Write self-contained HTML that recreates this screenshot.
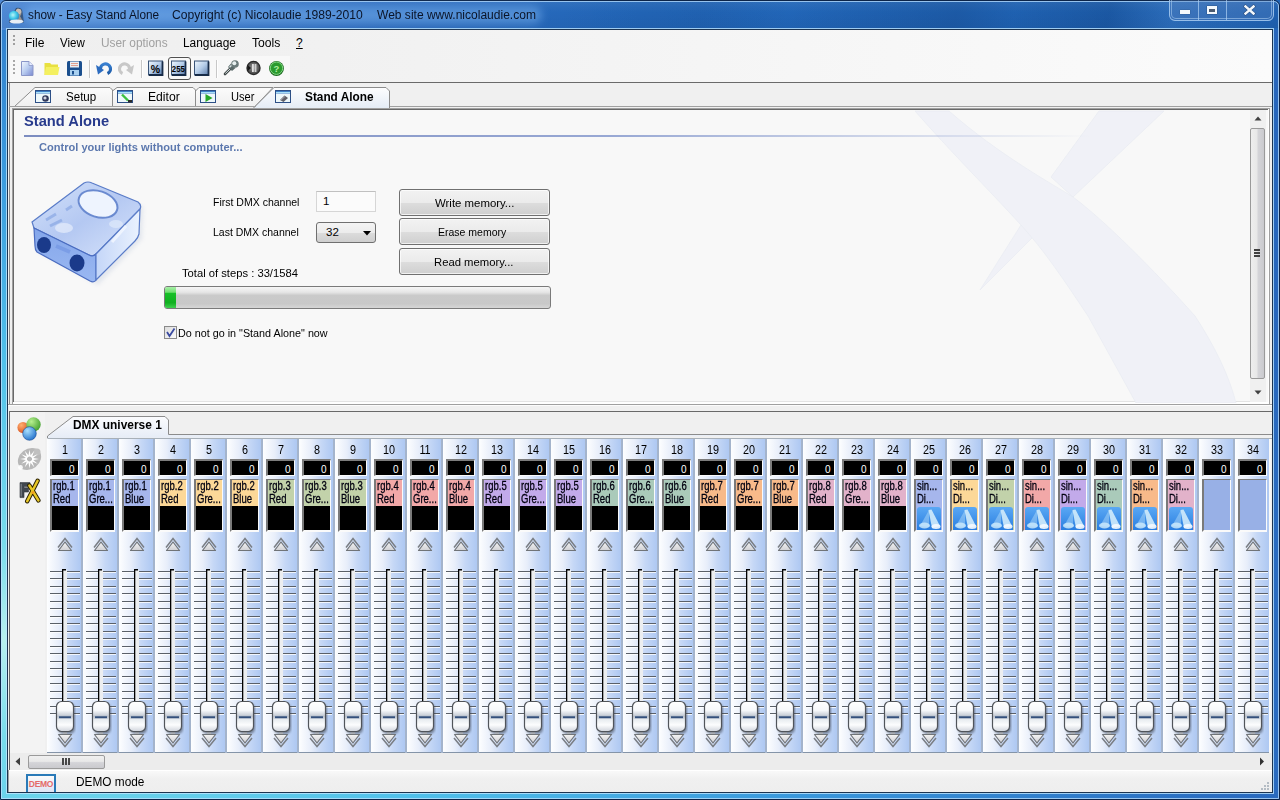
<!DOCTYPE html>
<html><head><meta charset="utf-8"><title>show - Easy Stand Alone</title>
<style>
html,body{margin:0;padding:0;width:1280px;height:800px;overflow:hidden;background:#2a6cc0;}
body{position:relative;font-family:"Liberation Sans",sans-serif;}
div,span,svg{position:absolute;}
.t{white-space:pre;}
</style></head><body>
<div style="left:0px;top:0px;width:1280px;height:800px;background:radial-gradient(ellipse 1400px 800px at 0px 640px,#b8f0ee 0%,#78dcec 12%,#50c0ea 35%,#3a98dc 60%,#2a6cc0 90%,#2766bb 100%);"></div>
<div style="left:0px;top:0px;width:1280px;height:30px;background:linear-gradient(90deg,#4d88d4 0%,#3f7ccc 12%,#2c6cbf 30%,#2266b8 50%,#1f64b6 100%);"></div>
<div style="left:0px;top:2px;width:1280px;height:26px;background:linear-gradient(180deg,rgba(255,255,255,.06) 0%,rgba(255,255,255,0) 40%,rgba(0,0,0,.04) 100%);"></div>
<div style="left:560px;top:2px;width:720px;height:26px;background:linear-gradient(100deg,rgba(0,20,60,0) 0%,rgba(0,20,60,.06) 20%,rgba(0,20,60,0) 32%,rgba(0,20,60,.14) 55%,rgba(0,20,60,.05) 63%,rgba(0,20,60,.16) 76%,rgba(255,255,255,.05) 85%,rgba(0,20,60,.05) 100%);"></div>
<div style="left:0px;top:0px;width:1280px;height:800px;box-sizing:border-box;border:1px solid #0c2448;border-radius:6px 6px 0 0;"></div>
<div style="left:1px;top:1px;width:1278px;height:798px;box-sizing:border-box;border:1px solid rgba(190,225,255,.75);border-radius:5px 5px 0 0;"></div>
<div style="left:6px;top:28px;width:1268px;height:766px;box-sizing:border-box;border:1px solid rgba(190,230,255,.8);"></div>
<div style="left:7px;top:29px;width:1266px;height:764px;box-sizing:border-box;border:1px solid #1c3450;"></div>
<div style="left:8px;top:30px;width:1264px;height:762px;background:#f0f0f0;"></div>
<svg style="position:absolute;left:7px;top:6px;" width="18" height="18" viewBox="0 0 18 18">
<defs><radialGradient id="gglobe" cx="0.4" cy="0.4" r="0.7"><stop offset="0" stop-color="#b8f4f8"/><stop offset="0.5" stop-color="#40c8e8"/><stop offset="1" stop-color="#2a78b8"/></radialGradient></defs>
<path d="M9 2 Q15 1 15.5 6 L16.5 13 Q17.5 16 16 17 L3 17 Q1 16 2.5 14 Z" fill="#1a2030" opacity="0.55"/>
<path d="M10 2.5 Q14.5 2.5 14.5 6.5 Q14.5 9 13 10 L16 15.5 L9 16 Z" fill="#9a9088"/>
<circle cx="11.5" cy="5.5" r="2.8" fill="#c8beb4"/>
<circle cx="7" cy="10" r="5.2" fill="url(#gglobe)"/>
<ellipse cx="9.5" cy="15.5" rx="7" ry="2" fill="#e8eef4"/>
</svg>
<div style="left:24px;top:6px;width:518px;height:18px;background:rgba(140,195,250,.42);border-radius:9px;filter:blur(4px);"></div>
<span class="t" style="left:28.32px;top:9.34px;font-size:12px;line-height:12px;font-weight:400;color:#0a1428;transform-origin:0 0;transform:scaleX(0.9826);">show - Easy Stand Alone</span>
<span class="t" style="left:172.39px;top:9.34px;font-size:12px;line-height:12px;font-weight:400;color:#0a1428;transform-origin:0 0;transform:scaleX(1.0107);">Copyright (c) Nicolaudie 1989-2010</span>
<span class="t" style="left:376.60px;top:9.34px;font-size:12px;line-height:12px;font-weight:400;color:#0a1428;transform-origin:0 0;transform:scaleX(1.0025);">Web site www.nicolaudie.com</span>
<div style="left:1169px;top:0px;width:105px;height:21px;box-sizing:border-box;border:1px solid rgba(175,210,245,.8);border-top:none;border-radius:0 0 6px 6px;background:rgba(90,130,190,.35);"></div>
<div style="left:1171px;top:0px;width:101px;height:19px;box-sizing:border-box;border:1px solid rgba(175,210,245,.55);border-top:none;border-radius:0 0 5px 5px;"></div>
<div style="left:1198px;top:0px;width:1px;height:20px;background:rgba(175,210,245,.7);"></div>
<div style="left:1226px;top:0px;width:1px;height:20px;background:rgba(175,210,245,.7);"></div>
<div style="left:1180px;top:10px;width:10px;height:4px;background:#f4f8fc;box-shadow:0 0 1px #123;"></div>
<div style="left:1207px;top:6px;width:10px;height:8px;box-sizing:border-box;border:2px solid #f4f8fc;border-top-width:3px;background:#4a5a70;box-shadow:0 0 1px #123;"></div>
<svg style="position:absolute;left:1243px;top:4px;" width="13" height="12" viewBox="0 0 13 12"><path d="M2.5 2.5 L10.5 9.5 M10.5 2.5 L2.5 9.5" stroke="#1a2a48" stroke-width="3.6" stroke-linecap="square" opacity="0.45"/><path d="M2.5 2.5 L10.5 9.5 M10.5 2.5 L2.5 9.5" stroke="#f4f8fc" stroke-width="2.4" stroke-linecap="square"/></svg>
<div style="left:8px;top:30px;width:1264px;height:52px;background:linear-gradient(90deg,#efefef 0%,#f1f1f1 25%,#f5f5f5 55%,#f9f9f9 85%,#fbfbfb 100%);"></div>
<div style="left:13px;top:35px;width:2px;height:2px;background:#a0a0a0;"></div>
<div style="left:13px;top:39px;width:2px;height:2px;background:#a0a0a0;"></div>
<div style="left:13px;top:43px;width:2px;height:2px;background:#a0a0a0;"></div>
<span class="t" style="left:25.29px;top:36.84px;font-size:12px;line-height:12px;font-weight:400;color:#000;transform-origin:0 0;transform:scaleX(1.0056);">File</span>
<span class="t" style="left:60.00px;top:36.84px;font-size:12px;line-height:12px;font-weight:400;color:#000;transform-origin:0 0;transform:scaleX(0.9615);">View</span>
<span class="t" style="left:100.71px;top:36.84px;font-size:12px;line-height:12px;font-weight:400;color:#a0a0a0;transform-origin:0 0;transform:scaleX(0.9894);">User options</span>
<span class="t" style="left:182.61px;top:36.84px;font-size:12px;line-height:12px;font-weight:400;color:#000;transform-origin:0 0;transform:scaleX(0.9923);">Language</span>
<span class="t" style="left:251.50px;top:36.84px;font-size:12px;line-height:12px;font-weight:400;color:#000;transform-origin:0 0;transform:scaleX(1.0143);">Tools</span>
<span class="t" style="left:296.00px;top:36.84px;font-size:12px;line-height:12px;font-weight:400;color:#000;transform-origin:0 0;text-decoration:underline;">?</span>
<div style="left:10px;top:56px;width:280px;height:26px;background:#f8f8f8;"></div>
<div style="left:13px;top:60px;width:2px;height:2px;background:#a8a8a8;"></div>
<div style="left:13px;top:64px;width:2px;height:2px;background:#a8a8a8;"></div>
<div style="left:13px;top:68px;width:2px;height:2px;background:#a8a8a8;"></div>
<div style="left:13px;top:72px;width:2px;height:2px;background:#a8a8a8;"></div>
<svg style="position:absolute;left:20px;top:60px;" width="15" height="17" viewBox="0 0 15 17">
<defs><linearGradient id="gdoc" x1="0" y1="0" x2="1" y2="1"><stop offset="0" stop-color="#f4f8ff"/><stop offset="0.5" stop-color="#b8ccf0"/><stop offset="1" stop-color="#7a88d0"/></linearGradient></defs>
<path d="M1.5 1.5 L9 1.5 L13 5.5 L13 15.5 L1.5 15.5 Z" fill="url(#gdoc)" stroke="#8a96c8" stroke-width="1"/>
<path d="M9 1.5 L9 5.5 L13 5.5" fill="#e8eeff" stroke="#8a96c8" stroke-width="0.8"/>
</svg>
<svg style="position:absolute;left:43px;top:60px;" width="18" height="17" viewBox="0 0 18 17">
<path d="M1.5 3 L7 3 L8.5 4.5 L15 4.5 L15 15 L1.5 15 Z" fill="#e8e040"/>
<path d="M3 7 L16.5 7 L15 15 L1.5 15 Z" fill="#f4f060"/>
</svg>
<svg style="position:absolute;left:66px;top:60px;" width="17" height="17" viewBox="0 0 17 17">
<rect x="1" y="1" width="15" height="15" rx="1.5" fill="#1b4f8e"/>
<rect x="4" y="1.5" width="9" height="6" fill="#e8eef4"/>
<rect x="5" y="3" width="7" height="1" fill="#e0a090"/>
<rect x="5" y="5" width="7" height="1" fill="#e0a090"/>
<rect x="4" y="10" width="9" height="5.5" fill="#a8d0f0"/>
<rect x="6" y="11" width="2" height="3.5" fill="#1b4f8e"/>
</svg>
<div style="left:89px;top:60px;width:1px;height:18px;background:#c8c8c8;"></div>
<div style="left:90px;top:60px;width:1px;height:18px;background:#ffffff;"></div>
<div style="left:141px;top:60px;width:1px;height:18px;background:#c8c8c8;"></div>
<div style="left:142px;top:60px;width:1px;height:18px;background:#ffffff;"></div>
<div style="left:216px;top:60px;width:1px;height:18px;background:#c8c8c8;"></div>
<div style="left:217px;top:60px;width:1px;height:18px;background:#ffffff;"></div>
<svg style="position:absolute;left:95px;top:60px;" width="17" height="16" viewBox="0 0 17 16">
<defs><linearGradient id="gund" x1="0" y1="0" x2="0" y2="1"><stop offset="0" stop-color="#3a80d0"/><stop offset="1" stop-color="#1a5aa8"/></linearGradient></defs>
<path d="M5.5 9.5 A5 5 0 1 1 12.5 13.5" fill="none" stroke="url(#gund)" stroke-width="3.2"/>
<path d="M1 5 L9 10 L3 14.5 Z" fill="#2c6cc0"/>
</svg>
<svg style="position:absolute;left:118px;top:60px;" width="17" height="16" viewBox="0 0 17 16">
<path d="M11.5 9.5 A5 5 0 1 0 4.5 13.5" fill="none" stroke="#c8c8c8" stroke-width="3.2"/>
<path d="M16 5 L8 10 L14 14.5 Z" fill="#c8c8c8"/>
</svg>
<svg style="position:absolute;left:148px;top:60px;" width="16" height="16" viewBox="0 0 16 16">
<defs><linearGradient id="gtb148" x1="0" y1="0" x2="1" y2="1"><stop offset="0" stop-color="#f0f8ff"/><stop offset="0.5" stop-color="#b4cce8"/><stop offset="1" stop-color="#5a7aa8"/></linearGradient></defs>
<rect x="0.5" y="1" width="14" height="14" fill="url(#gtb148)" stroke="#3a5478" stroke-width="1"/>
<path d="M1 15 L14.5 15 L14.5 1.5" fill="none" stroke="#182c48" stroke-width="1.8"/>
<text x="7.5" y="12.5" font-family="Liberation Sans" font-weight="700" font-size="10.5" text-anchor="middle" fill="#000">%</text></svg>
<div style="left:168px;top:57px;width:23px;height:23px;box-sizing:border-box;border:1px solid #505050;border-radius:3px;"></div>
<svg style="position:absolute;left:171px;top:60px;" width="16" height="16" viewBox="0 0 16 16">
<defs><linearGradient id="gtb171" x1="0" y1="0" x2="1" y2="1"><stop offset="0" stop-color="#f0f8ff"/><stop offset="0.5" stop-color="#b4cce8"/><stop offset="1" stop-color="#5a7aa8"/></linearGradient></defs>
<rect x="0.5" y="1" width="14" height="14" fill="url(#gtb171)" stroke="#3a5478" stroke-width="1"/>
<path d="M1 15 L14.5 15 L14.5 1.5" fill="none" stroke="#182c48" stroke-width="1.8"/>
<text x="7.3" y="12" font-family="Liberation Sans" font-weight="700" font-size="9" text-anchor="middle" fill="#000" textLength="13" lengthAdjust="spacingAndGlyphs">255</text></svg>
<svg style="position:absolute;left:194px;top:60px;" width="16" height="16" viewBox="0 0 16 16">
<defs><linearGradient id="gtb194" x1="0" y1="0" x2="1" y2="1"><stop offset="0" stop-color="#f0f8ff"/><stop offset="0.5" stop-color="#b4cce8"/><stop offset="1" stop-color="#5a7aa8"/></linearGradient></defs>
<rect x="0.5" y="1" width="14" height="14" fill="url(#gtb194)" stroke="#3a5478" stroke-width="1"/>
<path d="M1 15 L14.5 15 L14.5 1.5" fill="none" stroke="#182c48" stroke-width="1.8"/>
</svg>
<svg style="position:absolute;left:223px;top:59px;" width="17" height="17" viewBox="0 0 17 17">
<path d="M2 15 L7.5 9.5" stroke="#404848" stroke-width="2.6" stroke-linecap="round"/>
<path d="M2.3 14.5 L7 10" stroke="#e8f0f0" stroke-width="0.9"/>
<path d="M5 8 L9 12 L12.5 9 L8 4.5 Z" fill="#5a6a6a"/>
<path d="M6.5 8.2 L9.5 5.5" stroke="#e0e8e8" stroke-width="1.4"/>
<circle cx="12" cy="5" r="3.8" fill="#6a7a7a"/>
<circle cx="11.3" cy="4.2" r="2" fill="#e8f0f0"/>
</svg>
<svg style="position:absolute;left:245px;top:60px;" width="17" height="17" viewBox="0 0 17 17">
<defs><radialGradient id="gc1" cx="0.5" cy="0.45" r="0.6"><stop offset="0" stop-color="#a0a0a0"/><stop offset="1" stop-color="#3a3a3a"/></radialGradient></defs>
<circle cx="8.5" cy="8" r="7.2" fill="#2a2a2a"/>
<circle cx="8.5" cy="8" r="6" fill="url(#gc1)"/>
<rect x="7" y="4" width="1.8" height="8" fill="#e0e0e0"/><rect x="9.6" y="4" width="1.8" height="8" fill="#d0d0d0"/>
<path d="M2.5 5 L6 8 L2.5 11 Z" fill="#181818"/>
</svg>
<svg style="position:absolute;left:268px;top:60px;" width="17" height="17" viewBox="0 0 17 17">
<circle cx="8.5" cy="8.5" r="7.4" fill="#1a6a1e"/>
<circle cx="8.5" cy="8.2" r="6.2" fill="#2a9a2e" stroke="#90e090" stroke-width="0.9"/>
<text x="8.5" y="12" font-family="Liberation Sans" font-weight="700" font-size="9.5" text-anchor="middle" fill="#b0f0a0">?</text>
</svg>
<div style="left:8px;top:82px;width:1264px;height:1px;background:#6a6a6a;"></div>
<div style="left:9px;top:83px;width:1263px;height:1px;background:#9a9a9a;"></div>
<div style="left:9px;top:83px;width:1263px;height:25px;background:#f0f0f0;"></div>
<div style="left:9px;top:83px;width:1px;height:709px;background:#8a8a8a;"></div>
<svg style="position:absolute;left:9px;top:83px;" width="400" height="26" viewBox="0 0 400 26">
<defs><linearGradient id="gact" x1="0" y1="0" x2="0" y2="1"><stop offset="0" stop-color="#fdfdfe"/><stop offset="1" stop-color="#e4ecf6"/></linearGradient>
<linearGradient id="ginact" x1="0" y1="0" x2="0" y2="1"><stop offset="0" stop-color="#fbfbfb"/><stop offset="1" stop-color="#f0f0f0"/></linearGradient></defs>
<path d="M186.5 23.5 L186.5 8 L190 4.5 L264 4.5 L246 23.5 Z" fill="url(#ginact)" stroke="#8c8c8c" stroke-width="1"/>
<path d="M103.5 23.5 L103.5 8 L108 4.5 L184 4.5 L186.5 7 L186.5 23.5 Z" fill="url(#ginact)" stroke="#8c8c8c" stroke-width="1"/>
<path d="M5.5 23.5 L26 4.5 L101 4.5 L103.5 7 L103.5 23.5 Z" fill="url(#ginact)" stroke="#8c8c8c" stroke-width="1"/>
<path d="M0 23.5 L5.5 23.5 M264 23.5 L400 23.5" stroke="#9a9a9a" stroke-width="1"/>
<path d="M244 25.5 L265 4.5 L377 4.5 L380.5 8 L380.5 25.5" fill="url(#gact)" stroke="#8c8c8c" stroke-width="1"/>
</svg>
<div style="left:9px;top:106px;width:247px;height:1px;background:#a0a0a0;"></div>
<div style="left:390px;top:106px;width:882px;height:1px;background:#a0a0a0;"></div>
<svg style="position:absolute;left:35px;top:90px;" width="16" height="13" viewBox="0 0 16 13"><rect x="0.5" y="0.5" width="15" height="12" fill="#eef8fb" stroke="#2c4f86" stroke-width="1"/><rect x="1" y="1" width="14" height="2.5" fill="#3e7ec6"/><rect x="1" y="2" width="14" height="1" fill="#a8e0f8"/><circle cx="10.5" cy="8.5" r="3.3" fill="#30385a"/><circle cx="10" cy="8" r="1.6" fill="#d0d4e0"/></svg>
<svg style="position:absolute;left:117px;top:90px;" width="16" height="13" viewBox="0 0 16 13"><rect x="0.5" y="0.5" width="15" height="12" fill="#eef8fb" stroke="#2c4f86" stroke-width="1"/><rect x="1" y="1" width="14" height="2.5" fill="#3e7ec6"/><rect x="1" y="2" width="14" height="1" fill="#a8e0f8"/><path d="M5 4.5 L11 10.5" stroke="#3cc040" stroke-width="2.4"/><rect x="11" y="10" width="4" height="2.5" fill="#2a2a2a"/></svg>
<svg style="position:absolute;left:200px;top:90px;" width="16" height="13" viewBox="0 0 16 13"><rect x="0.5" y="0.5" width="15" height="12" fill="#eef8fb" stroke="#2c4f86" stroke-width="1"/><rect x="1" y="1" width="14" height="2.5" fill="#3e7ec6"/><rect x="1" y="2" width="14" height="1" fill="#a8e0f8"/><path d="M5.5 4 L12.5 8 L5.5 12 Z" fill="#28a828"/></svg>
<svg style="position:absolute;left:275px;top:90px;" width="16" height="13" viewBox="0 0 16 13"><rect x="0.5" y="0.5" width="15" height="12" fill="#eef8fb" stroke="#2c4f86" stroke-width="1"/><rect x="1" y="1" width="14" height="2.5" fill="#3e7ec6"/><rect x="1" y="2" width="14" height="1" fill="#a8e0f8"/><path d="M5 10 L9.5 5.5 L13 8 L8.5 12 Z" fill="#606068"/><path d="M6 10 L10 6.5" stroke="#b0b0b8" stroke-width="0.8"/></svg>
<span class="t" style="left:65.64px;top:90.84px;font-size:12px;line-height:12px;font-weight:400;color:#000;transform-origin:0 0;transform:scaleX(0.9633);">Setup</span>
<span class="t" style="left:147.59px;top:90.84px;font-size:12px;line-height:12px;font-weight:400;color:#000;transform-origin:0 0;transform:scaleX(1.0133);">Editor</span>
<span class="t" style="left:230.77px;top:90.84px;font-size:12px;line-height:12px;font-weight:400;color:#000;transform-origin:0 0;transform:scaleX(0.9250);">User</span>
<span class="t" style="left:305.01px;top:90.84px;font-size:12px;line-height:12px;font-weight:700;color:#000;transform-origin:0 0;transform:scaleX(0.9853);">Stand Alone</span>
<div style="left:12px;top:108px;width:1258px;height:297px;box-sizing:border-box;border:1px solid #a0a0a0;background:#f8f8f8;"></div>
<div style="left:13px;top:109px;width:1256px;height:1px;background:#696969;"></div>
<div style="left:13px;top:109px;width:1px;height:294px;background:#696969;"></div>
<div style="left:14px;top:401px;width:1236px;height:1px;background:#e4e4e4;"></div>
<div style="left:13px;top:402px;width:1256px;height:2px;background:#ffffff;"></div>
<div style="left:1268px;top:109px;width:1px;height:295px;background:#ffffff;"></div>
<svg style="position:absolute;left:14px;top:110px;" width="1236" height="293" viewBox="0 0 1236 293">
<path d="M901 1 L935 1 C985 45 1040 75 1059 87 C1090 110 1140 160 1181 206 C1200 235 1215 265 1222 293 L1122 293 C1105 262 1090 235 1074 206 C1050 170 1030 140 1007 115 C975 80 935 40 901 1 Z" fill="#f0f1f7" stroke="#eaecf3" stroke-width="0.8"/>
<path d="M1085 1 L1150 1 L1059 87 L1037 67 Z" fill="#f0f1f7" stroke="#eaecf3" stroke-width="0.8"/>
<path d="M1007 115 L966 180 L1018 128 Z" fill="#f0f1f7" stroke="#eaecf3" stroke-width="0.8"/>
</svg>
<span class="t" style="left:23.59px;top:114.23px;font-size:14.5px;line-height:14.5px;font-weight:700;color:#273a8c;transform-origin:0 0;transform:scaleX(1.0120);">Stand Alone</span>
<div style="left:24px;top:135px;width:1066px;height:2px;background:linear-gradient(90deg,#7c8cc0 0%,#98a8d4 55%,rgba(200,210,235,0) 100%);"></div>
<span class="t" style="left:39.00px;top:142.27px;font-size:11.5px;line-height:11.5px;font-weight:700;color:#5c78ae;transform-origin:0 0;transform:scaleX(0.9621);">Control your lights without computer...</span>
<svg style="position:absolute;left:26px;top:176px;" width="124" height="112" viewBox="0 0 124 112">
<defs>
<linearGradient id="gtop" x1="0" y1="0" x2="1" y2="1"><stop offset="0" stop-color="#d4e2fa"/><stop offset="0.5" stop-color="#b4c8f2"/><stop offset="1" stop-color="#d8e4fb"/></linearGradient>
<linearGradient id="gfront" x1="0" y1="0" x2="0" y2="1"><stop offset="0" stop-color="#84a6ea"/><stop offset="1" stop-color="#9ab8f2"/></linearGradient>
<linearGradient id="gright" x1="0" y1="0" x2="1" y2="0"><stop offset="0" stop-color="#c4d6f8"/><stop offset="1" stop-color="#eaf2fe"/></linearGradient>
<filter id="fsh" x="-20%" y="-20%" width="140%" height="140%"><feGaussianBlur stdDeviation="2"/></filter>
</defs>
<path d="M8 50 L60 8 L115 28 L114 60 L70 106 L10 72 Z" fill="#c8d0e0" opacity="0.45" filter="url(#fsh)" transform="translate(2,3)"/>
<path d="M6 46 L58 7 Q62 5 66 7 L112 26 Q116 29 114 33 L70 78 Q67 81 63 79 L8 52 Z" fill="url(#gtop)" stroke="#5a7cc8" stroke-width="1.2"/>
<path d="M8 52 L63 79 Q67 81 70 78 L70 104 Q68 107 64 105 L11 76 Q9 74 9 70 Z" fill="url(#gfront)" stroke="#4a6cc0" stroke-width="1.2"/>
<path d="M70 78 L114 33 L113 58 Q112 62 109 65 L70 104 Z" fill="url(#gright)" stroke="#5a7cc8" stroke-width="1.2"/>
<ellipse cx="72" cy="28" rx="20" ry="13" transform="rotate(18 72 28)" fill="#eef4fe" stroke="#6a8ad0" stroke-width="2"/>
<path d="M20 44 L30 38 M24 50 L36 44 M40 34 L46 30" stroke="#8aa8e4" stroke-width="3" opacity="0.7"/><ellipse cx="38" cy="52" rx="9" ry="5" fill="#eef4fe" opacity="0.6"/><ellipse cx="90" cy="48" rx="7" ry="4" fill="#e4eefc" opacity="0.6"/><path d="M30 70 L44 76" stroke="#6a8ee0" stroke-width="4" opacity="0.5"/>
<ellipse cx="18" cy="69" rx="7" ry="8" fill="#1a3a8a"/>
<ellipse cx="51" cy="87" rx="7.5" ry="8.5" fill="#1a3a8a"/>
<path d="M86 66 L100 50" stroke="#f4f8ff" stroke-width="3" opacity="0.8"/>
</svg>
<span class="t" style="left:212.59px;top:197.27px;font-size:11.5px;line-height:11.5px;font-weight:400;color:#000;transform-origin:0 0;transform:scaleX(0.9140);">First DMX channel</span>
<span class="t" style="left:213.49px;top:227.27px;font-size:11.5px;line-height:11.5px;font-weight:400;color:#000;transform-origin:0 0;transform:scaleX(0.9130);">Last DMX channel</span>
<div style="left:316px;top:191px;width:60px;height:21px;box-sizing:border-box;border:1px solid #d6d6d6;border-top-color:#c0c0c0;background:#fbfbfb;"></div>
<span class="t" style="left:323.00px;top:196.27px;font-size:11.5px;line-height:11.5px;font-weight:400;color:#000;transform-origin:0 0;">1</span>
<div style="left:316px;top:222px;width:60px;height:21px;box-sizing:border-box;border:1px solid #707070;border-radius:3px;background:linear-gradient(180deg,#f4f4f4 0%,#ececec 50%,#dcdcdc 51%,#cfcfcf 100%);"></div>
<span class="t" style="left:326.00px;top:227.27px;font-size:11.5px;line-height:11.5px;font-weight:400;color:#000;transform-origin:0 0;">32</span>
<svg style="position:absolute;left:363px;top:231px;" width="9" height="5" viewBox="0 0 9 5"><path d="M0 0 L8 0 L4 4.5 Z" fill="#000"/></svg>
<span class="t" style="left:182.00px;top:268.27px;font-size:11.5px;line-height:11.5px;font-weight:400;color:#000;transform-origin:0 0;transform:scaleX(0.9748);">Total of steps : 33/1584</span>
<div style="left:399px;top:189px;width:151px;height:27px;box-sizing:border-box;border:1px solid #707070;border-radius:3px;background:linear-gradient(180deg,#f2f2f2 0%,#ebebeb 50%,#dddddd 51%,#cfcfcf 100%);box-shadow:inset 0 0 0 1px rgba(255,255,255,.7);"></div>
<span class="t" style="left:434.50px;top:197.77px;font-size:11.5px;line-height:11.5px;font-weight:400;color:#000;transform-origin:0 0;transform:scaleX(0.9911);">Write memory...</span>
<div style="left:399px;top:218px;width:151px;height:27px;box-sizing:border-box;border:1px solid #707070;border-radius:3px;background:linear-gradient(180deg,#f2f2f2 0%,#ebebeb 50%,#dddddd 51%,#cfcfcf 100%);box-shadow:inset 0 0 0 1px rgba(255,255,255,.7);"></div>
<span class="t" style="left:438.49px;top:226.77px;font-size:11.5px;line-height:11.5px;font-weight:400;color:#000;transform-origin:0 0;transform:scaleX(0.9135);">Erase memory</span>
<div style="left:399px;top:248px;width:151px;height:27px;box-sizing:border-box;border:1px solid #707070;border-radius:3px;background:linear-gradient(180deg,#f2f2f2 0%,#ebebeb 50%,#dddddd 51%,#cfcfcf 100%);box-shadow:inset 0 0 0 1px rgba(255,255,255,.7);"></div>
<span class="t" style="left:433.52px;top:256.77px;font-size:11.5px;line-height:11.5px;font-weight:400;color:#000;transform-origin:0 0;transform:scaleX(0.9810);">Read memory...</span>
<div style="left:164px;top:286px;width:387px;height:23px;box-sizing:border-box;border:1px solid #7a7a7a;border-radius:3px;background:linear-gradient(180deg,#f6f6f6 0%,#e6e6e6 25%,#cacaca 40%,#c8c8c8 80%,#d6d6d6 100%);"></div>
<div style="left:165px;top:287px;width:11px;height:21px;border-radius:2px 0 0 2px;background:linear-gradient(180deg,#a8f0a8 0%,#70e070 25%,#18c028 30%,#10b020 75%,#40d050 100%);"></div>
<div style="left:164px;top:326px;width:13px;height:13px;box-sizing:border-box;border:1px solid #8a8a8a;background:linear-gradient(135deg,#dcdcdc,#fafafa);"></div>
<svg style="position:absolute;left:165px;top:327px;" width="11" height="11" viewBox="0 0 11 11"><path d="M2 5 L4.5 9 L9.5 1.5" fill="none" stroke="#3a4aa0" stroke-width="1.8"/></svg>
<span class="t" style="left:178.46px;top:327.77px;font-size:11.5px;line-height:11.5px;font-weight:400;color:#000;transform-origin:0 0;transform:scaleX(0.9371);">Do not go in &quot;Stand Alone&quot; now</span>
<div style="left:1250px;top:110px;width:17px;height:292px;background:#f0f0f0;"></div>
<div style="left:1266px;top:110px;width:2px;height:292px;background:#f8f8f8;"></div>
<svg style="position:absolute;left:1254px;top:116px;" width="9" height="6" viewBox="0 0 9 6"><path d="M0.5 4.5 L4 0.5 L7.5 4.5 Z" fill="#404040"/></svg>
<svg style="position:absolute;left:1254px;top:390px;" width="9" height="6" viewBox="0 0 9 6"><path d="M0.5 0.5 L4 4.5 L7.5 0.5 Z" fill="#404040"/></svg>
<div style="left:1250px;top:128px;width:15px;height:251px;box-sizing:border-box;border:1px solid #9a9a9a;border-radius:2px;background:linear-gradient(90deg,#eeeeee 0%,#e8e8e8 45%,#d4d4d8 55%,#cacace 100%);"></div>
<div style="left:1254px;top:249px;width:6px;height:1.5px;background:#404040;"></div>
<div style="left:1254px;top:252px;width:6px;height:1.5px;background:#404040;"></div>
<div style="left:1254px;top:255px;width:6px;height:1.5px;background:#404040;"></div>
<div style="left:8px;top:404px;width:1264px;height:1px;background:#a0a0a0;"></div>
<div style="left:8px;top:405px;width:1264px;height:6px;background:#f0f0f0;"></div>
<div style="left:8px;top:405px;width:1264px;height:1px;background:#fcfcfc;"></div>
<div style="left:9px;top:411px;width:1263px;height:1px;background:#696969;"></div>
<div style="left:9px;top:411px;width:1px;height:360px;background:#696969;"></div>
<div style="left:10px;top:412px;width:1262px;height:358px;background:#f0f0f0;"></div>
<div style="left:10px;top:412px;width:35px;height:358px;background:#f3f3f3;"></div>
<svg style="position:absolute;left:16px;top:416px;" width="28" height="26" viewBox="0 0 28 26">
<defs>
<radialGradient id="gr1" cx="0.35" cy="0.3" r="0.8"><stop offset="0" stop-color="#ffb070"/><stop offset="1" stop-color="#d84a18"/></radialGradient>
<radialGradient id="gr2" cx="0.35" cy="0.3" r="0.8"><stop offset="0" stop-color="#b8f090"/><stop offset="1" stop-color="#3a9a28"/></radialGradient>
<radialGradient id="gr3" cx="0.35" cy="0.3" r="0.8"><stop offset="0" stop-color="#a8e0ff"/><stop offset="1" stop-color="#1a6ac8"/></radialGradient>
</defs>
<circle cx="7" cy="11.5" r="5.6" fill="url(#gr1)"/>
<circle cx="17.5" cy="8.5" r="7.2" fill="url(#gr2)"/>
<circle cx="13.5" cy="17.5" r="6.8" fill="url(#gr3)" stroke="#1a4a90" stroke-width="0.6"/>
</svg>
<svg style="position:absolute;left:16px;top:447px;" width="27" height="26" viewBox="0 0 27 26">
<ellipse cx="13.5" cy="12" rx="12.5" ry="10" transform="rotate(-38 13.5 12)" fill="#b8b8b8"/>
<circle cx="21" cy="5" r="3.5" fill="#c0c0c0"/>
<path d="M16.00 13.25 L23.00 12.00 L16.00 10.75 Z" fill="#ffffff"/><path d="M15.04 14.33 L21.73 16.75 L16.29 12.17 Z" fill="#ffffff"/><path d="M13.67 14.79 L18.25 20.23 L15.83 13.54 Z" fill="#ffffff"/><path d="M12.25 14.50 L13.50 21.50 L14.75 14.50 Z" fill="#ffffff"/><path d="M11.17 13.54 L8.75 20.23 L13.33 14.79 Z" fill="#ffffff"/><path d="M10.71 12.17 L5.27 16.75 L11.96 14.33 Z" fill="#ffffff"/><path d="M11.00 10.75 L4.00 12.00 L11.00 13.25 Z" fill="#ffffff"/><path d="M11.96 9.67 L5.27 7.25 L10.71 11.83 Z" fill="#ffffff"/><path d="M13.33 9.21 L8.75 3.77 L11.17 10.46 Z" fill="#ffffff"/><path d="M14.75 9.50 L13.50 2.50 L12.25 9.50 Z" fill="#ffffff"/><path d="M15.83 10.46 L18.25 3.77 L13.67 9.21 Z" fill="#ffffff"/><path d="M16.29 11.83 L21.73 7.25 L15.04 9.67 Z" fill="#ffffff"/>
<circle cx="4.5" cy="20.5" r="2.4" fill="#ffffff" opacity="0.9"/>
</svg>
<svg style="position:absolute;left:18px;top:478px;" width="26" height="27" viewBox="0 0 26 27">
<path d="M2 4.6 L12 4.6 L12 8.6 L6 8.6 L6 9.8 L10.5 9.8 L10.5 14 L6 14 L6 19.6 L2 19.6 Z" fill="#40464e" stroke="#30343a" stroke-width="0.6"/>
<path d="M3.2 5.8 L3.2 18.5" stroke="#8a9098" stroke-width="0.9"/>
<path d="M19.6 2.8 L9.2 23.2 M11.4 7.5 L20.4 22.4" stroke="#2a2000" stroke-width="4.4" stroke-linecap="round"/>
<path d="M19.6 2.8 L9.2 23.2 M11.4 7.5 L20.4 22.4" stroke="#e8c828" stroke-width="2.5" stroke-linecap="round"/>
<circle cx="15" cy="14.5" r="1.6" fill="#f0a020"/>
</svg>
<svg style="position:absolute;left:45px;top:412px;" width="1227" height="28" viewBox="0 0 1227 28">
<defs><linearGradient id="gdmx" x1="0" y1="0" x2="0" y2="1"><stop offset="0" stop-color="#fbfcfe"/><stop offset="1" stop-color="#e6ecf6"/></linearGradient></defs>
<path d="M2.5 26 L2.5 24 L28 4.5 L120 4.5 L123.5 8 L123.5 22.5 L1227 22.5" fill="url(#gdmx)" stroke="#8c8c8c" stroke-width="1"/>
<path d="M2.5 26.5 L1227 26.5" stroke="#a8b0b8" stroke-width="1"/>
</svg>
<span class="t" style="left:72.61px;top:418.84px;font-size:12px;line-height:12px;font-weight:700;color:#000;transform-origin:0 0;transform:scaleX(0.9932);">DMX universe 1</span>
<svg width="0" height="0" style="position:absolute"><defs>
<linearGradient id="gthumb" x1="0" y1="0" x2="0" y2="1"><stop offset="0" stop-color="#ffffff"/><stop offset="0.3" stop-color="#f6f8fa"/><stop offset="0.42" stop-color="#d4d9e0"/><stop offset="0.5" stop-color="#c4cad2"/><stop offset="0.6" stop-color="#e8ecf0"/><stop offset="0.78" stop-color="#fcfdfe"/><stop offset="1" stop-color="#d0d4dc"/></linearGradient>
<linearGradient id="garr" x1="0" y1="0" x2="0" y2="1"><stop offset="0" stop-color="#f4f4f4"/><stop offset="1" stop-color="#d0d0d4"/></linearGradient>
<filter id="fth" x="-30%" y="-20%" width="160%" height="140%"><feGaussianBlur stdDeviation="1.2"/></filter>
<linearGradient id="gspot" x1="0" y1="0" x2="0" y2="1"><stop offset="0" stop-color="#5aa8f4"/><stop offset="1" stop-color="#2a7ee0"/></linearGradient>
</defs></svg>
<div style="left:47px;top:439px;width:34px;height:313px;background:linear-gradient(90deg,#fdfeff 0%,#e8eefa 35%,#c6d8f6 65%,#aec8f2 100%);"></div>
<div style="left:81px;top:439px;width:2px;height:314px;background:#a4b4cc;"></div>
<div style="left:47px;top:752px;width:34px;height:1px;background:#8494a8;"></div>
<span class="t" style="left:-135px;width:400px;text-align:center;top:443.84px;font-size:12px;line-height:12px;font-weight:400;color:#000;transform:scaleX(0.9);">1</span>
<div style="left:50px;top:459px;width:29px;height:17px;box-sizing:border-box;border-top:2px solid #7c7c7c;border-left:2px solid #7c7c7c;border-right:1px solid #fafafa;border-bottom:1px solid #fafafa;background:#000;"></div>
<span class="t" style="left:-325.5px;width:400px;text-align:right;top:464.54px;font-size:10px;line-height:10px;font-weight:400;color:#fff;transform-origin:100% 0;">0</span>
<div style="left:50px;top:479px;width:29px;height:53px;box-sizing:border-box;border-top:1px solid #7a7a7a;border-left:2px solid #7a7a7a;border-right:1px solid #fafafa;border-bottom:2px solid #fafafa;background:#000;"></div>
<div style="left:52px;top:480px;width:26px;height:26px;background:#a6b6ec;"></div>
<div class="t" style="left:53px;top:480px;font-size:12.2px;line-height:13px;color:#000010;transform:scaleX(0.78);-webkit-text-stroke:0.3px #000010;transform-origin:0 0;white-space:pre">rgb.1
Red</div>
<svg style="position:absolute;left:57px;top:537px;" width="16" height="16" viewBox="0 0 16 16"><path d="M1 10.5 L8 1.5 L15 10.5" fill="none" stroke="#7a7e84" stroke-width="1.5"/>
<path d="M8 5 L14.5 13.5 L1.5 13.5 Z" fill="url(#garr)" stroke="#707478" stroke-width="1.2" stroke-linejoin="round"/></svg>
<svg style="position:absolute;left:47px;top:569px;" width="34" height="166" viewBox="0 0 34 166"><rect x="3" y="2" width="12" height="1" fill="#5a6068"/><rect x="3" y="3" width="12" height="1" fill="#ffffff" opacity="0.8"/><rect x="20" y="2" width="13" height="1" fill="#5a6068"/><rect x="20" y="3" width="13" height="1" fill="#ffffff" opacity="0.8"/><rect x="3" y="9" width="12" height="1" fill="#5a6068"/><rect x="3" y="10" width="12" height="1" fill="#ffffff" opacity="0.8"/><rect x="20" y="9" width="13" height="1" fill="#5a6068"/><rect x="20" y="10" width="13" height="1" fill="#ffffff" opacity="0.8"/><rect x="3" y="17" width="12" height="1" fill="#5a6068"/><rect x="3" y="18" width="12" height="1" fill="#ffffff" opacity="0.8"/><rect x="20" y="17" width="13" height="1" fill="#5a6068"/><rect x="20" y="18" width="13" height="1" fill="#ffffff" opacity="0.8"/><rect x="3" y="24" width="12" height="1" fill="#5a6068"/><rect x="3" y="25" width="12" height="1" fill="#ffffff" opacity="0.8"/><rect x="20" y="24" width="13" height="1" fill="#5a6068"/><rect x="20" y="25" width="13" height="1" fill="#ffffff" opacity="0.8"/><rect x="3" y="32" width="12" height="1" fill="#5a6068"/><rect x="3" y="33" width="12" height="1" fill="#ffffff" opacity="0.8"/><rect x="20" y="32" width="13" height="1" fill="#5a6068"/><rect x="20" y="33" width="13" height="1" fill="#ffffff" opacity="0.8"/><rect x="3" y="39" width="12" height="1" fill="#5a6068"/><rect x="3" y="40" width="12" height="1" fill="#ffffff" opacity="0.8"/><rect x="20" y="39" width="13" height="1" fill="#5a6068"/><rect x="20" y="40" width="13" height="1" fill="#ffffff" opacity="0.8"/><rect x="3" y="47" width="12" height="1" fill="#5a6068"/><rect x="3" y="48" width="12" height="1" fill="#ffffff" opacity="0.8"/><rect x="20" y="47" width="13" height="1" fill="#5a6068"/><rect x="20" y="48" width="13" height="1" fill="#ffffff" opacity="0.8"/><rect x="3" y="54" width="12" height="1" fill="#5a6068"/><rect x="3" y="55" width="12" height="1" fill="#ffffff" opacity="0.8"/><rect x="20" y="54" width="13" height="1" fill="#5a6068"/><rect x="20" y="55" width="13" height="1" fill="#ffffff" opacity="0.8"/><rect x="3" y="62" width="12" height="1" fill="#5a6068"/><rect x="3" y="63" width="12" height="1" fill="#ffffff" opacity="0.8"/><rect x="20" y="62" width="13" height="1" fill="#5a6068"/><rect x="20" y="63" width="13" height="1" fill="#ffffff" opacity="0.8"/><rect x="3" y="69" width="12" height="1" fill="#5a6068"/><rect x="3" y="70" width="12" height="1" fill="#ffffff" opacity="0.8"/><rect x="20" y="69" width="13" height="1" fill="#5a6068"/><rect x="20" y="70" width="13" height="1" fill="#ffffff" opacity="0.8"/><rect x="3" y="77" width="12" height="1" fill="#5a6068"/><rect x="3" y="78" width="12" height="1" fill="#ffffff" opacity="0.8"/><rect x="20" y="77" width="13" height="1" fill="#5a6068"/><rect x="20" y="78" width="13" height="1" fill="#ffffff" opacity="0.8"/><rect x="3" y="84" width="12" height="1" fill="#5a6068"/><rect x="3" y="85" width="12" height="1" fill="#ffffff" opacity="0.8"/><rect x="20" y="84" width="13" height="1" fill="#5a6068"/><rect x="20" y="85" width="13" height="1" fill="#ffffff" opacity="0.8"/><rect x="3" y="92" width="12" height="1" fill="#5a6068"/><rect x="3" y="93" width="12" height="1" fill="#ffffff" opacity="0.8"/><rect x="20" y="92" width="13" height="1" fill="#5a6068"/><rect x="20" y="93" width="13" height="1" fill="#ffffff" opacity="0.8"/><rect x="3" y="99" width="12" height="1" fill="#5a6068"/><rect x="3" y="100" width="12" height="1" fill="#ffffff" opacity="0.8"/><rect x="20" y="99" width="13" height="1" fill="#5a6068"/><rect x="20" y="100" width="13" height="1" fill="#ffffff" opacity="0.8"/><rect x="3" y="107" width="12" height="1" fill="#5a6068"/><rect x="3" y="108" width="12" height="1" fill="#ffffff" opacity="0.8"/><rect x="20" y="107" width="13" height="1" fill="#5a6068"/><rect x="20" y="108" width="13" height="1" fill="#ffffff" opacity="0.8"/><rect x="3" y="114" width="12" height="1" fill="#5a6068"/><rect x="3" y="115" width="12" height="1" fill="#ffffff" opacity="0.8"/><rect x="20" y="114" width="13" height="1" fill="#5a6068"/><rect x="20" y="115" width="13" height="1" fill="#ffffff" opacity="0.8"/><rect x="3" y="122" width="12" height="1" fill="#5a6068"/><rect x="3" y="123" width="12" height="1" fill="#ffffff" opacity="0.8"/><rect x="20" y="122" width="13" height="1" fill="#5a6068"/><rect x="20" y="123" width="13" height="1" fill="#ffffff" opacity="0.8"/><rect x="3" y="129" width="12" height="1" fill="#5a6068"/><rect x="3" y="130" width="12" height="1" fill="#ffffff" opacity="0.8"/><rect x="20" y="129" width="13" height="1" fill="#5a6068"/><rect x="20" y="130" width="13" height="1" fill="#ffffff" opacity="0.8"/><rect x="3" y="137" width="12" height="1" fill="#5a6068"/><rect x="3" y="138" width="12" height="1" fill="#ffffff" opacity="0.8"/><rect x="20" y="137" width="13" height="1" fill="#5a6068"/><rect x="20" y="138" width="13" height="1" fill="#ffffff" opacity="0.8"/><rect x="3" y="144" width="12" height="1" fill="#5a6068"/><rect x="3" y="145" width="12" height="1" fill="#ffffff" opacity="0.8"/><rect x="20" y="144" width="13" height="1" fill="#5a6068"/><rect x="20" y="145" width="13" height="1" fill="#ffffff" opacity="0.8"/><rect x="16" y="1" width="4" height="165" fill="#eceef0"/>
<rect x="15" y="0" width="1.3" height="140" fill="#000"/><rect x="15" y="0" width="4" height="1.5" fill="#000"/></svg>
<svg style="position:absolute;left:54px;top:699px;" width="22" height="36" viewBox="0 0 22 36"><rect x="4" y="4" width="17" height="31" rx="5.5" fill="#3a4250" opacity="0.55" filter="url(#fth)"/>
<rect x="2.5" y="2.5" width="17" height="30" rx="5" fill="url(#gthumb)" stroke="#50545a" stroke-width="1.2"/>
<rect x="4.5" y="16.5" width="13" height="3.5" fill="#a8b4c4" opacity="0.5"/><rect x="5" y="17.3" width="12" height="1.8" fill="#34507c"/></svg>
<svg style="position:absolute;left:57px;top:733px;" width="16" height="16" viewBox="0 0 16 16"><path d="M1 5 L8 13.5 L15 5" fill="none" stroke="#7a7e84" stroke-width="1.5"/>
<path d="M8 10 L14.5 1.5 L1.5 1.5 Z" fill="url(#garr)" stroke="#707478" stroke-width="1.2" stroke-linejoin="round"/></svg>
<div style="left:83px;top:439px;width:34px;height:313px;background:linear-gradient(90deg,#fdfeff 0%,#e8eefa 35%,#c6d8f6 65%,#aec8f2 100%);"></div>
<div style="left:117px;top:439px;width:2px;height:314px;background:#a4b4cc;"></div>
<div style="left:83px;top:752px;width:34px;height:1px;background:#8494a8;"></div>
<span class="t" style="left:-99px;width:400px;text-align:center;top:443.84px;font-size:12px;line-height:12px;font-weight:400;color:#000;transform:scaleX(0.9);">2</span>
<div style="left:86px;top:459px;width:29px;height:17px;box-sizing:border-box;border-top:2px solid #7c7c7c;border-left:2px solid #7c7c7c;border-right:1px solid #fafafa;border-bottom:1px solid #fafafa;background:#000;"></div>
<span class="t" style="left:-289.5px;width:400px;text-align:right;top:464.54px;font-size:10px;line-height:10px;font-weight:400;color:#fff;transform-origin:100% 0;">0</span>
<div style="left:86px;top:479px;width:29px;height:53px;box-sizing:border-box;border-top:1px solid #7a7a7a;border-left:2px solid #7a7a7a;border-right:1px solid #fafafa;border-bottom:2px solid #fafafa;background:#000;"></div>
<div style="left:88px;top:480px;width:26px;height:26px;background:#a6b6ec;"></div>
<div class="t" style="left:89px;top:480px;font-size:12.2px;line-height:13px;color:#000010;transform:scaleX(0.78);-webkit-text-stroke:0.3px #000010;transform-origin:0 0;white-space:pre">rgb.1
Gre...</div>
<svg style="position:absolute;left:93px;top:537px;" width="16" height="16" viewBox="0 0 16 16"><path d="M1 10.5 L8 1.5 L15 10.5" fill="none" stroke="#7a7e84" stroke-width="1.5"/>
<path d="M8 5 L14.5 13.5 L1.5 13.5 Z" fill="url(#garr)" stroke="#707478" stroke-width="1.2" stroke-linejoin="round"/></svg>
<svg style="position:absolute;left:83px;top:569px;" width="34" height="166" viewBox="0 0 34 166"><rect x="3" y="2" width="12" height="1" fill="#5a6068"/><rect x="3" y="3" width="12" height="1" fill="#ffffff" opacity="0.8"/><rect x="20" y="2" width="13" height="1" fill="#5a6068"/><rect x="20" y="3" width="13" height="1" fill="#ffffff" opacity="0.8"/><rect x="3" y="9" width="12" height="1" fill="#5a6068"/><rect x="3" y="10" width="12" height="1" fill="#ffffff" opacity="0.8"/><rect x="20" y="9" width="13" height="1" fill="#5a6068"/><rect x="20" y="10" width="13" height="1" fill="#ffffff" opacity="0.8"/><rect x="3" y="17" width="12" height="1" fill="#5a6068"/><rect x="3" y="18" width="12" height="1" fill="#ffffff" opacity="0.8"/><rect x="20" y="17" width="13" height="1" fill="#5a6068"/><rect x="20" y="18" width="13" height="1" fill="#ffffff" opacity="0.8"/><rect x="3" y="24" width="12" height="1" fill="#5a6068"/><rect x="3" y="25" width="12" height="1" fill="#ffffff" opacity="0.8"/><rect x="20" y="24" width="13" height="1" fill="#5a6068"/><rect x="20" y="25" width="13" height="1" fill="#ffffff" opacity="0.8"/><rect x="3" y="32" width="12" height="1" fill="#5a6068"/><rect x="3" y="33" width="12" height="1" fill="#ffffff" opacity="0.8"/><rect x="20" y="32" width="13" height="1" fill="#5a6068"/><rect x="20" y="33" width="13" height="1" fill="#ffffff" opacity="0.8"/><rect x="3" y="39" width="12" height="1" fill="#5a6068"/><rect x="3" y="40" width="12" height="1" fill="#ffffff" opacity="0.8"/><rect x="20" y="39" width="13" height="1" fill="#5a6068"/><rect x="20" y="40" width="13" height="1" fill="#ffffff" opacity="0.8"/><rect x="3" y="47" width="12" height="1" fill="#5a6068"/><rect x="3" y="48" width="12" height="1" fill="#ffffff" opacity="0.8"/><rect x="20" y="47" width="13" height="1" fill="#5a6068"/><rect x="20" y="48" width="13" height="1" fill="#ffffff" opacity="0.8"/><rect x="3" y="54" width="12" height="1" fill="#5a6068"/><rect x="3" y="55" width="12" height="1" fill="#ffffff" opacity="0.8"/><rect x="20" y="54" width="13" height="1" fill="#5a6068"/><rect x="20" y="55" width="13" height="1" fill="#ffffff" opacity="0.8"/><rect x="3" y="62" width="12" height="1" fill="#5a6068"/><rect x="3" y="63" width="12" height="1" fill="#ffffff" opacity="0.8"/><rect x="20" y="62" width="13" height="1" fill="#5a6068"/><rect x="20" y="63" width="13" height="1" fill="#ffffff" opacity="0.8"/><rect x="3" y="69" width="12" height="1" fill="#5a6068"/><rect x="3" y="70" width="12" height="1" fill="#ffffff" opacity="0.8"/><rect x="20" y="69" width="13" height="1" fill="#5a6068"/><rect x="20" y="70" width="13" height="1" fill="#ffffff" opacity="0.8"/><rect x="3" y="77" width="12" height="1" fill="#5a6068"/><rect x="3" y="78" width="12" height="1" fill="#ffffff" opacity="0.8"/><rect x="20" y="77" width="13" height="1" fill="#5a6068"/><rect x="20" y="78" width="13" height="1" fill="#ffffff" opacity="0.8"/><rect x="3" y="84" width="12" height="1" fill="#5a6068"/><rect x="3" y="85" width="12" height="1" fill="#ffffff" opacity="0.8"/><rect x="20" y="84" width="13" height="1" fill="#5a6068"/><rect x="20" y="85" width="13" height="1" fill="#ffffff" opacity="0.8"/><rect x="3" y="92" width="12" height="1" fill="#5a6068"/><rect x="3" y="93" width="12" height="1" fill="#ffffff" opacity="0.8"/><rect x="20" y="92" width="13" height="1" fill="#5a6068"/><rect x="20" y="93" width="13" height="1" fill="#ffffff" opacity="0.8"/><rect x="3" y="99" width="12" height="1" fill="#5a6068"/><rect x="3" y="100" width="12" height="1" fill="#ffffff" opacity="0.8"/><rect x="20" y="99" width="13" height="1" fill="#5a6068"/><rect x="20" y="100" width="13" height="1" fill="#ffffff" opacity="0.8"/><rect x="3" y="107" width="12" height="1" fill="#5a6068"/><rect x="3" y="108" width="12" height="1" fill="#ffffff" opacity="0.8"/><rect x="20" y="107" width="13" height="1" fill="#5a6068"/><rect x="20" y="108" width="13" height="1" fill="#ffffff" opacity="0.8"/><rect x="3" y="114" width="12" height="1" fill="#5a6068"/><rect x="3" y="115" width="12" height="1" fill="#ffffff" opacity="0.8"/><rect x="20" y="114" width="13" height="1" fill="#5a6068"/><rect x="20" y="115" width="13" height="1" fill="#ffffff" opacity="0.8"/><rect x="3" y="122" width="12" height="1" fill="#5a6068"/><rect x="3" y="123" width="12" height="1" fill="#ffffff" opacity="0.8"/><rect x="20" y="122" width="13" height="1" fill="#5a6068"/><rect x="20" y="123" width="13" height="1" fill="#ffffff" opacity="0.8"/><rect x="3" y="129" width="12" height="1" fill="#5a6068"/><rect x="3" y="130" width="12" height="1" fill="#ffffff" opacity="0.8"/><rect x="20" y="129" width="13" height="1" fill="#5a6068"/><rect x="20" y="130" width="13" height="1" fill="#ffffff" opacity="0.8"/><rect x="3" y="137" width="12" height="1" fill="#5a6068"/><rect x="3" y="138" width="12" height="1" fill="#ffffff" opacity="0.8"/><rect x="20" y="137" width="13" height="1" fill="#5a6068"/><rect x="20" y="138" width="13" height="1" fill="#ffffff" opacity="0.8"/><rect x="3" y="144" width="12" height="1" fill="#5a6068"/><rect x="3" y="145" width="12" height="1" fill="#ffffff" opacity="0.8"/><rect x="20" y="144" width="13" height="1" fill="#5a6068"/><rect x="20" y="145" width="13" height="1" fill="#ffffff" opacity="0.8"/><rect x="16" y="1" width="4" height="165" fill="#eceef0"/>
<rect x="15" y="0" width="1.3" height="140" fill="#000"/><rect x="15" y="0" width="4" height="1.5" fill="#000"/></svg>
<svg style="position:absolute;left:90px;top:699px;" width="22" height="36" viewBox="0 0 22 36"><rect x="4" y="4" width="17" height="31" rx="5.5" fill="#3a4250" opacity="0.55" filter="url(#fth)"/>
<rect x="2.5" y="2.5" width="17" height="30" rx="5" fill="url(#gthumb)" stroke="#50545a" stroke-width="1.2"/>
<rect x="4.5" y="16.5" width="13" height="3.5" fill="#a8b4c4" opacity="0.5"/><rect x="5" y="17.3" width="12" height="1.8" fill="#34507c"/></svg>
<svg style="position:absolute;left:93px;top:733px;" width="16" height="16" viewBox="0 0 16 16"><path d="M1 5 L8 13.5 L15 5" fill="none" stroke="#7a7e84" stroke-width="1.5"/>
<path d="M8 10 L14.5 1.5 L1.5 1.5 Z" fill="url(#garr)" stroke="#707478" stroke-width="1.2" stroke-linejoin="round"/></svg>
<div style="left:119px;top:439px;width:34px;height:313px;background:linear-gradient(90deg,#fdfeff 0%,#e8eefa 35%,#c6d8f6 65%,#aec8f2 100%);"></div>
<div style="left:153px;top:439px;width:2px;height:314px;background:#a4b4cc;"></div>
<div style="left:119px;top:752px;width:34px;height:1px;background:#8494a8;"></div>
<span class="t" style="left:-63px;width:400px;text-align:center;top:443.84px;font-size:12px;line-height:12px;font-weight:400;color:#000;transform:scaleX(0.9);">3</span>
<div style="left:122px;top:459px;width:29px;height:17px;box-sizing:border-box;border-top:2px solid #7c7c7c;border-left:2px solid #7c7c7c;border-right:1px solid #fafafa;border-bottom:1px solid #fafafa;background:#000;"></div>
<span class="t" style="left:-253.5px;width:400px;text-align:right;top:464.54px;font-size:10px;line-height:10px;font-weight:400;color:#fff;transform-origin:100% 0;">0</span>
<div style="left:122px;top:479px;width:29px;height:53px;box-sizing:border-box;border-top:1px solid #7a7a7a;border-left:2px solid #7a7a7a;border-right:1px solid #fafafa;border-bottom:2px solid #fafafa;background:#000;"></div>
<div style="left:124px;top:480px;width:26px;height:26px;background:#a6b6ec;"></div>
<div class="t" style="left:125px;top:480px;font-size:12.2px;line-height:13px;color:#000010;transform:scaleX(0.78);-webkit-text-stroke:0.3px #000010;transform-origin:0 0;white-space:pre">rgb.1
Blue</div>
<svg style="position:absolute;left:129px;top:537px;" width="16" height="16" viewBox="0 0 16 16"><path d="M1 10.5 L8 1.5 L15 10.5" fill="none" stroke="#7a7e84" stroke-width="1.5"/>
<path d="M8 5 L14.5 13.5 L1.5 13.5 Z" fill="url(#garr)" stroke="#707478" stroke-width="1.2" stroke-linejoin="round"/></svg>
<svg style="position:absolute;left:119px;top:569px;" width="34" height="166" viewBox="0 0 34 166"><rect x="3" y="2" width="12" height="1" fill="#5a6068"/><rect x="3" y="3" width="12" height="1" fill="#ffffff" opacity="0.8"/><rect x="20" y="2" width="13" height="1" fill="#5a6068"/><rect x="20" y="3" width="13" height="1" fill="#ffffff" opacity="0.8"/><rect x="3" y="9" width="12" height="1" fill="#5a6068"/><rect x="3" y="10" width="12" height="1" fill="#ffffff" opacity="0.8"/><rect x="20" y="9" width="13" height="1" fill="#5a6068"/><rect x="20" y="10" width="13" height="1" fill="#ffffff" opacity="0.8"/><rect x="3" y="17" width="12" height="1" fill="#5a6068"/><rect x="3" y="18" width="12" height="1" fill="#ffffff" opacity="0.8"/><rect x="20" y="17" width="13" height="1" fill="#5a6068"/><rect x="20" y="18" width="13" height="1" fill="#ffffff" opacity="0.8"/><rect x="3" y="24" width="12" height="1" fill="#5a6068"/><rect x="3" y="25" width="12" height="1" fill="#ffffff" opacity="0.8"/><rect x="20" y="24" width="13" height="1" fill="#5a6068"/><rect x="20" y="25" width="13" height="1" fill="#ffffff" opacity="0.8"/><rect x="3" y="32" width="12" height="1" fill="#5a6068"/><rect x="3" y="33" width="12" height="1" fill="#ffffff" opacity="0.8"/><rect x="20" y="32" width="13" height="1" fill="#5a6068"/><rect x="20" y="33" width="13" height="1" fill="#ffffff" opacity="0.8"/><rect x="3" y="39" width="12" height="1" fill="#5a6068"/><rect x="3" y="40" width="12" height="1" fill="#ffffff" opacity="0.8"/><rect x="20" y="39" width="13" height="1" fill="#5a6068"/><rect x="20" y="40" width="13" height="1" fill="#ffffff" opacity="0.8"/><rect x="3" y="47" width="12" height="1" fill="#5a6068"/><rect x="3" y="48" width="12" height="1" fill="#ffffff" opacity="0.8"/><rect x="20" y="47" width="13" height="1" fill="#5a6068"/><rect x="20" y="48" width="13" height="1" fill="#ffffff" opacity="0.8"/><rect x="3" y="54" width="12" height="1" fill="#5a6068"/><rect x="3" y="55" width="12" height="1" fill="#ffffff" opacity="0.8"/><rect x="20" y="54" width="13" height="1" fill="#5a6068"/><rect x="20" y="55" width="13" height="1" fill="#ffffff" opacity="0.8"/><rect x="3" y="62" width="12" height="1" fill="#5a6068"/><rect x="3" y="63" width="12" height="1" fill="#ffffff" opacity="0.8"/><rect x="20" y="62" width="13" height="1" fill="#5a6068"/><rect x="20" y="63" width="13" height="1" fill="#ffffff" opacity="0.8"/><rect x="3" y="69" width="12" height="1" fill="#5a6068"/><rect x="3" y="70" width="12" height="1" fill="#ffffff" opacity="0.8"/><rect x="20" y="69" width="13" height="1" fill="#5a6068"/><rect x="20" y="70" width="13" height="1" fill="#ffffff" opacity="0.8"/><rect x="3" y="77" width="12" height="1" fill="#5a6068"/><rect x="3" y="78" width="12" height="1" fill="#ffffff" opacity="0.8"/><rect x="20" y="77" width="13" height="1" fill="#5a6068"/><rect x="20" y="78" width="13" height="1" fill="#ffffff" opacity="0.8"/><rect x="3" y="84" width="12" height="1" fill="#5a6068"/><rect x="3" y="85" width="12" height="1" fill="#ffffff" opacity="0.8"/><rect x="20" y="84" width="13" height="1" fill="#5a6068"/><rect x="20" y="85" width="13" height="1" fill="#ffffff" opacity="0.8"/><rect x="3" y="92" width="12" height="1" fill="#5a6068"/><rect x="3" y="93" width="12" height="1" fill="#ffffff" opacity="0.8"/><rect x="20" y="92" width="13" height="1" fill="#5a6068"/><rect x="20" y="93" width="13" height="1" fill="#ffffff" opacity="0.8"/><rect x="3" y="99" width="12" height="1" fill="#5a6068"/><rect x="3" y="100" width="12" height="1" fill="#ffffff" opacity="0.8"/><rect x="20" y="99" width="13" height="1" fill="#5a6068"/><rect x="20" y="100" width="13" height="1" fill="#ffffff" opacity="0.8"/><rect x="3" y="107" width="12" height="1" fill="#5a6068"/><rect x="3" y="108" width="12" height="1" fill="#ffffff" opacity="0.8"/><rect x="20" y="107" width="13" height="1" fill="#5a6068"/><rect x="20" y="108" width="13" height="1" fill="#ffffff" opacity="0.8"/><rect x="3" y="114" width="12" height="1" fill="#5a6068"/><rect x="3" y="115" width="12" height="1" fill="#ffffff" opacity="0.8"/><rect x="20" y="114" width="13" height="1" fill="#5a6068"/><rect x="20" y="115" width="13" height="1" fill="#ffffff" opacity="0.8"/><rect x="3" y="122" width="12" height="1" fill="#5a6068"/><rect x="3" y="123" width="12" height="1" fill="#ffffff" opacity="0.8"/><rect x="20" y="122" width="13" height="1" fill="#5a6068"/><rect x="20" y="123" width="13" height="1" fill="#ffffff" opacity="0.8"/><rect x="3" y="129" width="12" height="1" fill="#5a6068"/><rect x="3" y="130" width="12" height="1" fill="#ffffff" opacity="0.8"/><rect x="20" y="129" width="13" height="1" fill="#5a6068"/><rect x="20" y="130" width="13" height="1" fill="#ffffff" opacity="0.8"/><rect x="3" y="137" width="12" height="1" fill="#5a6068"/><rect x="3" y="138" width="12" height="1" fill="#ffffff" opacity="0.8"/><rect x="20" y="137" width="13" height="1" fill="#5a6068"/><rect x="20" y="138" width="13" height="1" fill="#ffffff" opacity="0.8"/><rect x="3" y="144" width="12" height="1" fill="#5a6068"/><rect x="3" y="145" width="12" height="1" fill="#ffffff" opacity="0.8"/><rect x="20" y="144" width="13" height="1" fill="#5a6068"/><rect x="20" y="145" width="13" height="1" fill="#ffffff" opacity="0.8"/><rect x="16" y="1" width="4" height="165" fill="#eceef0"/>
<rect x="15" y="0" width="1.3" height="140" fill="#000"/><rect x="15" y="0" width="4" height="1.5" fill="#000"/></svg>
<svg style="position:absolute;left:126px;top:699px;" width="22" height="36" viewBox="0 0 22 36"><rect x="4" y="4" width="17" height="31" rx="5.5" fill="#3a4250" opacity="0.55" filter="url(#fth)"/>
<rect x="2.5" y="2.5" width="17" height="30" rx="5" fill="url(#gthumb)" stroke="#50545a" stroke-width="1.2"/>
<rect x="4.5" y="16.5" width="13" height="3.5" fill="#a8b4c4" opacity="0.5"/><rect x="5" y="17.3" width="12" height="1.8" fill="#34507c"/></svg>
<svg style="position:absolute;left:129px;top:733px;" width="16" height="16" viewBox="0 0 16 16"><path d="M1 5 L8 13.5 L15 5" fill="none" stroke="#7a7e84" stroke-width="1.5"/>
<path d="M8 10 L14.5 1.5 L1.5 1.5 Z" fill="url(#garr)" stroke="#707478" stroke-width="1.2" stroke-linejoin="round"/></svg>
<div style="left:155px;top:439px;width:34px;height:313px;background:linear-gradient(90deg,#fdfeff 0%,#e8eefa 35%,#c6d8f6 65%,#aec8f2 100%);"></div>
<div style="left:189px;top:439px;width:2px;height:314px;background:#a4b4cc;"></div>
<div style="left:155px;top:752px;width:34px;height:1px;background:#8494a8;"></div>
<span class="t" style="left:-27px;width:400px;text-align:center;top:443.84px;font-size:12px;line-height:12px;font-weight:400;color:#000;transform:scaleX(0.9);">4</span>
<div style="left:158px;top:459px;width:29px;height:17px;box-sizing:border-box;border-top:2px solid #7c7c7c;border-left:2px solid #7c7c7c;border-right:1px solid #fafafa;border-bottom:1px solid #fafafa;background:#000;"></div>
<span class="t" style="left:-217.5px;width:400px;text-align:right;top:464.54px;font-size:10px;line-height:10px;font-weight:400;color:#fff;transform-origin:100% 0;">0</span>
<div style="left:158px;top:479px;width:29px;height:53px;box-sizing:border-box;border-top:1px solid #7a7a7a;border-left:2px solid #7a7a7a;border-right:1px solid #fafafa;border-bottom:2px solid #fafafa;background:#000;"></div>
<div style="left:160px;top:480px;width:26px;height:26px;background:#fcd898;"></div>
<div class="t" style="left:161px;top:480px;font-size:12.2px;line-height:13px;color:#000010;transform:scaleX(0.78);-webkit-text-stroke:0.3px #000010;transform-origin:0 0;white-space:pre">rgb.2
Red</div>
<svg style="position:absolute;left:165px;top:537px;" width="16" height="16" viewBox="0 0 16 16"><path d="M1 10.5 L8 1.5 L15 10.5" fill="none" stroke="#7a7e84" stroke-width="1.5"/>
<path d="M8 5 L14.5 13.5 L1.5 13.5 Z" fill="url(#garr)" stroke="#707478" stroke-width="1.2" stroke-linejoin="round"/></svg>
<svg style="position:absolute;left:155px;top:569px;" width="34" height="166" viewBox="0 0 34 166"><rect x="3" y="2" width="12" height="1" fill="#5a6068"/><rect x="3" y="3" width="12" height="1" fill="#ffffff" opacity="0.8"/><rect x="20" y="2" width="13" height="1" fill="#5a6068"/><rect x="20" y="3" width="13" height="1" fill="#ffffff" opacity="0.8"/><rect x="3" y="9" width="12" height="1" fill="#5a6068"/><rect x="3" y="10" width="12" height="1" fill="#ffffff" opacity="0.8"/><rect x="20" y="9" width="13" height="1" fill="#5a6068"/><rect x="20" y="10" width="13" height="1" fill="#ffffff" opacity="0.8"/><rect x="3" y="17" width="12" height="1" fill="#5a6068"/><rect x="3" y="18" width="12" height="1" fill="#ffffff" opacity="0.8"/><rect x="20" y="17" width="13" height="1" fill="#5a6068"/><rect x="20" y="18" width="13" height="1" fill="#ffffff" opacity="0.8"/><rect x="3" y="24" width="12" height="1" fill="#5a6068"/><rect x="3" y="25" width="12" height="1" fill="#ffffff" opacity="0.8"/><rect x="20" y="24" width="13" height="1" fill="#5a6068"/><rect x="20" y="25" width="13" height="1" fill="#ffffff" opacity="0.8"/><rect x="3" y="32" width="12" height="1" fill="#5a6068"/><rect x="3" y="33" width="12" height="1" fill="#ffffff" opacity="0.8"/><rect x="20" y="32" width="13" height="1" fill="#5a6068"/><rect x="20" y="33" width="13" height="1" fill="#ffffff" opacity="0.8"/><rect x="3" y="39" width="12" height="1" fill="#5a6068"/><rect x="3" y="40" width="12" height="1" fill="#ffffff" opacity="0.8"/><rect x="20" y="39" width="13" height="1" fill="#5a6068"/><rect x="20" y="40" width="13" height="1" fill="#ffffff" opacity="0.8"/><rect x="3" y="47" width="12" height="1" fill="#5a6068"/><rect x="3" y="48" width="12" height="1" fill="#ffffff" opacity="0.8"/><rect x="20" y="47" width="13" height="1" fill="#5a6068"/><rect x="20" y="48" width="13" height="1" fill="#ffffff" opacity="0.8"/><rect x="3" y="54" width="12" height="1" fill="#5a6068"/><rect x="3" y="55" width="12" height="1" fill="#ffffff" opacity="0.8"/><rect x="20" y="54" width="13" height="1" fill="#5a6068"/><rect x="20" y="55" width="13" height="1" fill="#ffffff" opacity="0.8"/><rect x="3" y="62" width="12" height="1" fill="#5a6068"/><rect x="3" y="63" width="12" height="1" fill="#ffffff" opacity="0.8"/><rect x="20" y="62" width="13" height="1" fill="#5a6068"/><rect x="20" y="63" width="13" height="1" fill="#ffffff" opacity="0.8"/><rect x="3" y="69" width="12" height="1" fill="#5a6068"/><rect x="3" y="70" width="12" height="1" fill="#ffffff" opacity="0.8"/><rect x="20" y="69" width="13" height="1" fill="#5a6068"/><rect x="20" y="70" width="13" height="1" fill="#ffffff" opacity="0.8"/><rect x="3" y="77" width="12" height="1" fill="#5a6068"/><rect x="3" y="78" width="12" height="1" fill="#ffffff" opacity="0.8"/><rect x="20" y="77" width="13" height="1" fill="#5a6068"/><rect x="20" y="78" width="13" height="1" fill="#ffffff" opacity="0.8"/><rect x="3" y="84" width="12" height="1" fill="#5a6068"/><rect x="3" y="85" width="12" height="1" fill="#ffffff" opacity="0.8"/><rect x="20" y="84" width="13" height="1" fill="#5a6068"/><rect x="20" y="85" width="13" height="1" fill="#ffffff" opacity="0.8"/><rect x="3" y="92" width="12" height="1" fill="#5a6068"/><rect x="3" y="93" width="12" height="1" fill="#ffffff" opacity="0.8"/><rect x="20" y="92" width="13" height="1" fill="#5a6068"/><rect x="20" y="93" width="13" height="1" fill="#ffffff" opacity="0.8"/><rect x="3" y="99" width="12" height="1" fill="#5a6068"/><rect x="3" y="100" width="12" height="1" fill="#ffffff" opacity="0.8"/><rect x="20" y="99" width="13" height="1" fill="#5a6068"/><rect x="20" y="100" width="13" height="1" fill="#ffffff" opacity="0.8"/><rect x="3" y="107" width="12" height="1" fill="#5a6068"/><rect x="3" y="108" width="12" height="1" fill="#ffffff" opacity="0.8"/><rect x="20" y="107" width="13" height="1" fill="#5a6068"/><rect x="20" y="108" width="13" height="1" fill="#ffffff" opacity="0.8"/><rect x="3" y="114" width="12" height="1" fill="#5a6068"/><rect x="3" y="115" width="12" height="1" fill="#ffffff" opacity="0.8"/><rect x="20" y="114" width="13" height="1" fill="#5a6068"/><rect x="20" y="115" width="13" height="1" fill="#ffffff" opacity="0.8"/><rect x="3" y="122" width="12" height="1" fill="#5a6068"/><rect x="3" y="123" width="12" height="1" fill="#ffffff" opacity="0.8"/><rect x="20" y="122" width="13" height="1" fill="#5a6068"/><rect x="20" y="123" width="13" height="1" fill="#ffffff" opacity="0.8"/><rect x="3" y="129" width="12" height="1" fill="#5a6068"/><rect x="3" y="130" width="12" height="1" fill="#ffffff" opacity="0.8"/><rect x="20" y="129" width="13" height="1" fill="#5a6068"/><rect x="20" y="130" width="13" height="1" fill="#ffffff" opacity="0.8"/><rect x="3" y="137" width="12" height="1" fill="#5a6068"/><rect x="3" y="138" width="12" height="1" fill="#ffffff" opacity="0.8"/><rect x="20" y="137" width="13" height="1" fill="#5a6068"/><rect x="20" y="138" width="13" height="1" fill="#ffffff" opacity="0.8"/><rect x="3" y="144" width="12" height="1" fill="#5a6068"/><rect x="3" y="145" width="12" height="1" fill="#ffffff" opacity="0.8"/><rect x="20" y="144" width="13" height="1" fill="#5a6068"/><rect x="20" y="145" width="13" height="1" fill="#ffffff" opacity="0.8"/><rect x="16" y="1" width="4" height="165" fill="#eceef0"/>
<rect x="15" y="0" width="1.3" height="140" fill="#000"/><rect x="15" y="0" width="4" height="1.5" fill="#000"/></svg>
<svg style="position:absolute;left:162px;top:699px;" width="22" height="36" viewBox="0 0 22 36"><rect x="4" y="4" width="17" height="31" rx="5.5" fill="#3a4250" opacity="0.55" filter="url(#fth)"/>
<rect x="2.5" y="2.5" width="17" height="30" rx="5" fill="url(#gthumb)" stroke="#50545a" stroke-width="1.2"/>
<rect x="4.5" y="16.5" width="13" height="3.5" fill="#a8b4c4" opacity="0.5"/><rect x="5" y="17.3" width="12" height="1.8" fill="#34507c"/></svg>
<svg style="position:absolute;left:165px;top:733px;" width="16" height="16" viewBox="0 0 16 16"><path d="M1 5 L8 13.5 L15 5" fill="none" stroke="#7a7e84" stroke-width="1.5"/>
<path d="M8 10 L14.5 1.5 L1.5 1.5 Z" fill="url(#garr)" stroke="#707478" stroke-width="1.2" stroke-linejoin="round"/></svg>
<div style="left:191px;top:439px;width:34px;height:313px;background:linear-gradient(90deg,#fdfeff 0%,#e8eefa 35%,#c6d8f6 65%,#aec8f2 100%);"></div>
<div style="left:225px;top:439px;width:2px;height:314px;background:#a4b4cc;"></div>
<div style="left:191px;top:752px;width:34px;height:1px;background:#8494a8;"></div>
<span class="t" style="left:9px;width:400px;text-align:center;top:443.84px;font-size:12px;line-height:12px;font-weight:400;color:#000;transform:scaleX(0.9);">5</span>
<div style="left:194px;top:459px;width:29px;height:17px;box-sizing:border-box;border-top:2px solid #7c7c7c;border-left:2px solid #7c7c7c;border-right:1px solid #fafafa;border-bottom:1px solid #fafafa;background:#000;"></div>
<span class="t" style="left:-181.5px;width:400px;text-align:right;top:464.54px;font-size:10px;line-height:10px;font-weight:400;color:#fff;transform-origin:100% 0;">0</span>
<div style="left:194px;top:479px;width:29px;height:53px;box-sizing:border-box;border-top:1px solid #7a7a7a;border-left:2px solid #7a7a7a;border-right:1px solid #fafafa;border-bottom:2px solid #fafafa;background:#000;"></div>
<div style="left:196px;top:480px;width:26px;height:26px;background:#fcd898;"></div>
<div class="t" style="left:197px;top:480px;font-size:12.2px;line-height:13px;color:#000010;transform:scaleX(0.78);-webkit-text-stroke:0.3px #000010;transform-origin:0 0;white-space:pre">rgb.2
Gre...</div>
<svg style="position:absolute;left:201px;top:537px;" width="16" height="16" viewBox="0 0 16 16"><path d="M1 10.5 L8 1.5 L15 10.5" fill="none" stroke="#7a7e84" stroke-width="1.5"/>
<path d="M8 5 L14.5 13.5 L1.5 13.5 Z" fill="url(#garr)" stroke="#707478" stroke-width="1.2" stroke-linejoin="round"/></svg>
<svg style="position:absolute;left:191px;top:569px;" width="34" height="166" viewBox="0 0 34 166"><rect x="3" y="2" width="12" height="1" fill="#5a6068"/><rect x="3" y="3" width="12" height="1" fill="#ffffff" opacity="0.8"/><rect x="20" y="2" width="13" height="1" fill="#5a6068"/><rect x="20" y="3" width="13" height="1" fill="#ffffff" opacity="0.8"/><rect x="3" y="9" width="12" height="1" fill="#5a6068"/><rect x="3" y="10" width="12" height="1" fill="#ffffff" opacity="0.8"/><rect x="20" y="9" width="13" height="1" fill="#5a6068"/><rect x="20" y="10" width="13" height="1" fill="#ffffff" opacity="0.8"/><rect x="3" y="17" width="12" height="1" fill="#5a6068"/><rect x="3" y="18" width="12" height="1" fill="#ffffff" opacity="0.8"/><rect x="20" y="17" width="13" height="1" fill="#5a6068"/><rect x="20" y="18" width="13" height="1" fill="#ffffff" opacity="0.8"/><rect x="3" y="24" width="12" height="1" fill="#5a6068"/><rect x="3" y="25" width="12" height="1" fill="#ffffff" opacity="0.8"/><rect x="20" y="24" width="13" height="1" fill="#5a6068"/><rect x="20" y="25" width="13" height="1" fill="#ffffff" opacity="0.8"/><rect x="3" y="32" width="12" height="1" fill="#5a6068"/><rect x="3" y="33" width="12" height="1" fill="#ffffff" opacity="0.8"/><rect x="20" y="32" width="13" height="1" fill="#5a6068"/><rect x="20" y="33" width="13" height="1" fill="#ffffff" opacity="0.8"/><rect x="3" y="39" width="12" height="1" fill="#5a6068"/><rect x="3" y="40" width="12" height="1" fill="#ffffff" opacity="0.8"/><rect x="20" y="39" width="13" height="1" fill="#5a6068"/><rect x="20" y="40" width="13" height="1" fill="#ffffff" opacity="0.8"/><rect x="3" y="47" width="12" height="1" fill="#5a6068"/><rect x="3" y="48" width="12" height="1" fill="#ffffff" opacity="0.8"/><rect x="20" y="47" width="13" height="1" fill="#5a6068"/><rect x="20" y="48" width="13" height="1" fill="#ffffff" opacity="0.8"/><rect x="3" y="54" width="12" height="1" fill="#5a6068"/><rect x="3" y="55" width="12" height="1" fill="#ffffff" opacity="0.8"/><rect x="20" y="54" width="13" height="1" fill="#5a6068"/><rect x="20" y="55" width="13" height="1" fill="#ffffff" opacity="0.8"/><rect x="3" y="62" width="12" height="1" fill="#5a6068"/><rect x="3" y="63" width="12" height="1" fill="#ffffff" opacity="0.8"/><rect x="20" y="62" width="13" height="1" fill="#5a6068"/><rect x="20" y="63" width="13" height="1" fill="#ffffff" opacity="0.8"/><rect x="3" y="69" width="12" height="1" fill="#5a6068"/><rect x="3" y="70" width="12" height="1" fill="#ffffff" opacity="0.8"/><rect x="20" y="69" width="13" height="1" fill="#5a6068"/><rect x="20" y="70" width="13" height="1" fill="#ffffff" opacity="0.8"/><rect x="3" y="77" width="12" height="1" fill="#5a6068"/><rect x="3" y="78" width="12" height="1" fill="#ffffff" opacity="0.8"/><rect x="20" y="77" width="13" height="1" fill="#5a6068"/><rect x="20" y="78" width="13" height="1" fill="#ffffff" opacity="0.8"/><rect x="3" y="84" width="12" height="1" fill="#5a6068"/><rect x="3" y="85" width="12" height="1" fill="#ffffff" opacity="0.8"/><rect x="20" y="84" width="13" height="1" fill="#5a6068"/><rect x="20" y="85" width="13" height="1" fill="#ffffff" opacity="0.8"/><rect x="3" y="92" width="12" height="1" fill="#5a6068"/><rect x="3" y="93" width="12" height="1" fill="#ffffff" opacity="0.8"/><rect x="20" y="92" width="13" height="1" fill="#5a6068"/><rect x="20" y="93" width="13" height="1" fill="#ffffff" opacity="0.8"/><rect x="3" y="99" width="12" height="1" fill="#5a6068"/><rect x="3" y="100" width="12" height="1" fill="#ffffff" opacity="0.8"/><rect x="20" y="99" width="13" height="1" fill="#5a6068"/><rect x="20" y="100" width="13" height="1" fill="#ffffff" opacity="0.8"/><rect x="3" y="107" width="12" height="1" fill="#5a6068"/><rect x="3" y="108" width="12" height="1" fill="#ffffff" opacity="0.8"/><rect x="20" y="107" width="13" height="1" fill="#5a6068"/><rect x="20" y="108" width="13" height="1" fill="#ffffff" opacity="0.8"/><rect x="3" y="114" width="12" height="1" fill="#5a6068"/><rect x="3" y="115" width="12" height="1" fill="#ffffff" opacity="0.8"/><rect x="20" y="114" width="13" height="1" fill="#5a6068"/><rect x="20" y="115" width="13" height="1" fill="#ffffff" opacity="0.8"/><rect x="3" y="122" width="12" height="1" fill="#5a6068"/><rect x="3" y="123" width="12" height="1" fill="#ffffff" opacity="0.8"/><rect x="20" y="122" width="13" height="1" fill="#5a6068"/><rect x="20" y="123" width="13" height="1" fill="#ffffff" opacity="0.8"/><rect x="3" y="129" width="12" height="1" fill="#5a6068"/><rect x="3" y="130" width="12" height="1" fill="#ffffff" opacity="0.8"/><rect x="20" y="129" width="13" height="1" fill="#5a6068"/><rect x="20" y="130" width="13" height="1" fill="#ffffff" opacity="0.8"/><rect x="3" y="137" width="12" height="1" fill="#5a6068"/><rect x="3" y="138" width="12" height="1" fill="#ffffff" opacity="0.8"/><rect x="20" y="137" width="13" height="1" fill="#5a6068"/><rect x="20" y="138" width="13" height="1" fill="#ffffff" opacity="0.8"/><rect x="3" y="144" width="12" height="1" fill="#5a6068"/><rect x="3" y="145" width="12" height="1" fill="#ffffff" opacity="0.8"/><rect x="20" y="144" width="13" height="1" fill="#5a6068"/><rect x="20" y="145" width="13" height="1" fill="#ffffff" opacity="0.8"/><rect x="16" y="1" width="4" height="165" fill="#eceef0"/>
<rect x="15" y="0" width="1.3" height="140" fill="#000"/><rect x="15" y="0" width="4" height="1.5" fill="#000"/></svg>
<svg style="position:absolute;left:198px;top:699px;" width="22" height="36" viewBox="0 0 22 36"><rect x="4" y="4" width="17" height="31" rx="5.5" fill="#3a4250" opacity="0.55" filter="url(#fth)"/>
<rect x="2.5" y="2.5" width="17" height="30" rx="5" fill="url(#gthumb)" stroke="#50545a" stroke-width="1.2"/>
<rect x="4.5" y="16.5" width="13" height="3.5" fill="#a8b4c4" opacity="0.5"/><rect x="5" y="17.3" width="12" height="1.8" fill="#34507c"/></svg>
<svg style="position:absolute;left:201px;top:733px;" width="16" height="16" viewBox="0 0 16 16"><path d="M1 5 L8 13.5 L15 5" fill="none" stroke="#7a7e84" stroke-width="1.5"/>
<path d="M8 10 L14.5 1.5 L1.5 1.5 Z" fill="url(#garr)" stroke="#707478" stroke-width="1.2" stroke-linejoin="round"/></svg>
<div style="left:227px;top:439px;width:34px;height:313px;background:linear-gradient(90deg,#fdfeff 0%,#e8eefa 35%,#c6d8f6 65%,#aec8f2 100%);"></div>
<div style="left:261px;top:439px;width:2px;height:314px;background:#a4b4cc;"></div>
<div style="left:227px;top:752px;width:34px;height:1px;background:#8494a8;"></div>
<span class="t" style="left:45px;width:400px;text-align:center;top:443.84px;font-size:12px;line-height:12px;font-weight:400;color:#000;transform:scaleX(0.9);">6</span>
<div style="left:230px;top:459px;width:29px;height:17px;box-sizing:border-box;border-top:2px solid #7c7c7c;border-left:2px solid #7c7c7c;border-right:1px solid #fafafa;border-bottom:1px solid #fafafa;background:#000;"></div>
<span class="t" style="left:-145.5px;width:400px;text-align:right;top:464.54px;font-size:10px;line-height:10px;font-weight:400;color:#fff;transform-origin:100% 0;">0</span>
<div style="left:230px;top:479px;width:29px;height:53px;box-sizing:border-box;border-top:1px solid #7a7a7a;border-left:2px solid #7a7a7a;border-right:1px solid #fafafa;border-bottom:2px solid #fafafa;background:#000;"></div>
<div style="left:232px;top:480px;width:26px;height:26px;background:#fcd898;"></div>
<div class="t" style="left:233px;top:480px;font-size:12.2px;line-height:13px;color:#000010;transform:scaleX(0.78);-webkit-text-stroke:0.3px #000010;transform-origin:0 0;white-space:pre">rgb.2
Blue</div>
<svg style="position:absolute;left:237px;top:537px;" width="16" height="16" viewBox="0 0 16 16"><path d="M1 10.5 L8 1.5 L15 10.5" fill="none" stroke="#7a7e84" stroke-width="1.5"/>
<path d="M8 5 L14.5 13.5 L1.5 13.5 Z" fill="url(#garr)" stroke="#707478" stroke-width="1.2" stroke-linejoin="round"/></svg>
<svg style="position:absolute;left:227px;top:569px;" width="34" height="166" viewBox="0 0 34 166"><rect x="3" y="2" width="12" height="1" fill="#5a6068"/><rect x="3" y="3" width="12" height="1" fill="#ffffff" opacity="0.8"/><rect x="20" y="2" width="13" height="1" fill="#5a6068"/><rect x="20" y="3" width="13" height="1" fill="#ffffff" opacity="0.8"/><rect x="3" y="9" width="12" height="1" fill="#5a6068"/><rect x="3" y="10" width="12" height="1" fill="#ffffff" opacity="0.8"/><rect x="20" y="9" width="13" height="1" fill="#5a6068"/><rect x="20" y="10" width="13" height="1" fill="#ffffff" opacity="0.8"/><rect x="3" y="17" width="12" height="1" fill="#5a6068"/><rect x="3" y="18" width="12" height="1" fill="#ffffff" opacity="0.8"/><rect x="20" y="17" width="13" height="1" fill="#5a6068"/><rect x="20" y="18" width="13" height="1" fill="#ffffff" opacity="0.8"/><rect x="3" y="24" width="12" height="1" fill="#5a6068"/><rect x="3" y="25" width="12" height="1" fill="#ffffff" opacity="0.8"/><rect x="20" y="24" width="13" height="1" fill="#5a6068"/><rect x="20" y="25" width="13" height="1" fill="#ffffff" opacity="0.8"/><rect x="3" y="32" width="12" height="1" fill="#5a6068"/><rect x="3" y="33" width="12" height="1" fill="#ffffff" opacity="0.8"/><rect x="20" y="32" width="13" height="1" fill="#5a6068"/><rect x="20" y="33" width="13" height="1" fill="#ffffff" opacity="0.8"/><rect x="3" y="39" width="12" height="1" fill="#5a6068"/><rect x="3" y="40" width="12" height="1" fill="#ffffff" opacity="0.8"/><rect x="20" y="39" width="13" height="1" fill="#5a6068"/><rect x="20" y="40" width="13" height="1" fill="#ffffff" opacity="0.8"/><rect x="3" y="47" width="12" height="1" fill="#5a6068"/><rect x="3" y="48" width="12" height="1" fill="#ffffff" opacity="0.8"/><rect x="20" y="47" width="13" height="1" fill="#5a6068"/><rect x="20" y="48" width="13" height="1" fill="#ffffff" opacity="0.8"/><rect x="3" y="54" width="12" height="1" fill="#5a6068"/><rect x="3" y="55" width="12" height="1" fill="#ffffff" opacity="0.8"/><rect x="20" y="54" width="13" height="1" fill="#5a6068"/><rect x="20" y="55" width="13" height="1" fill="#ffffff" opacity="0.8"/><rect x="3" y="62" width="12" height="1" fill="#5a6068"/><rect x="3" y="63" width="12" height="1" fill="#ffffff" opacity="0.8"/><rect x="20" y="62" width="13" height="1" fill="#5a6068"/><rect x="20" y="63" width="13" height="1" fill="#ffffff" opacity="0.8"/><rect x="3" y="69" width="12" height="1" fill="#5a6068"/><rect x="3" y="70" width="12" height="1" fill="#ffffff" opacity="0.8"/><rect x="20" y="69" width="13" height="1" fill="#5a6068"/><rect x="20" y="70" width="13" height="1" fill="#ffffff" opacity="0.8"/><rect x="3" y="77" width="12" height="1" fill="#5a6068"/><rect x="3" y="78" width="12" height="1" fill="#ffffff" opacity="0.8"/><rect x="20" y="77" width="13" height="1" fill="#5a6068"/><rect x="20" y="78" width="13" height="1" fill="#ffffff" opacity="0.8"/><rect x="3" y="84" width="12" height="1" fill="#5a6068"/><rect x="3" y="85" width="12" height="1" fill="#ffffff" opacity="0.8"/><rect x="20" y="84" width="13" height="1" fill="#5a6068"/><rect x="20" y="85" width="13" height="1" fill="#ffffff" opacity="0.8"/><rect x="3" y="92" width="12" height="1" fill="#5a6068"/><rect x="3" y="93" width="12" height="1" fill="#ffffff" opacity="0.8"/><rect x="20" y="92" width="13" height="1" fill="#5a6068"/><rect x="20" y="93" width="13" height="1" fill="#ffffff" opacity="0.8"/><rect x="3" y="99" width="12" height="1" fill="#5a6068"/><rect x="3" y="100" width="12" height="1" fill="#ffffff" opacity="0.8"/><rect x="20" y="99" width="13" height="1" fill="#5a6068"/><rect x="20" y="100" width="13" height="1" fill="#ffffff" opacity="0.8"/><rect x="3" y="107" width="12" height="1" fill="#5a6068"/><rect x="3" y="108" width="12" height="1" fill="#ffffff" opacity="0.8"/><rect x="20" y="107" width="13" height="1" fill="#5a6068"/><rect x="20" y="108" width="13" height="1" fill="#ffffff" opacity="0.8"/><rect x="3" y="114" width="12" height="1" fill="#5a6068"/><rect x="3" y="115" width="12" height="1" fill="#ffffff" opacity="0.8"/><rect x="20" y="114" width="13" height="1" fill="#5a6068"/><rect x="20" y="115" width="13" height="1" fill="#ffffff" opacity="0.8"/><rect x="3" y="122" width="12" height="1" fill="#5a6068"/><rect x="3" y="123" width="12" height="1" fill="#ffffff" opacity="0.8"/><rect x="20" y="122" width="13" height="1" fill="#5a6068"/><rect x="20" y="123" width="13" height="1" fill="#ffffff" opacity="0.8"/><rect x="3" y="129" width="12" height="1" fill="#5a6068"/><rect x="3" y="130" width="12" height="1" fill="#ffffff" opacity="0.8"/><rect x="20" y="129" width="13" height="1" fill="#5a6068"/><rect x="20" y="130" width="13" height="1" fill="#ffffff" opacity="0.8"/><rect x="3" y="137" width="12" height="1" fill="#5a6068"/><rect x="3" y="138" width="12" height="1" fill="#ffffff" opacity="0.8"/><rect x="20" y="137" width="13" height="1" fill="#5a6068"/><rect x="20" y="138" width="13" height="1" fill="#ffffff" opacity="0.8"/><rect x="3" y="144" width="12" height="1" fill="#5a6068"/><rect x="3" y="145" width="12" height="1" fill="#ffffff" opacity="0.8"/><rect x="20" y="144" width="13" height="1" fill="#5a6068"/><rect x="20" y="145" width="13" height="1" fill="#ffffff" opacity="0.8"/><rect x="16" y="1" width="4" height="165" fill="#eceef0"/>
<rect x="15" y="0" width="1.3" height="140" fill="#000"/><rect x="15" y="0" width="4" height="1.5" fill="#000"/></svg>
<svg style="position:absolute;left:234px;top:699px;" width="22" height="36" viewBox="0 0 22 36"><rect x="4" y="4" width="17" height="31" rx="5.5" fill="#3a4250" opacity="0.55" filter="url(#fth)"/>
<rect x="2.5" y="2.5" width="17" height="30" rx="5" fill="url(#gthumb)" stroke="#50545a" stroke-width="1.2"/>
<rect x="4.5" y="16.5" width="13" height="3.5" fill="#a8b4c4" opacity="0.5"/><rect x="5" y="17.3" width="12" height="1.8" fill="#34507c"/></svg>
<svg style="position:absolute;left:237px;top:733px;" width="16" height="16" viewBox="0 0 16 16"><path d="M1 5 L8 13.5 L15 5" fill="none" stroke="#7a7e84" stroke-width="1.5"/>
<path d="M8 10 L14.5 1.5 L1.5 1.5 Z" fill="url(#garr)" stroke="#707478" stroke-width="1.2" stroke-linejoin="round"/></svg>
<div style="left:263px;top:439px;width:34px;height:313px;background:linear-gradient(90deg,#fdfeff 0%,#e8eefa 35%,#c6d8f6 65%,#aec8f2 100%);"></div>
<div style="left:297px;top:439px;width:2px;height:314px;background:#a4b4cc;"></div>
<div style="left:263px;top:752px;width:34px;height:1px;background:#8494a8;"></div>
<span class="t" style="left:81px;width:400px;text-align:center;top:443.84px;font-size:12px;line-height:12px;font-weight:400;color:#000;transform:scaleX(0.9);">7</span>
<div style="left:266px;top:459px;width:29px;height:17px;box-sizing:border-box;border-top:2px solid #7c7c7c;border-left:2px solid #7c7c7c;border-right:1px solid #fafafa;border-bottom:1px solid #fafafa;background:#000;"></div>
<span class="t" style="left:-109.5px;width:400px;text-align:right;top:464.54px;font-size:10px;line-height:10px;font-weight:400;color:#fff;transform-origin:100% 0;">0</span>
<div style="left:266px;top:479px;width:29px;height:53px;box-sizing:border-box;border-top:1px solid #7a7a7a;border-left:2px solid #7a7a7a;border-right:1px solid #fafafa;border-bottom:2px solid #fafafa;background:#000;"></div>
<div style="left:268px;top:480px;width:26px;height:26px;background:#c2d2aa;"></div>
<div class="t" style="left:269px;top:480px;font-size:12.2px;line-height:13px;color:#000010;transform:scaleX(0.78);-webkit-text-stroke:0.3px #000010;transform-origin:0 0;white-space:pre">rgb.3
Red</div>
<svg style="position:absolute;left:273px;top:537px;" width="16" height="16" viewBox="0 0 16 16"><path d="M1 10.5 L8 1.5 L15 10.5" fill="none" stroke="#7a7e84" stroke-width="1.5"/>
<path d="M8 5 L14.5 13.5 L1.5 13.5 Z" fill="url(#garr)" stroke="#707478" stroke-width="1.2" stroke-linejoin="round"/></svg>
<svg style="position:absolute;left:263px;top:569px;" width="34" height="166" viewBox="0 0 34 166"><rect x="3" y="2" width="12" height="1" fill="#5a6068"/><rect x="3" y="3" width="12" height="1" fill="#ffffff" opacity="0.8"/><rect x="20" y="2" width="13" height="1" fill="#5a6068"/><rect x="20" y="3" width="13" height="1" fill="#ffffff" opacity="0.8"/><rect x="3" y="9" width="12" height="1" fill="#5a6068"/><rect x="3" y="10" width="12" height="1" fill="#ffffff" opacity="0.8"/><rect x="20" y="9" width="13" height="1" fill="#5a6068"/><rect x="20" y="10" width="13" height="1" fill="#ffffff" opacity="0.8"/><rect x="3" y="17" width="12" height="1" fill="#5a6068"/><rect x="3" y="18" width="12" height="1" fill="#ffffff" opacity="0.8"/><rect x="20" y="17" width="13" height="1" fill="#5a6068"/><rect x="20" y="18" width="13" height="1" fill="#ffffff" opacity="0.8"/><rect x="3" y="24" width="12" height="1" fill="#5a6068"/><rect x="3" y="25" width="12" height="1" fill="#ffffff" opacity="0.8"/><rect x="20" y="24" width="13" height="1" fill="#5a6068"/><rect x="20" y="25" width="13" height="1" fill="#ffffff" opacity="0.8"/><rect x="3" y="32" width="12" height="1" fill="#5a6068"/><rect x="3" y="33" width="12" height="1" fill="#ffffff" opacity="0.8"/><rect x="20" y="32" width="13" height="1" fill="#5a6068"/><rect x="20" y="33" width="13" height="1" fill="#ffffff" opacity="0.8"/><rect x="3" y="39" width="12" height="1" fill="#5a6068"/><rect x="3" y="40" width="12" height="1" fill="#ffffff" opacity="0.8"/><rect x="20" y="39" width="13" height="1" fill="#5a6068"/><rect x="20" y="40" width="13" height="1" fill="#ffffff" opacity="0.8"/><rect x="3" y="47" width="12" height="1" fill="#5a6068"/><rect x="3" y="48" width="12" height="1" fill="#ffffff" opacity="0.8"/><rect x="20" y="47" width="13" height="1" fill="#5a6068"/><rect x="20" y="48" width="13" height="1" fill="#ffffff" opacity="0.8"/><rect x="3" y="54" width="12" height="1" fill="#5a6068"/><rect x="3" y="55" width="12" height="1" fill="#ffffff" opacity="0.8"/><rect x="20" y="54" width="13" height="1" fill="#5a6068"/><rect x="20" y="55" width="13" height="1" fill="#ffffff" opacity="0.8"/><rect x="3" y="62" width="12" height="1" fill="#5a6068"/><rect x="3" y="63" width="12" height="1" fill="#ffffff" opacity="0.8"/><rect x="20" y="62" width="13" height="1" fill="#5a6068"/><rect x="20" y="63" width="13" height="1" fill="#ffffff" opacity="0.8"/><rect x="3" y="69" width="12" height="1" fill="#5a6068"/><rect x="3" y="70" width="12" height="1" fill="#ffffff" opacity="0.8"/><rect x="20" y="69" width="13" height="1" fill="#5a6068"/><rect x="20" y="70" width="13" height="1" fill="#ffffff" opacity="0.8"/><rect x="3" y="77" width="12" height="1" fill="#5a6068"/><rect x="3" y="78" width="12" height="1" fill="#ffffff" opacity="0.8"/><rect x="20" y="77" width="13" height="1" fill="#5a6068"/><rect x="20" y="78" width="13" height="1" fill="#ffffff" opacity="0.8"/><rect x="3" y="84" width="12" height="1" fill="#5a6068"/><rect x="3" y="85" width="12" height="1" fill="#ffffff" opacity="0.8"/><rect x="20" y="84" width="13" height="1" fill="#5a6068"/><rect x="20" y="85" width="13" height="1" fill="#ffffff" opacity="0.8"/><rect x="3" y="92" width="12" height="1" fill="#5a6068"/><rect x="3" y="93" width="12" height="1" fill="#ffffff" opacity="0.8"/><rect x="20" y="92" width="13" height="1" fill="#5a6068"/><rect x="20" y="93" width="13" height="1" fill="#ffffff" opacity="0.8"/><rect x="3" y="99" width="12" height="1" fill="#5a6068"/><rect x="3" y="100" width="12" height="1" fill="#ffffff" opacity="0.8"/><rect x="20" y="99" width="13" height="1" fill="#5a6068"/><rect x="20" y="100" width="13" height="1" fill="#ffffff" opacity="0.8"/><rect x="3" y="107" width="12" height="1" fill="#5a6068"/><rect x="3" y="108" width="12" height="1" fill="#ffffff" opacity="0.8"/><rect x="20" y="107" width="13" height="1" fill="#5a6068"/><rect x="20" y="108" width="13" height="1" fill="#ffffff" opacity="0.8"/><rect x="3" y="114" width="12" height="1" fill="#5a6068"/><rect x="3" y="115" width="12" height="1" fill="#ffffff" opacity="0.8"/><rect x="20" y="114" width="13" height="1" fill="#5a6068"/><rect x="20" y="115" width="13" height="1" fill="#ffffff" opacity="0.8"/><rect x="3" y="122" width="12" height="1" fill="#5a6068"/><rect x="3" y="123" width="12" height="1" fill="#ffffff" opacity="0.8"/><rect x="20" y="122" width="13" height="1" fill="#5a6068"/><rect x="20" y="123" width="13" height="1" fill="#ffffff" opacity="0.8"/><rect x="3" y="129" width="12" height="1" fill="#5a6068"/><rect x="3" y="130" width="12" height="1" fill="#ffffff" opacity="0.8"/><rect x="20" y="129" width="13" height="1" fill="#5a6068"/><rect x="20" y="130" width="13" height="1" fill="#ffffff" opacity="0.8"/><rect x="3" y="137" width="12" height="1" fill="#5a6068"/><rect x="3" y="138" width="12" height="1" fill="#ffffff" opacity="0.8"/><rect x="20" y="137" width="13" height="1" fill="#5a6068"/><rect x="20" y="138" width="13" height="1" fill="#ffffff" opacity="0.8"/><rect x="3" y="144" width="12" height="1" fill="#5a6068"/><rect x="3" y="145" width="12" height="1" fill="#ffffff" opacity="0.8"/><rect x="20" y="144" width="13" height="1" fill="#5a6068"/><rect x="20" y="145" width="13" height="1" fill="#ffffff" opacity="0.8"/><rect x="16" y="1" width="4" height="165" fill="#eceef0"/>
<rect x="15" y="0" width="1.3" height="140" fill="#000"/><rect x="15" y="0" width="4" height="1.5" fill="#000"/></svg>
<svg style="position:absolute;left:270px;top:699px;" width="22" height="36" viewBox="0 0 22 36"><rect x="4" y="4" width="17" height="31" rx="5.5" fill="#3a4250" opacity="0.55" filter="url(#fth)"/>
<rect x="2.5" y="2.5" width="17" height="30" rx="5" fill="url(#gthumb)" stroke="#50545a" stroke-width="1.2"/>
<rect x="4.5" y="16.5" width="13" height="3.5" fill="#a8b4c4" opacity="0.5"/><rect x="5" y="17.3" width="12" height="1.8" fill="#34507c"/></svg>
<svg style="position:absolute;left:273px;top:733px;" width="16" height="16" viewBox="0 0 16 16"><path d="M1 5 L8 13.5 L15 5" fill="none" stroke="#7a7e84" stroke-width="1.5"/>
<path d="M8 10 L14.5 1.5 L1.5 1.5 Z" fill="url(#garr)" stroke="#707478" stroke-width="1.2" stroke-linejoin="round"/></svg>
<div style="left:299px;top:439px;width:34px;height:313px;background:linear-gradient(90deg,#fdfeff 0%,#e8eefa 35%,#c6d8f6 65%,#aec8f2 100%);"></div>
<div style="left:333px;top:439px;width:2px;height:314px;background:#a4b4cc;"></div>
<div style="left:299px;top:752px;width:34px;height:1px;background:#8494a8;"></div>
<span class="t" style="left:117px;width:400px;text-align:center;top:443.84px;font-size:12px;line-height:12px;font-weight:400;color:#000;transform:scaleX(0.9);">8</span>
<div style="left:302px;top:459px;width:29px;height:17px;box-sizing:border-box;border-top:2px solid #7c7c7c;border-left:2px solid #7c7c7c;border-right:1px solid #fafafa;border-bottom:1px solid #fafafa;background:#000;"></div>
<span class="t" style="left:-73.5px;width:400px;text-align:right;top:464.54px;font-size:10px;line-height:10px;font-weight:400;color:#fff;transform-origin:100% 0;">0</span>
<div style="left:302px;top:479px;width:29px;height:53px;box-sizing:border-box;border-top:1px solid #7a7a7a;border-left:2px solid #7a7a7a;border-right:1px solid #fafafa;border-bottom:2px solid #fafafa;background:#000;"></div>
<div style="left:304px;top:480px;width:26px;height:26px;background:#c2d2aa;"></div>
<div class="t" style="left:305px;top:480px;font-size:12.2px;line-height:13px;color:#000010;transform:scaleX(0.78);-webkit-text-stroke:0.3px #000010;transform-origin:0 0;white-space:pre">rgb.3
Gre...</div>
<svg style="position:absolute;left:309px;top:537px;" width="16" height="16" viewBox="0 0 16 16"><path d="M1 10.5 L8 1.5 L15 10.5" fill="none" stroke="#7a7e84" stroke-width="1.5"/>
<path d="M8 5 L14.5 13.5 L1.5 13.5 Z" fill="url(#garr)" stroke="#707478" stroke-width="1.2" stroke-linejoin="round"/></svg>
<svg style="position:absolute;left:299px;top:569px;" width="34" height="166" viewBox="0 0 34 166"><rect x="3" y="2" width="12" height="1" fill="#5a6068"/><rect x="3" y="3" width="12" height="1" fill="#ffffff" opacity="0.8"/><rect x="20" y="2" width="13" height="1" fill="#5a6068"/><rect x="20" y="3" width="13" height="1" fill="#ffffff" opacity="0.8"/><rect x="3" y="9" width="12" height="1" fill="#5a6068"/><rect x="3" y="10" width="12" height="1" fill="#ffffff" opacity="0.8"/><rect x="20" y="9" width="13" height="1" fill="#5a6068"/><rect x="20" y="10" width="13" height="1" fill="#ffffff" opacity="0.8"/><rect x="3" y="17" width="12" height="1" fill="#5a6068"/><rect x="3" y="18" width="12" height="1" fill="#ffffff" opacity="0.8"/><rect x="20" y="17" width="13" height="1" fill="#5a6068"/><rect x="20" y="18" width="13" height="1" fill="#ffffff" opacity="0.8"/><rect x="3" y="24" width="12" height="1" fill="#5a6068"/><rect x="3" y="25" width="12" height="1" fill="#ffffff" opacity="0.8"/><rect x="20" y="24" width="13" height="1" fill="#5a6068"/><rect x="20" y="25" width="13" height="1" fill="#ffffff" opacity="0.8"/><rect x="3" y="32" width="12" height="1" fill="#5a6068"/><rect x="3" y="33" width="12" height="1" fill="#ffffff" opacity="0.8"/><rect x="20" y="32" width="13" height="1" fill="#5a6068"/><rect x="20" y="33" width="13" height="1" fill="#ffffff" opacity="0.8"/><rect x="3" y="39" width="12" height="1" fill="#5a6068"/><rect x="3" y="40" width="12" height="1" fill="#ffffff" opacity="0.8"/><rect x="20" y="39" width="13" height="1" fill="#5a6068"/><rect x="20" y="40" width="13" height="1" fill="#ffffff" opacity="0.8"/><rect x="3" y="47" width="12" height="1" fill="#5a6068"/><rect x="3" y="48" width="12" height="1" fill="#ffffff" opacity="0.8"/><rect x="20" y="47" width="13" height="1" fill="#5a6068"/><rect x="20" y="48" width="13" height="1" fill="#ffffff" opacity="0.8"/><rect x="3" y="54" width="12" height="1" fill="#5a6068"/><rect x="3" y="55" width="12" height="1" fill="#ffffff" opacity="0.8"/><rect x="20" y="54" width="13" height="1" fill="#5a6068"/><rect x="20" y="55" width="13" height="1" fill="#ffffff" opacity="0.8"/><rect x="3" y="62" width="12" height="1" fill="#5a6068"/><rect x="3" y="63" width="12" height="1" fill="#ffffff" opacity="0.8"/><rect x="20" y="62" width="13" height="1" fill="#5a6068"/><rect x="20" y="63" width="13" height="1" fill="#ffffff" opacity="0.8"/><rect x="3" y="69" width="12" height="1" fill="#5a6068"/><rect x="3" y="70" width="12" height="1" fill="#ffffff" opacity="0.8"/><rect x="20" y="69" width="13" height="1" fill="#5a6068"/><rect x="20" y="70" width="13" height="1" fill="#ffffff" opacity="0.8"/><rect x="3" y="77" width="12" height="1" fill="#5a6068"/><rect x="3" y="78" width="12" height="1" fill="#ffffff" opacity="0.8"/><rect x="20" y="77" width="13" height="1" fill="#5a6068"/><rect x="20" y="78" width="13" height="1" fill="#ffffff" opacity="0.8"/><rect x="3" y="84" width="12" height="1" fill="#5a6068"/><rect x="3" y="85" width="12" height="1" fill="#ffffff" opacity="0.8"/><rect x="20" y="84" width="13" height="1" fill="#5a6068"/><rect x="20" y="85" width="13" height="1" fill="#ffffff" opacity="0.8"/><rect x="3" y="92" width="12" height="1" fill="#5a6068"/><rect x="3" y="93" width="12" height="1" fill="#ffffff" opacity="0.8"/><rect x="20" y="92" width="13" height="1" fill="#5a6068"/><rect x="20" y="93" width="13" height="1" fill="#ffffff" opacity="0.8"/><rect x="3" y="99" width="12" height="1" fill="#5a6068"/><rect x="3" y="100" width="12" height="1" fill="#ffffff" opacity="0.8"/><rect x="20" y="99" width="13" height="1" fill="#5a6068"/><rect x="20" y="100" width="13" height="1" fill="#ffffff" opacity="0.8"/><rect x="3" y="107" width="12" height="1" fill="#5a6068"/><rect x="3" y="108" width="12" height="1" fill="#ffffff" opacity="0.8"/><rect x="20" y="107" width="13" height="1" fill="#5a6068"/><rect x="20" y="108" width="13" height="1" fill="#ffffff" opacity="0.8"/><rect x="3" y="114" width="12" height="1" fill="#5a6068"/><rect x="3" y="115" width="12" height="1" fill="#ffffff" opacity="0.8"/><rect x="20" y="114" width="13" height="1" fill="#5a6068"/><rect x="20" y="115" width="13" height="1" fill="#ffffff" opacity="0.8"/><rect x="3" y="122" width="12" height="1" fill="#5a6068"/><rect x="3" y="123" width="12" height="1" fill="#ffffff" opacity="0.8"/><rect x="20" y="122" width="13" height="1" fill="#5a6068"/><rect x="20" y="123" width="13" height="1" fill="#ffffff" opacity="0.8"/><rect x="3" y="129" width="12" height="1" fill="#5a6068"/><rect x="3" y="130" width="12" height="1" fill="#ffffff" opacity="0.8"/><rect x="20" y="129" width="13" height="1" fill="#5a6068"/><rect x="20" y="130" width="13" height="1" fill="#ffffff" opacity="0.8"/><rect x="3" y="137" width="12" height="1" fill="#5a6068"/><rect x="3" y="138" width="12" height="1" fill="#ffffff" opacity="0.8"/><rect x="20" y="137" width="13" height="1" fill="#5a6068"/><rect x="20" y="138" width="13" height="1" fill="#ffffff" opacity="0.8"/><rect x="3" y="144" width="12" height="1" fill="#5a6068"/><rect x="3" y="145" width="12" height="1" fill="#ffffff" opacity="0.8"/><rect x="20" y="144" width="13" height="1" fill="#5a6068"/><rect x="20" y="145" width="13" height="1" fill="#ffffff" opacity="0.8"/><rect x="16" y="1" width="4" height="165" fill="#eceef0"/>
<rect x="15" y="0" width="1.3" height="140" fill="#000"/><rect x="15" y="0" width="4" height="1.5" fill="#000"/></svg>
<svg style="position:absolute;left:306px;top:699px;" width="22" height="36" viewBox="0 0 22 36"><rect x="4" y="4" width="17" height="31" rx="5.5" fill="#3a4250" opacity="0.55" filter="url(#fth)"/>
<rect x="2.5" y="2.5" width="17" height="30" rx="5" fill="url(#gthumb)" stroke="#50545a" stroke-width="1.2"/>
<rect x="4.5" y="16.5" width="13" height="3.5" fill="#a8b4c4" opacity="0.5"/><rect x="5" y="17.3" width="12" height="1.8" fill="#34507c"/></svg>
<svg style="position:absolute;left:309px;top:733px;" width="16" height="16" viewBox="0 0 16 16"><path d="M1 5 L8 13.5 L15 5" fill="none" stroke="#7a7e84" stroke-width="1.5"/>
<path d="M8 10 L14.5 1.5 L1.5 1.5 Z" fill="url(#garr)" stroke="#707478" stroke-width="1.2" stroke-linejoin="round"/></svg>
<div style="left:335px;top:439px;width:34px;height:313px;background:linear-gradient(90deg,#fdfeff 0%,#e8eefa 35%,#c6d8f6 65%,#aec8f2 100%);"></div>
<div style="left:369px;top:439px;width:2px;height:314px;background:#a4b4cc;"></div>
<div style="left:335px;top:752px;width:34px;height:1px;background:#8494a8;"></div>
<span class="t" style="left:153px;width:400px;text-align:center;top:443.84px;font-size:12px;line-height:12px;font-weight:400;color:#000;transform:scaleX(0.9);">9</span>
<div style="left:338px;top:459px;width:29px;height:17px;box-sizing:border-box;border-top:2px solid #7c7c7c;border-left:2px solid #7c7c7c;border-right:1px solid #fafafa;border-bottom:1px solid #fafafa;background:#000;"></div>
<span class="t" style="left:-37.5px;width:400px;text-align:right;top:464.54px;font-size:10px;line-height:10px;font-weight:400;color:#fff;transform-origin:100% 0;">0</span>
<div style="left:338px;top:479px;width:29px;height:53px;box-sizing:border-box;border-top:1px solid #7a7a7a;border-left:2px solid #7a7a7a;border-right:1px solid #fafafa;border-bottom:2px solid #fafafa;background:#000;"></div>
<div style="left:340px;top:480px;width:26px;height:26px;background:#c2d2aa;"></div>
<div class="t" style="left:341px;top:480px;font-size:12.2px;line-height:13px;color:#000010;transform:scaleX(0.78);-webkit-text-stroke:0.3px #000010;transform-origin:0 0;white-space:pre">rgb.3
Blue</div>
<svg style="position:absolute;left:345px;top:537px;" width="16" height="16" viewBox="0 0 16 16"><path d="M1 10.5 L8 1.5 L15 10.5" fill="none" stroke="#7a7e84" stroke-width="1.5"/>
<path d="M8 5 L14.5 13.5 L1.5 13.5 Z" fill="url(#garr)" stroke="#707478" stroke-width="1.2" stroke-linejoin="round"/></svg>
<svg style="position:absolute;left:335px;top:569px;" width="34" height="166" viewBox="0 0 34 166"><rect x="3" y="2" width="12" height="1" fill="#5a6068"/><rect x="3" y="3" width="12" height="1" fill="#ffffff" opacity="0.8"/><rect x="20" y="2" width="13" height="1" fill="#5a6068"/><rect x="20" y="3" width="13" height="1" fill="#ffffff" opacity="0.8"/><rect x="3" y="9" width="12" height="1" fill="#5a6068"/><rect x="3" y="10" width="12" height="1" fill="#ffffff" opacity="0.8"/><rect x="20" y="9" width="13" height="1" fill="#5a6068"/><rect x="20" y="10" width="13" height="1" fill="#ffffff" opacity="0.8"/><rect x="3" y="17" width="12" height="1" fill="#5a6068"/><rect x="3" y="18" width="12" height="1" fill="#ffffff" opacity="0.8"/><rect x="20" y="17" width="13" height="1" fill="#5a6068"/><rect x="20" y="18" width="13" height="1" fill="#ffffff" opacity="0.8"/><rect x="3" y="24" width="12" height="1" fill="#5a6068"/><rect x="3" y="25" width="12" height="1" fill="#ffffff" opacity="0.8"/><rect x="20" y="24" width="13" height="1" fill="#5a6068"/><rect x="20" y="25" width="13" height="1" fill="#ffffff" opacity="0.8"/><rect x="3" y="32" width="12" height="1" fill="#5a6068"/><rect x="3" y="33" width="12" height="1" fill="#ffffff" opacity="0.8"/><rect x="20" y="32" width="13" height="1" fill="#5a6068"/><rect x="20" y="33" width="13" height="1" fill="#ffffff" opacity="0.8"/><rect x="3" y="39" width="12" height="1" fill="#5a6068"/><rect x="3" y="40" width="12" height="1" fill="#ffffff" opacity="0.8"/><rect x="20" y="39" width="13" height="1" fill="#5a6068"/><rect x="20" y="40" width="13" height="1" fill="#ffffff" opacity="0.8"/><rect x="3" y="47" width="12" height="1" fill="#5a6068"/><rect x="3" y="48" width="12" height="1" fill="#ffffff" opacity="0.8"/><rect x="20" y="47" width="13" height="1" fill="#5a6068"/><rect x="20" y="48" width="13" height="1" fill="#ffffff" opacity="0.8"/><rect x="3" y="54" width="12" height="1" fill="#5a6068"/><rect x="3" y="55" width="12" height="1" fill="#ffffff" opacity="0.8"/><rect x="20" y="54" width="13" height="1" fill="#5a6068"/><rect x="20" y="55" width="13" height="1" fill="#ffffff" opacity="0.8"/><rect x="3" y="62" width="12" height="1" fill="#5a6068"/><rect x="3" y="63" width="12" height="1" fill="#ffffff" opacity="0.8"/><rect x="20" y="62" width="13" height="1" fill="#5a6068"/><rect x="20" y="63" width="13" height="1" fill="#ffffff" opacity="0.8"/><rect x="3" y="69" width="12" height="1" fill="#5a6068"/><rect x="3" y="70" width="12" height="1" fill="#ffffff" opacity="0.8"/><rect x="20" y="69" width="13" height="1" fill="#5a6068"/><rect x="20" y="70" width="13" height="1" fill="#ffffff" opacity="0.8"/><rect x="3" y="77" width="12" height="1" fill="#5a6068"/><rect x="3" y="78" width="12" height="1" fill="#ffffff" opacity="0.8"/><rect x="20" y="77" width="13" height="1" fill="#5a6068"/><rect x="20" y="78" width="13" height="1" fill="#ffffff" opacity="0.8"/><rect x="3" y="84" width="12" height="1" fill="#5a6068"/><rect x="3" y="85" width="12" height="1" fill="#ffffff" opacity="0.8"/><rect x="20" y="84" width="13" height="1" fill="#5a6068"/><rect x="20" y="85" width="13" height="1" fill="#ffffff" opacity="0.8"/><rect x="3" y="92" width="12" height="1" fill="#5a6068"/><rect x="3" y="93" width="12" height="1" fill="#ffffff" opacity="0.8"/><rect x="20" y="92" width="13" height="1" fill="#5a6068"/><rect x="20" y="93" width="13" height="1" fill="#ffffff" opacity="0.8"/><rect x="3" y="99" width="12" height="1" fill="#5a6068"/><rect x="3" y="100" width="12" height="1" fill="#ffffff" opacity="0.8"/><rect x="20" y="99" width="13" height="1" fill="#5a6068"/><rect x="20" y="100" width="13" height="1" fill="#ffffff" opacity="0.8"/><rect x="3" y="107" width="12" height="1" fill="#5a6068"/><rect x="3" y="108" width="12" height="1" fill="#ffffff" opacity="0.8"/><rect x="20" y="107" width="13" height="1" fill="#5a6068"/><rect x="20" y="108" width="13" height="1" fill="#ffffff" opacity="0.8"/><rect x="3" y="114" width="12" height="1" fill="#5a6068"/><rect x="3" y="115" width="12" height="1" fill="#ffffff" opacity="0.8"/><rect x="20" y="114" width="13" height="1" fill="#5a6068"/><rect x="20" y="115" width="13" height="1" fill="#ffffff" opacity="0.8"/><rect x="3" y="122" width="12" height="1" fill="#5a6068"/><rect x="3" y="123" width="12" height="1" fill="#ffffff" opacity="0.8"/><rect x="20" y="122" width="13" height="1" fill="#5a6068"/><rect x="20" y="123" width="13" height="1" fill="#ffffff" opacity="0.8"/><rect x="3" y="129" width="12" height="1" fill="#5a6068"/><rect x="3" y="130" width="12" height="1" fill="#ffffff" opacity="0.8"/><rect x="20" y="129" width="13" height="1" fill="#5a6068"/><rect x="20" y="130" width="13" height="1" fill="#ffffff" opacity="0.8"/><rect x="3" y="137" width="12" height="1" fill="#5a6068"/><rect x="3" y="138" width="12" height="1" fill="#ffffff" opacity="0.8"/><rect x="20" y="137" width="13" height="1" fill="#5a6068"/><rect x="20" y="138" width="13" height="1" fill="#ffffff" opacity="0.8"/><rect x="3" y="144" width="12" height="1" fill="#5a6068"/><rect x="3" y="145" width="12" height="1" fill="#ffffff" opacity="0.8"/><rect x="20" y="144" width="13" height="1" fill="#5a6068"/><rect x="20" y="145" width="13" height="1" fill="#ffffff" opacity="0.8"/><rect x="16" y="1" width="4" height="165" fill="#eceef0"/>
<rect x="15" y="0" width="1.3" height="140" fill="#000"/><rect x="15" y="0" width="4" height="1.5" fill="#000"/></svg>
<svg style="position:absolute;left:342px;top:699px;" width="22" height="36" viewBox="0 0 22 36"><rect x="4" y="4" width="17" height="31" rx="5.5" fill="#3a4250" opacity="0.55" filter="url(#fth)"/>
<rect x="2.5" y="2.5" width="17" height="30" rx="5" fill="url(#gthumb)" stroke="#50545a" stroke-width="1.2"/>
<rect x="4.5" y="16.5" width="13" height="3.5" fill="#a8b4c4" opacity="0.5"/><rect x="5" y="17.3" width="12" height="1.8" fill="#34507c"/></svg>
<svg style="position:absolute;left:345px;top:733px;" width="16" height="16" viewBox="0 0 16 16"><path d="M1 5 L8 13.5 L15 5" fill="none" stroke="#7a7e84" stroke-width="1.5"/>
<path d="M8 10 L14.5 1.5 L1.5 1.5 Z" fill="url(#garr)" stroke="#707478" stroke-width="1.2" stroke-linejoin="round"/></svg>
<div style="left:371px;top:439px;width:34px;height:313px;background:linear-gradient(90deg,#fdfeff 0%,#e8eefa 35%,#c6d8f6 65%,#aec8f2 100%);"></div>
<div style="left:405px;top:439px;width:2px;height:314px;background:#a4b4cc;"></div>
<div style="left:371px;top:752px;width:34px;height:1px;background:#8494a8;"></div>
<span class="t" style="left:189px;width:400px;text-align:center;top:443.84px;font-size:12px;line-height:12px;font-weight:400;color:#000;transform:scaleX(0.9);">10</span>
<div style="left:374px;top:459px;width:29px;height:17px;box-sizing:border-box;border-top:2px solid #7c7c7c;border-left:2px solid #7c7c7c;border-right:1px solid #fafafa;border-bottom:1px solid #fafafa;background:#000;"></div>
<span class="t" style="left:-1.5px;width:400px;text-align:right;top:464.54px;font-size:10px;line-height:10px;font-weight:400;color:#fff;transform-origin:100% 0;">0</span>
<div style="left:374px;top:479px;width:29px;height:53px;box-sizing:border-box;border-top:1px solid #7a7a7a;border-left:2px solid #7a7a7a;border-right:1px solid #fafafa;border-bottom:2px solid #fafafa;background:#000;"></div>
<div style="left:376px;top:480px;width:26px;height:26px;background:#f2a8a8;"></div>
<div class="t" style="left:377px;top:480px;font-size:12.2px;line-height:13px;color:#000010;transform:scaleX(0.78);-webkit-text-stroke:0.3px #000010;transform-origin:0 0;white-space:pre">rgb.4
Red</div>
<svg style="position:absolute;left:381px;top:537px;" width="16" height="16" viewBox="0 0 16 16"><path d="M1 10.5 L8 1.5 L15 10.5" fill="none" stroke="#7a7e84" stroke-width="1.5"/>
<path d="M8 5 L14.5 13.5 L1.5 13.5 Z" fill="url(#garr)" stroke="#707478" stroke-width="1.2" stroke-linejoin="round"/></svg>
<svg style="position:absolute;left:371px;top:569px;" width="34" height="166" viewBox="0 0 34 166"><rect x="3" y="2" width="12" height="1" fill="#5a6068"/><rect x="3" y="3" width="12" height="1" fill="#ffffff" opacity="0.8"/><rect x="20" y="2" width="13" height="1" fill="#5a6068"/><rect x="20" y="3" width="13" height="1" fill="#ffffff" opacity="0.8"/><rect x="3" y="9" width="12" height="1" fill="#5a6068"/><rect x="3" y="10" width="12" height="1" fill="#ffffff" opacity="0.8"/><rect x="20" y="9" width="13" height="1" fill="#5a6068"/><rect x="20" y="10" width="13" height="1" fill="#ffffff" opacity="0.8"/><rect x="3" y="17" width="12" height="1" fill="#5a6068"/><rect x="3" y="18" width="12" height="1" fill="#ffffff" opacity="0.8"/><rect x="20" y="17" width="13" height="1" fill="#5a6068"/><rect x="20" y="18" width="13" height="1" fill="#ffffff" opacity="0.8"/><rect x="3" y="24" width="12" height="1" fill="#5a6068"/><rect x="3" y="25" width="12" height="1" fill="#ffffff" opacity="0.8"/><rect x="20" y="24" width="13" height="1" fill="#5a6068"/><rect x="20" y="25" width="13" height="1" fill="#ffffff" opacity="0.8"/><rect x="3" y="32" width="12" height="1" fill="#5a6068"/><rect x="3" y="33" width="12" height="1" fill="#ffffff" opacity="0.8"/><rect x="20" y="32" width="13" height="1" fill="#5a6068"/><rect x="20" y="33" width="13" height="1" fill="#ffffff" opacity="0.8"/><rect x="3" y="39" width="12" height="1" fill="#5a6068"/><rect x="3" y="40" width="12" height="1" fill="#ffffff" opacity="0.8"/><rect x="20" y="39" width="13" height="1" fill="#5a6068"/><rect x="20" y="40" width="13" height="1" fill="#ffffff" opacity="0.8"/><rect x="3" y="47" width="12" height="1" fill="#5a6068"/><rect x="3" y="48" width="12" height="1" fill="#ffffff" opacity="0.8"/><rect x="20" y="47" width="13" height="1" fill="#5a6068"/><rect x="20" y="48" width="13" height="1" fill="#ffffff" opacity="0.8"/><rect x="3" y="54" width="12" height="1" fill="#5a6068"/><rect x="3" y="55" width="12" height="1" fill="#ffffff" opacity="0.8"/><rect x="20" y="54" width="13" height="1" fill="#5a6068"/><rect x="20" y="55" width="13" height="1" fill="#ffffff" opacity="0.8"/><rect x="3" y="62" width="12" height="1" fill="#5a6068"/><rect x="3" y="63" width="12" height="1" fill="#ffffff" opacity="0.8"/><rect x="20" y="62" width="13" height="1" fill="#5a6068"/><rect x="20" y="63" width="13" height="1" fill="#ffffff" opacity="0.8"/><rect x="3" y="69" width="12" height="1" fill="#5a6068"/><rect x="3" y="70" width="12" height="1" fill="#ffffff" opacity="0.8"/><rect x="20" y="69" width="13" height="1" fill="#5a6068"/><rect x="20" y="70" width="13" height="1" fill="#ffffff" opacity="0.8"/><rect x="3" y="77" width="12" height="1" fill="#5a6068"/><rect x="3" y="78" width="12" height="1" fill="#ffffff" opacity="0.8"/><rect x="20" y="77" width="13" height="1" fill="#5a6068"/><rect x="20" y="78" width="13" height="1" fill="#ffffff" opacity="0.8"/><rect x="3" y="84" width="12" height="1" fill="#5a6068"/><rect x="3" y="85" width="12" height="1" fill="#ffffff" opacity="0.8"/><rect x="20" y="84" width="13" height="1" fill="#5a6068"/><rect x="20" y="85" width="13" height="1" fill="#ffffff" opacity="0.8"/><rect x="3" y="92" width="12" height="1" fill="#5a6068"/><rect x="3" y="93" width="12" height="1" fill="#ffffff" opacity="0.8"/><rect x="20" y="92" width="13" height="1" fill="#5a6068"/><rect x="20" y="93" width="13" height="1" fill="#ffffff" opacity="0.8"/><rect x="3" y="99" width="12" height="1" fill="#5a6068"/><rect x="3" y="100" width="12" height="1" fill="#ffffff" opacity="0.8"/><rect x="20" y="99" width="13" height="1" fill="#5a6068"/><rect x="20" y="100" width="13" height="1" fill="#ffffff" opacity="0.8"/><rect x="3" y="107" width="12" height="1" fill="#5a6068"/><rect x="3" y="108" width="12" height="1" fill="#ffffff" opacity="0.8"/><rect x="20" y="107" width="13" height="1" fill="#5a6068"/><rect x="20" y="108" width="13" height="1" fill="#ffffff" opacity="0.8"/><rect x="3" y="114" width="12" height="1" fill="#5a6068"/><rect x="3" y="115" width="12" height="1" fill="#ffffff" opacity="0.8"/><rect x="20" y="114" width="13" height="1" fill="#5a6068"/><rect x="20" y="115" width="13" height="1" fill="#ffffff" opacity="0.8"/><rect x="3" y="122" width="12" height="1" fill="#5a6068"/><rect x="3" y="123" width="12" height="1" fill="#ffffff" opacity="0.8"/><rect x="20" y="122" width="13" height="1" fill="#5a6068"/><rect x="20" y="123" width="13" height="1" fill="#ffffff" opacity="0.8"/><rect x="3" y="129" width="12" height="1" fill="#5a6068"/><rect x="3" y="130" width="12" height="1" fill="#ffffff" opacity="0.8"/><rect x="20" y="129" width="13" height="1" fill="#5a6068"/><rect x="20" y="130" width="13" height="1" fill="#ffffff" opacity="0.8"/><rect x="3" y="137" width="12" height="1" fill="#5a6068"/><rect x="3" y="138" width="12" height="1" fill="#ffffff" opacity="0.8"/><rect x="20" y="137" width="13" height="1" fill="#5a6068"/><rect x="20" y="138" width="13" height="1" fill="#ffffff" opacity="0.8"/><rect x="3" y="144" width="12" height="1" fill="#5a6068"/><rect x="3" y="145" width="12" height="1" fill="#ffffff" opacity="0.8"/><rect x="20" y="144" width="13" height="1" fill="#5a6068"/><rect x="20" y="145" width="13" height="1" fill="#ffffff" opacity="0.8"/><rect x="16" y="1" width="4" height="165" fill="#eceef0"/>
<rect x="15" y="0" width="1.3" height="140" fill="#000"/><rect x="15" y="0" width="4" height="1.5" fill="#000"/></svg>
<svg style="position:absolute;left:378px;top:699px;" width="22" height="36" viewBox="0 0 22 36"><rect x="4" y="4" width="17" height="31" rx="5.5" fill="#3a4250" opacity="0.55" filter="url(#fth)"/>
<rect x="2.5" y="2.5" width="17" height="30" rx="5" fill="url(#gthumb)" stroke="#50545a" stroke-width="1.2"/>
<rect x="4.5" y="16.5" width="13" height="3.5" fill="#a8b4c4" opacity="0.5"/><rect x="5" y="17.3" width="12" height="1.8" fill="#34507c"/></svg>
<svg style="position:absolute;left:381px;top:733px;" width="16" height="16" viewBox="0 0 16 16"><path d="M1 5 L8 13.5 L15 5" fill="none" stroke="#7a7e84" stroke-width="1.5"/>
<path d="M8 10 L14.5 1.5 L1.5 1.5 Z" fill="url(#garr)" stroke="#707478" stroke-width="1.2" stroke-linejoin="round"/></svg>
<div style="left:407px;top:439px;width:34px;height:313px;background:linear-gradient(90deg,#fdfeff 0%,#e8eefa 35%,#c6d8f6 65%,#aec8f2 100%);"></div>
<div style="left:441px;top:439px;width:2px;height:314px;background:#a4b4cc;"></div>
<div style="left:407px;top:752px;width:34px;height:1px;background:#8494a8;"></div>
<span class="t" style="left:225px;width:400px;text-align:center;top:443.84px;font-size:12px;line-height:12px;font-weight:400;color:#000;transform:scaleX(0.9);">11</span>
<div style="left:410px;top:459px;width:29px;height:17px;box-sizing:border-box;border-top:2px solid #7c7c7c;border-left:2px solid #7c7c7c;border-right:1px solid #fafafa;border-bottom:1px solid #fafafa;background:#000;"></div>
<span class="t" style="left:34.5px;width:400px;text-align:right;top:464.54px;font-size:10px;line-height:10px;font-weight:400;color:#fff;transform-origin:100% 0;">0</span>
<div style="left:410px;top:479px;width:29px;height:53px;box-sizing:border-box;border-top:1px solid #7a7a7a;border-left:2px solid #7a7a7a;border-right:1px solid #fafafa;border-bottom:2px solid #fafafa;background:#000;"></div>
<div style="left:412px;top:480px;width:26px;height:26px;background:#f2a8a8;"></div>
<div class="t" style="left:413px;top:480px;font-size:12.2px;line-height:13px;color:#000010;transform:scaleX(0.78);-webkit-text-stroke:0.3px #000010;transform-origin:0 0;white-space:pre">rgb.4
Gre...</div>
<svg style="position:absolute;left:417px;top:537px;" width="16" height="16" viewBox="0 0 16 16"><path d="M1 10.5 L8 1.5 L15 10.5" fill="none" stroke="#7a7e84" stroke-width="1.5"/>
<path d="M8 5 L14.5 13.5 L1.5 13.5 Z" fill="url(#garr)" stroke="#707478" stroke-width="1.2" stroke-linejoin="round"/></svg>
<svg style="position:absolute;left:407px;top:569px;" width="34" height="166" viewBox="0 0 34 166"><rect x="3" y="2" width="12" height="1" fill="#5a6068"/><rect x="3" y="3" width="12" height="1" fill="#ffffff" opacity="0.8"/><rect x="20" y="2" width="13" height="1" fill="#5a6068"/><rect x="20" y="3" width="13" height="1" fill="#ffffff" opacity="0.8"/><rect x="3" y="9" width="12" height="1" fill="#5a6068"/><rect x="3" y="10" width="12" height="1" fill="#ffffff" opacity="0.8"/><rect x="20" y="9" width="13" height="1" fill="#5a6068"/><rect x="20" y="10" width="13" height="1" fill="#ffffff" opacity="0.8"/><rect x="3" y="17" width="12" height="1" fill="#5a6068"/><rect x="3" y="18" width="12" height="1" fill="#ffffff" opacity="0.8"/><rect x="20" y="17" width="13" height="1" fill="#5a6068"/><rect x="20" y="18" width="13" height="1" fill="#ffffff" opacity="0.8"/><rect x="3" y="24" width="12" height="1" fill="#5a6068"/><rect x="3" y="25" width="12" height="1" fill="#ffffff" opacity="0.8"/><rect x="20" y="24" width="13" height="1" fill="#5a6068"/><rect x="20" y="25" width="13" height="1" fill="#ffffff" opacity="0.8"/><rect x="3" y="32" width="12" height="1" fill="#5a6068"/><rect x="3" y="33" width="12" height="1" fill="#ffffff" opacity="0.8"/><rect x="20" y="32" width="13" height="1" fill="#5a6068"/><rect x="20" y="33" width="13" height="1" fill="#ffffff" opacity="0.8"/><rect x="3" y="39" width="12" height="1" fill="#5a6068"/><rect x="3" y="40" width="12" height="1" fill="#ffffff" opacity="0.8"/><rect x="20" y="39" width="13" height="1" fill="#5a6068"/><rect x="20" y="40" width="13" height="1" fill="#ffffff" opacity="0.8"/><rect x="3" y="47" width="12" height="1" fill="#5a6068"/><rect x="3" y="48" width="12" height="1" fill="#ffffff" opacity="0.8"/><rect x="20" y="47" width="13" height="1" fill="#5a6068"/><rect x="20" y="48" width="13" height="1" fill="#ffffff" opacity="0.8"/><rect x="3" y="54" width="12" height="1" fill="#5a6068"/><rect x="3" y="55" width="12" height="1" fill="#ffffff" opacity="0.8"/><rect x="20" y="54" width="13" height="1" fill="#5a6068"/><rect x="20" y="55" width="13" height="1" fill="#ffffff" opacity="0.8"/><rect x="3" y="62" width="12" height="1" fill="#5a6068"/><rect x="3" y="63" width="12" height="1" fill="#ffffff" opacity="0.8"/><rect x="20" y="62" width="13" height="1" fill="#5a6068"/><rect x="20" y="63" width="13" height="1" fill="#ffffff" opacity="0.8"/><rect x="3" y="69" width="12" height="1" fill="#5a6068"/><rect x="3" y="70" width="12" height="1" fill="#ffffff" opacity="0.8"/><rect x="20" y="69" width="13" height="1" fill="#5a6068"/><rect x="20" y="70" width="13" height="1" fill="#ffffff" opacity="0.8"/><rect x="3" y="77" width="12" height="1" fill="#5a6068"/><rect x="3" y="78" width="12" height="1" fill="#ffffff" opacity="0.8"/><rect x="20" y="77" width="13" height="1" fill="#5a6068"/><rect x="20" y="78" width="13" height="1" fill="#ffffff" opacity="0.8"/><rect x="3" y="84" width="12" height="1" fill="#5a6068"/><rect x="3" y="85" width="12" height="1" fill="#ffffff" opacity="0.8"/><rect x="20" y="84" width="13" height="1" fill="#5a6068"/><rect x="20" y="85" width="13" height="1" fill="#ffffff" opacity="0.8"/><rect x="3" y="92" width="12" height="1" fill="#5a6068"/><rect x="3" y="93" width="12" height="1" fill="#ffffff" opacity="0.8"/><rect x="20" y="92" width="13" height="1" fill="#5a6068"/><rect x="20" y="93" width="13" height="1" fill="#ffffff" opacity="0.8"/><rect x="3" y="99" width="12" height="1" fill="#5a6068"/><rect x="3" y="100" width="12" height="1" fill="#ffffff" opacity="0.8"/><rect x="20" y="99" width="13" height="1" fill="#5a6068"/><rect x="20" y="100" width="13" height="1" fill="#ffffff" opacity="0.8"/><rect x="3" y="107" width="12" height="1" fill="#5a6068"/><rect x="3" y="108" width="12" height="1" fill="#ffffff" opacity="0.8"/><rect x="20" y="107" width="13" height="1" fill="#5a6068"/><rect x="20" y="108" width="13" height="1" fill="#ffffff" opacity="0.8"/><rect x="3" y="114" width="12" height="1" fill="#5a6068"/><rect x="3" y="115" width="12" height="1" fill="#ffffff" opacity="0.8"/><rect x="20" y="114" width="13" height="1" fill="#5a6068"/><rect x="20" y="115" width="13" height="1" fill="#ffffff" opacity="0.8"/><rect x="3" y="122" width="12" height="1" fill="#5a6068"/><rect x="3" y="123" width="12" height="1" fill="#ffffff" opacity="0.8"/><rect x="20" y="122" width="13" height="1" fill="#5a6068"/><rect x="20" y="123" width="13" height="1" fill="#ffffff" opacity="0.8"/><rect x="3" y="129" width="12" height="1" fill="#5a6068"/><rect x="3" y="130" width="12" height="1" fill="#ffffff" opacity="0.8"/><rect x="20" y="129" width="13" height="1" fill="#5a6068"/><rect x="20" y="130" width="13" height="1" fill="#ffffff" opacity="0.8"/><rect x="3" y="137" width="12" height="1" fill="#5a6068"/><rect x="3" y="138" width="12" height="1" fill="#ffffff" opacity="0.8"/><rect x="20" y="137" width="13" height="1" fill="#5a6068"/><rect x="20" y="138" width="13" height="1" fill="#ffffff" opacity="0.8"/><rect x="3" y="144" width="12" height="1" fill="#5a6068"/><rect x="3" y="145" width="12" height="1" fill="#ffffff" opacity="0.8"/><rect x="20" y="144" width="13" height="1" fill="#5a6068"/><rect x="20" y="145" width="13" height="1" fill="#ffffff" opacity="0.8"/><rect x="16" y="1" width="4" height="165" fill="#eceef0"/>
<rect x="15" y="0" width="1.3" height="140" fill="#000"/><rect x="15" y="0" width="4" height="1.5" fill="#000"/></svg>
<svg style="position:absolute;left:414px;top:699px;" width="22" height="36" viewBox="0 0 22 36"><rect x="4" y="4" width="17" height="31" rx="5.5" fill="#3a4250" opacity="0.55" filter="url(#fth)"/>
<rect x="2.5" y="2.5" width="17" height="30" rx="5" fill="url(#gthumb)" stroke="#50545a" stroke-width="1.2"/>
<rect x="4.5" y="16.5" width="13" height="3.5" fill="#a8b4c4" opacity="0.5"/><rect x="5" y="17.3" width="12" height="1.8" fill="#34507c"/></svg>
<svg style="position:absolute;left:417px;top:733px;" width="16" height="16" viewBox="0 0 16 16"><path d="M1 5 L8 13.5 L15 5" fill="none" stroke="#7a7e84" stroke-width="1.5"/>
<path d="M8 10 L14.5 1.5 L1.5 1.5 Z" fill="url(#garr)" stroke="#707478" stroke-width="1.2" stroke-linejoin="round"/></svg>
<div style="left:443px;top:439px;width:34px;height:313px;background:linear-gradient(90deg,#fdfeff 0%,#e8eefa 35%,#c6d8f6 65%,#aec8f2 100%);"></div>
<div style="left:477px;top:439px;width:2px;height:314px;background:#a4b4cc;"></div>
<div style="left:443px;top:752px;width:34px;height:1px;background:#8494a8;"></div>
<span class="t" style="left:261px;width:400px;text-align:center;top:443.84px;font-size:12px;line-height:12px;font-weight:400;color:#000;transform:scaleX(0.9);">12</span>
<div style="left:446px;top:459px;width:29px;height:17px;box-sizing:border-box;border-top:2px solid #7c7c7c;border-left:2px solid #7c7c7c;border-right:1px solid #fafafa;border-bottom:1px solid #fafafa;background:#000;"></div>
<span class="t" style="left:70.5px;width:400px;text-align:right;top:464.54px;font-size:10px;line-height:10px;font-weight:400;color:#fff;transform-origin:100% 0;">0</span>
<div style="left:446px;top:479px;width:29px;height:53px;box-sizing:border-box;border-top:1px solid #7a7a7a;border-left:2px solid #7a7a7a;border-right:1px solid #fafafa;border-bottom:2px solid #fafafa;background:#000;"></div>
<div style="left:448px;top:480px;width:26px;height:26px;background:#f2a8a8;"></div>
<div class="t" style="left:449px;top:480px;font-size:12.2px;line-height:13px;color:#000010;transform:scaleX(0.78);-webkit-text-stroke:0.3px #000010;transform-origin:0 0;white-space:pre">rgb.4
Blue</div>
<svg style="position:absolute;left:453px;top:537px;" width="16" height="16" viewBox="0 0 16 16"><path d="M1 10.5 L8 1.5 L15 10.5" fill="none" stroke="#7a7e84" stroke-width="1.5"/>
<path d="M8 5 L14.5 13.5 L1.5 13.5 Z" fill="url(#garr)" stroke="#707478" stroke-width="1.2" stroke-linejoin="round"/></svg>
<svg style="position:absolute;left:443px;top:569px;" width="34" height="166" viewBox="0 0 34 166"><rect x="3" y="2" width="12" height="1" fill="#5a6068"/><rect x="3" y="3" width="12" height="1" fill="#ffffff" opacity="0.8"/><rect x="20" y="2" width="13" height="1" fill="#5a6068"/><rect x="20" y="3" width="13" height="1" fill="#ffffff" opacity="0.8"/><rect x="3" y="9" width="12" height="1" fill="#5a6068"/><rect x="3" y="10" width="12" height="1" fill="#ffffff" opacity="0.8"/><rect x="20" y="9" width="13" height="1" fill="#5a6068"/><rect x="20" y="10" width="13" height="1" fill="#ffffff" opacity="0.8"/><rect x="3" y="17" width="12" height="1" fill="#5a6068"/><rect x="3" y="18" width="12" height="1" fill="#ffffff" opacity="0.8"/><rect x="20" y="17" width="13" height="1" fill="#5a6068"/><rect x="20" y="18" width="13" height="1" fill="#ffffff" opacity="0.8"/><rect x="3" y="24" width="12" height="1" fill="#5a6068"/><rect x="3" y="25" width="12" height="1" fill="#ffffff" opacity="0.8"/><rect x="20" y="24" width="13" height="1" fill="#5a6068"/><rect x="20" y="25" width="13" height="1" fill="#ffffff" opacity="0.8"/><rect x="3" y="32" width="12" height="1" fill="#5a6068"/><rect x="3" y="33" width="12" height="1" fill="#ffffff" opacity="0.8"/><rect x="20" y="32" width="13" height="1" fill="#5a6068"/><rect x="20" y="33" width="13" height="1" fill="#ffffff" opacity="0.8"/><rect x="3" y="39" width="12" height="1" fill="#5a6068"/><rect x="3" y="40" width="12" height="1" fill="#ffffff" opacity="0.8"/><rect x="20" y="39" width="13" height="1" fill="#5a6068"/><rect x="20" y="40" width="13" height="1" fill="#ffffff" opacity="0.8"/><rect x="3" y="47" width="12" height="1" fill="#5a6068"/><rect x="3" y="48" width="12" height="1" fill="#ffffff" opacity="0.8"/><rect x="20" y="47" width="13" height="1" fill="#5a6068"/><rect x="20" y="48" width="13" height="1" fill="#ffffff" opacity="0.8"/><rect x="3" y="54" width="12" height="1" fill="#5a6068"/><rect x="3" y="55" width="12" height="1" fill="#ffffff" opacity="0.8"/><rect x="20" y="54" width="13" height="1" fill="#5a6068"/><rect x="20" y="55" width="13" height="1" fill="#ffffff" opacity="0.8"/><rect x="3" y="62" width="12" height="1" fill="#5a6068"/><rect x="3" y="63" width="12" height="1" fill="#ffffff" opacity="0.8"/><rect x="20" y="62" width="13" height="1" fill="#5a6068"/><rect x="20" y="63" width="13" height="1" fill="#ffffff" opacity="0.8"/><rect x="3" y="69" width="12" height="1" fill="#5a6068"/><rect x="3" y="70" width="12" height="1" fill="#ffffff" opacity="0.8"/><rect x="20" y="69" width="13" height="1" fill="#5a6068"/><rect x="20" y="70" width="13" height="1" fill="#ffffff" opacity="0.8"/><rect x="3" y="77" width="12" height="1" fill="#5a6068"/><rect x="3" y="78" width="12" height="1" fill="#ffffff" opacity="0.8"/><rect x="20" y="77" width="13" height="1" fill="#5a6068"/><rect x="20" y="78" width="13" height="1" fill="#ffffff" opacity="0.8"/><rect x="3" y="84" width="12" height="1" fill="#5a6068"/><rect x="3" y="85" width="12" height="1" fill="#ffffff" opacity="0.8"/><rect x="20" y="84" width="13" height="1" fill="#5a6068"/><rect x="20" y="85" width="13" height="1" fill="#ffffff" opacity="0.8"/><rect x="3" y="92" width="12" height="1" fill="#5a6068"/><rect x="3" y="93" width="12" height="1" fill="#ffffff" opacity="0.8"/><rect x="20" y="92" width="13" height="1" fill="#5a6068"/><rect x="20" y="93" width="13" height="1" fill="#ffffff" opacity="0.8"/><rect x="3" y="99" width="12" height="1" fill="#5a6068"/><rect x="3" y="100" width="12" height="1" fill="#ffffff" opacity="0.8"/><rect x="20" y="99" width="13" height="1" fill="#5a6068"/><rect x="20" y="100" width="13" height="1" fill="#ffffff" opacity="0.8"/><rect x="3" y="107" width="12" height="1" fill="#5a6068"/><rect x="3" y="108" width="12" height="1" fill="#ffffff" opacity="0.8"/><rect x="20" y="107" width="13" height="1" fill="#5a6068"/><rect x="20" y="108" width="13" height="1" fill="#ffffff" opacity="0.8"/><rect x="3" y="114" width="12" height="1" fill="#5a6068"/><rect x="3" y="115" width="12" height="1" fill="#ffffff" opacity="0.8"/><rect x="20" y="114" width="13" height="1" fill="#5a6068"/><rect x="20" y="115" width="13" height="1" fill="#ffffff" opacity="0.8"/><rect x="3" y="122" width="12" height="1" fill="#5a6068"/><rect x="3" y="123" width="12" height="1" fill="#ffffff" opacity="0.8"/><rect x="20" y="122" width="13" height="1" fill="#5a6068"/><rect x="20" y="123" width="13" height="1" fill="#ffffff" opacity="0.8"/><rect x="3" y="129" width="12" height="1" fill="#5a6068"/><rect x="3" y="130" width="12" height="1" fill="#ffffff" opacity="0.8"/><rect x="20" y="129" width="13" height="1" fill="#5a6068"/><rect x="20" y="130" width="13" height="1" fill="#ffffff" opacity="0.8"/><rect x="3" y="137" width="12" height="1" fill="#5a6068"/><rect x="3" y="138" width="12" height="1" fill="#ffffff" opacity="0.8"/><rect x="20" y="137" width="13" height="1" fill="#5a6068"/><rect x="20" y="138" width="13" height="1" fill="#ffffff" opacity="0.8"/><rect x="3" y="144" width="12" height="1" fill="#5a6068"/><rect x="3" y="145" width="12" height="1" fill="#ffffff" opacity="0.8"/><rect x="20" y="144" width="13" height="1" fill="#5a6068"/><rect x="20" y="145" width="13" height="1" fill="#ffffff" opacity="0.8"/><rect x="16" y="1" width="4" height="165" fill="#eceef0"/>
<rect x="15" y="0" width="1.3" height="140" fill="#000"/><rect x="15" y="0" width="4" height="1.5" fill="#000"/></svg>
<svg style="position:absolute;left:450px;top:699px;" width="22" height="36" viewBox="0 0 22 36"><rect x="4" y="4" width="17" height="31" rx="5.5" fill="#3a4250" opacity="0.55" filter="url(#fth)"/>
<rect x="2.5" y="2.5" width="17" height="30" rx="5" fill="url(#gthumb)" stroke="#50545a" stroke-width="1.2"/>
<rect x="4.5" y="16.5" width="13" height="3.5" fill="#a8b4c4" opacity="0.5"/><rect x="5" y="17.3" width="12" height="1.8" fill="#34507c"/></svg>
<svg style="position:absolute;left:453px;top:733px;" width="16" height="16" viewBox="0 0 16 16"><path d="M1 5 L8 13.5 L15 5" fill="none" stroke="#7a7e84" stroke-width="1.5"/>
<path d="M8 10 L14.5 1.5 L1.5 1.5 Z" fill="url(#garr)" stroke="#707478" stroke-width="1.2" stroke-linejoin="round"/></svg>
<div style="left:479px;top:439px;width:34px;height:313px;background:linear-gradient(90deg,#fdfeff 0%,#e8eefa 35%,#c6d8f6 65%,#aec8f2 100%);"></div>
<div style="left:513px;top:439px;width:2px;height:314px;background:#a4b4cc;"></div>
<div style="left:479px;top:752px;width:34px;height:1px;background:#8494a8;"></div>
<span class="t" style="left:297px;width:400px;text-align:center;top:443.84px;font-size:12px;line-height:12px;font-weight:400;color:#000;transform:scaleX(0.9);">13</span>
<div style="left:482px;top:459px;width:29px;height:17px;box-sizing:border-box;border-top:2px solid #7c7c7c;border-left:2px solid #7c7c7c;border-right:1px solid #fafafa;border-bottom:1px solid #fafafa;background:#000;"></div>
<span class="t" style="left:106.5px;width:400px;text-align:right;top:464.54px;font-size:10px;line-height:10px;font-weight:400;color:#fff;transform-origin:100% 0;">0</span>
<div style="left:482px;top:479px;width:29px;height:53px;box-sizing:border-box;border-top:1px solid #7a7a7a;border-left:2px solid #7a7a7a;border-right:1px solid #fafafa;border-bottom:2px solid #fafafa;background:#000;"></div>
<div style="left:484px;top:480px;width:26px;height:26px;background:#c2aaea;"></div>
<div class="t" style="left:485px;top:480px;font-size:12.2px;line-height:13px;color:#000010;transform:scaleX(0.78);-webkit-text-stroke:0.3px #000010;transform-origin:0 0;white-space:pre">rgb.5
Red</div>
<svg style="position:absolute;left:489px;top:537px;" width="16" height="16" viewBox="0 0 16 16"><path d="M1 10.5 L8 1.5 L15 10.5" fill="none" stroke="#7a7e84" stroke-width="1.5"/>
<path d="M8 5 L14.5 13.5 L1.5 13.5 Z" fill="url(#garr)" stroke="#707478" stroke-width="1.2" stroke-linejoin="round"/></svg>
<svg style="position:absolute;left:479px;top:569px;" width="34" height="166" viewBox="0 0 34 166"><rect x="3" y="2" width="12" height="1" fill="#5a6068"/><rect x="3" y="3" width="12" height="1" fill="#ffffff" opacity="0.8"/><rect x="20" y="2" width="13" height="1" fill="#5a6068"/><rect x="20" y="3" width="13" height="1" fill="#ffffff" opacity="0.8"/><rect x="3" y="9" width="12" height="1" fill="#5a6068"/><rect x="3" y="10" width="12" height="1" fill="#ffffff" opacity="0.8"/><rect x="20" y="9" width="13" height="1" fill="#5a6068"/><rect x="20" y="10" width="13" height="1" fill="#ffffff" opacity="0.8"/><rect x="3" y="17" width="12" height="1" fill="#5a6068"/><rect x="3" y="18" width="12" height="1" fill="#ffffff" opacity="0.8"/><rect x="20" y="17" width="13" height="1" fill="#5a6068"/><rect x="20" y="18" width="13" height="1" fill="#ffffff" opacity="0.8"/><rect x="3" y="24" width="12" height="1" fill="#5a6068"/><rect x="3" y="25" width="12" height="1" fill="#ffffff" opacity="0.8"/><rect x="20" y="24" width="13" height="1" fill="#5a6068"/><rect x="20" y="25" width="13" height="1" fill="#ffffff" opacity="0.8"/><rect x="3" y="32" width="12" height="1" fill="#5a6068"/><rect x="3" y="33" width="12" height="1" fill="#ffffff" opacity="0.8"/><rect x="20" y="32" width="13" height="1" fill="#5a6068"/><rect x="20" y="33" width="13" height="1" fill="#ffffff" opacity="0.8"/><rect x="3" y="39" width="12" height="1" fill="#5a6068"/><rect x="3" y="40" width="12" height="1" fill="#ffffff" opacity="0.8"/><rect x="20" y="39" width="13" height="1" fill="#5a6068"/><rect x="20" y="40" width="13" height="1" fill="#ffffff" opacity="0.8"/><rect x="3" y="47" width="12" height="1" fill="#5a6068"/><rect x="3" y="48" width="12" height="1" fill="#ffffff" opacity="0.8"/><rect x="20" y="47" width="13" height="1" fill="#5a6068"/><rect x="20" y="48" width="13" height="1" fill="#ffffff" opacity="0.8"/><rect x="3" y="54" width="12" height="1" fill="#5a6068"/><rect x="3" y="55" width="12" height="1" fill="#ffffff" opacity="0.8"/><rect x="20" y="54" width="13" height="1" fill="#5a6068"/><rect x="20" y="55" width="13" height="1" fill="#ffffff" opacity="0.8"/><rect x="3" y="62" width="12" height="1" fill="#5a6068"/><rect x="3" y="63" width="12" height="1" fill="#ffffff" opacity="0.8"/><rect x="20" y="62" width="13" height="1" fill="#5a6068"/><rect x="20" y="63" width="13" height="1" fill="#ffffff" opacity="0.8"/><rect x="3" y="69" width="12" height="1" fill="#5a6068"/><rect x="3" y="70" width="12" height="1" fill="#ffffff" opacity="0.8"/><rect x="20" y="69" width="13" height="1" fill="#5a6068"/><rect x="20" y="70" width="13" height="1" fill="#ffffff" opacity="0.8"/><rect x="3" y="77" width="12" height="1" fill="#5a6068"/><rect x="3" y="78" width="12" height="1" fill="#ffffff" opacity="0.8"/><rect x="20" y="77" width="13" height="1" fill="#5a6068"/><rect x="20" y="78" width="13" height="1" fill="#ffffff" opacity="0.8"/><rect x="3" y="84" width="12" height="1" fill="#5a6068"/><rect x="3" y="85" width="12" height="1" fill="#ffffff" opacity="0.8"/><rect x="20" y="84" width="13" height="1" fill="#5a6068"/><rect x="20" y="85" width="13" height="1" fill="#ffffff" opacity="0.8"/><rect x="3" y="92" width="12" height="1" fill="#5a6068"/><rect x="3" y="93" width="12" height="1" fill="#ffffff" opacity="0.8"/><rect x="20" y="92" width="13" height="1" fill="#5a6068"/><rect x="20" y="93" width="13" height="1" fill="#ffffff" opacity="0.8"/><rect x="3" y="99" width="12" height="1" fill="#5a6068"/><rect x="3" y="100" width="12" height="1" fill="#ffffff" opacity="0.8"/><rect x="20" y="99" width="13" height="1" fill="#5a6068"/><rect x="20" y="100" width="13" height="1" fill="#ffffff" opacity="0.8"/><rect x="3" y="107" width="12" height="1" fill="#5a6068"/><rect x="3" y="108" width="12" height="1" fill="#ffffff" opacity="0.8"/><rect x="20" y="107" width="13" height="1" fill="#5a6068"/><rect x="20" y="108" width="13" height="1" fill="#ffffff" opacity="0.8"/><rect x="3" y="114" width="12" height="1" fill="#5a6068"/><rect x="3" y="115" width="12" height="1" fill="#ffffff" opacity="0.8"/><rect x="20" y="114" width="13" height="1" fill="#5a6068"/><rect x="20" y="115" width="13" height="1" fill="#ffffff" opacity="0.8"/><rect x="3" y="122" width="12" height="1" fill="#5a6068"/><rect x="3" y="123" width="12" height="1" fill="#ffffff" opacity="0.8"/><rect x="20" y="122" width="13" height="1" fill="#5a6068"/><rect x="20" y="123" width="13" height="1" fill="#ffffff" opacity="0.8"/><rect x="3" y="129" width="12" height="1" fill="#5a6068"/><rect x="3" y="130" width="12" height="1" fill="#ffffff" opacity="0.8"/><rect x="20" y="129" width="13" height="1" fill="#5a6068"/><rect x="20" y="130" width="13" height="1" fill="#ffffff" opacity="0.8"/><rect x="3" y="137" width="12" height="1" fill="#5a6068"/><rect x="3" y="138" width="12" height="1" fill="#ffffff" opacity="0.8"/><rect x="20" y="137" width="13" height="1" fill="#5a6068"/><rect x="20" y="138" width="13" height="1" fill="#ffffff" opacity="0.8"/><rect x="3" y="144" width="12" height="1" fill="#5a6068"/><rect x="3" y="145" width="12" height="1" fill="#ffffff" opacity="0.8"/><rect x="20" y="144" width="13" height="1" fill="#5a6068"/><rect x="20" y="145" width="13" height="1" fill="#ffffff" opacity="0.8"/><rect x="16" y="1" width="4" height="165" fill="#eceef0"/>
<rect x="15" y="0" width="1.3" height="140" fill="#000"/><rect x="15" y="0" width="4" height="1.5" fill="#000"/></svg>
<svg style="position:absolute;left:486px;top:699px;" width="22" height="36" viewBox="0 0 22 36"><rect x="4" y="4" width="17" height="31" rx="5.5" fill="#3a4250" opacity="0.55" filter="url(#fth)"/>
<rect x="2.5" y="2.5" width="17" height="30" rx="5" fill="url(#gthumb)" stroke="#50545a" stroke-width="1.2"/>
<rect x="4.5" y="16.5" width="13" height="3.5" fill="#a8b4c4" opacity="0.5"/><rect x="5" y="17.3" width="12" height="1.8" fill="#34507c"/></svg>
<svg style="position:absolute;left:489px;top:733px;" width="16" height="16" viewBox="0 0 16 16"><path d="M1 5 L8 13.5 L15 5" fill="none" stroke="#7a7e84" stroke-width="1.5"/>
<path d="M8 10 L14.5 1.5 L1.5 1.5 Z" fill="url(#garr)" stroke="#707478" stroke-width="1.2" stroke-linejoin="round"/></svg>
<div style="left:515px;top:439px;width:34px;height:313px;background:linear-gradient(90deg,#fdfeff 0%,#e8eefa 35%,#c6d8f6 65%,#aec8f2 100%);"></div>
<div style="left:549px;top:439px;width:2px;height:314px;background:#a4b4cc;"></div>
<div style="left:515px;top:752px;width:34px;height:1px;background:#8494a8;"></div>
<span class="t" style="left:333px;width:400px;text-align:center;top:443.84px;font-size:12px;line-height:12px;font-weight:400;color:#000;transform:scaleX(0.9);">14</span>
<div style="left:518px;top:459px;width:29px;height:17px;box-sizing:border-box;border-top:2px solid #7c7c7c;border-left:2px solid #7c7c7c;border-right:1px solid #fafafa;border-bottom:1px solid #fafafa;background:#000;"></div>
<span class="t" style="left:142.5px;width:400px;text-align:right;top:464.54px;font-size:10px;line-height:10px;font-weight:400;color:#fff;transform-origin:100% 0;">0</span>
<div style="left:518px;top:479px;width:29px;height:53px;box-sizing:border-box;border-top:1px solid #7a7a7a;border-left:2px solid #7a7a7a;border-right:1px solid #fafafa;border-bottom:2px solid #fafafa;background:#000;"></div>
<div style="left:520px;top:480px;width:26px;height:26px;background:#c2aaea;"></div>
<div class="t" style="left:521px;top:480px;font-size:12.2px;line-height:13px;color:#000010;transform:scaleX(0.78);-webkit-text-stroke:0.3px #000010;transform-origin:0 0;white-space:pre">rgb.5
Gre...</div>
<svg style="position:absolute;left:525px;top:537px;" width="16" height="16" viewBox="0 0 16 16"><path d="M1 10.5 L8 1.5 L15 10.5" fill="none" stroke="#7a7e84" stroke-width="1.5"/>
<path d="M8 5 L14.5 13.5 L1.5 13.5 Z" fill="url(#garr)" stroke="#707478" stroke-width="1.2" stroke-linejoin="round"/></svg>
<svg style="position:absolute;left:515px;top:569px;" width="34" height="166" viewBox="0 0 34 166"><rect x="3" y="2" width="12" height="1" fill="#5a6068"/><rect x="3" y="3" width="12" height="1" fill="#ffffff" opacity="0.8"/><rect x="20" y="2" width="13" height="1" fill="#5a6068"/><rect x="20" y="3" width="13" height="1" fill="#ffffff" opacity="0.8"/><rect x="3" y="9" width="12" height="1" fill="#5a6068"/><rect x="3" y="10" width="12" height="1" fill="#ffffff" opacity="0.8"/><rect x="20" y="9" width="13" height="1" fill="#5a6068"/><rect x="20" y="10" width="13" height="1" fill="#ffffff" opacity="0.8"/><rect x="3" y="17" width="12" height="1" fill="#5a6068"/><rect x="3" y="18" width="12" height="1" fill="#ffffff" opacity="0.8"/><rect x="20" y="17" width="13" height="1" fill="#5a6068"/><rect x="20" y="18" width="13" height="1" fill="#ffffff" opacity="0.8"/><rect x="3" y="24" width="12" height="1" fill="#5a6068"/><rect x="3" y="25" width="12" height="1" fill="#ffffff" opacity="0.8"/><rect x="20" y="24" width="13" height="1" fill="#5a6068"/><rect x="20" y="25" width="13" height="1" fill="#ffffff" opacity="0.8"/><rect x="3" y="32" width="12" height="1" fill="#5a6068"/><rect x="3" y="33" width="12" height="1" fill="#ffffff" opacity="0.8"/><rect x="20" y="32" width="13" height="1" fill="#5a6068"/><rect x="20" y="33" width="13" height="1" fill="#ffffff" opacity="0.8"/><rect x="3" y="39" width="12" height="1" fill="#5a6068"/><rect x="3" y="40" width="12" height="1" fill="#ffffff" opacity="0.8"/><rect x="20" y="39" width="13" height="1" fill="#5a6068"/><rect x="20" y="40" width="13" height="1" fill="#ffffff" opacity="0.8"/><rect x="3" y="47" width="12" height="1" fill="#5a6068"/><rect x="3" y="48" width="12" height="1" fill="#ffffff" opacity="0.8"/><rect x="20" y="47" width="13" height="1" fill="#5a6068"/><rect x="20" y="48" width="13" height="1" fill="#ffffff" opacity="0.8"/><rect x="3" y="54" width="12" height="1" fill="#5a6068"/><rect x="3" y="55" width="12" height="1" fill="#ffffff" opacity="0.8"/><rect x="20" y="54" width="13" height="1" fill="#5a6068"/><rect x="20" y="55" width="13" height="1" fill="#ffffff" opacity="0.8"/><rect x="3" y="62" width="12" height="1" fill="#5a6068"/><rect x="3" y="63" width="12" height="1" fill="#ffffff" opacity="0.8"/><rect x="20" y="62" width="13" height="1" fill="#5a6068"/><rect x="20" y="63" width="13" height="1" fill="#ffffff" opacity="0.8"/><rect x="3" y="69" width="12" height="1" fill="#5a6068"/><rect x="3" y="70" width="12" height="1" fill="#ffffff" opacity="0.8"/><rect x="20" y="69" width="13" height="1" fill="#5a6068"/><rect x="20" y="70" width="13" height="1" fill="#ffffff" opacity="0.8"/><rect x="3" y="77" width="12" height="1" fill="#5a6068"/><rect x="3" y="78" width="12" height="1" fill="#ffffff" opacity="0.8"/><rect x="20" y="77" width="13" height="1" fill="#5a6068"/><rect x="20" y="78" width="13" height="1" fill="#ffffff" opacity="0.8"/><rect x="3" y="84" width="12" height="1" fill="#5a6068"/><rect x="3" y="85" width="12" height="1" fill="#ffffff" opacity="0.8"/><rect x="20" y="84" width="13" height="1" fill="#5a6068"/><rect x="20" y="85" width="13" height="1" fill="#ffffff" opacity="0.8"/><rect x="3" y="92" width="12" height="1" fill="#5a6068"/><rect x="3" y="93" width="12" height="1" fill="#ffffff" opacity="0.8"/><rect x="20" y="92" width="13" height="1" fill="#5a6068"/><rect x="20" y="93" width="13" height="1" fill="#ffffff" opacity="0.8"/><rect x="3" y="99" width="12" height="1" fill="#5a6068"/><rect x="3" y="100" width="12" height="1" fill="#ffffff" opacity="0.8"/><rect x="20" y="99" width="13" height="1" fill="#5a6068"/><rect x="20" y="100" width="13" height="1" fill="#ffffff" opacity="0.8"/><rect x="3" y="107" width="12" height="1" fill="#5a6068"/><rect x="3" y="108" width="12" height="1" fill="#ffffff" opacity="0.8"/><rect x="20" y="107" width="13" height="1" fill="#5a6068"/><rect x="20" y="108" width="13" height="1" fill="#ffffff" opacity="0.8"/><rect x="3" y="114" width="12" height="1" fill="#5a6068"/><rect x="3" y="115" width="12" height="1" fill="#ffffff" opacity="0.8"/><rect x="20" y="114" width="13" height="1" fill="#5a6068"/><rect x="20" y="115" width="13" height="1" fill="#ffffff" opacity="0.8"/><rect x="3" y="122" width="12" height="1" fill="#5a6068"/><rect x="3" y="123" width="12" height="1" fill="#ffffff" opacity="0.8"/><rect x="20" y="122" width="13" height="1" fill="#5a6068"/><rect x="20" y="123" width="13" height="1" fill="#ffffff" opacity="0.8"/><rect x="3" y="129" width="12" height="1" fill="#5a6068"/><rect x="3" y="130" width="12" height="1" fill="#ffffff" opacity="0.8"/><rect x="20" y="129" width="13" height="1" fill="#5a6068"/><rect x="20" y="130" width="13" height="1" fill="#ffffff" opacity="0.8"/><rect x="3" y="137" width="12" height="1" fill="#5a6068"/><rect x="3" y="138" width="12" height="1" fill="#ffffff" opacity="0.8"/><rect x="20" y="137" width="13" height="1" fill="#5a6068"/><rect x="20" y="138" width="13" height="1" fill="#ffffff" opacity="0.8"/><rect x="3" y="144" width="12" height="1" fill="#5a6068"/><rect x="3" y="145" width="12" height="1" fill="#ffffff" opacity="0.8"/><rect x="20" y="144" width="13" height="1" fill="#5a6068"/><rect x="20" y="145" width="13" height="1" fill="#ffffff" opacity="0.8"/><rect x="16" y="1" width="4" height="165" fill="#eceef0"/>
<rect x="15" y="0" width="1.3" height="140" fill="#000"/><rect x="15" y="0" width="4" height="1.5" fill="#000"/></svg>
<svg style="position:absolute;left:522px;top:699px;" width="22" height="36" viewBox="0 0 22 36"><rect x="4" y="4" width="17" height="31" rx="5.5" fill="#3a4250" opacity="0.55" filter="url(#fth)"/>
<rect x="2.5" y="2.5" width="17" height="30" rx="5" fill="url(#gthumb)" stroke="#50545a" stroke-width="1.2"/>
<rect x="4.5" y="16.5" width="13" height="3.5" fill="#a8b4c4" opacity="0.5"/><rect x="5" y="17.3" width="12" height="1.8" fill="#34507c"/></svg>
<svg style="position:absolute;left:525px;top:733px;" width="16" height="16" viewBox="0 0 16 16"><path d="M1 5 L8 13.5 L15 5" fill="none" stroke="#7a7e84" stroke-width="1.5"/>
<path d="M8 10 L14.5 1.5 L1.5 1.5 Z" fill="url(#garr)" stroke="#707478" stroke-width="1.2" stroke-linejoin="round"/></svg>
<div style="left:551px;top:439px;width:34px;height:313px;background:linear-gradient(90deg,#fdfeff 0%,#e8eefa 35%,#c6d8f6 65%,#aec8f2 100%);"></div>
<div style="left:585px;top:439px;width:2px;height:314px;background:#a4b4cc;"></div>
<div style="left:551px;top:752px;width:34px;height:1px;background:#8494a8;"></div>
<span class="t" style="left:369px;width:400px;text-align:center;top:443.84px;font-size:12px;line-height:12px;font-weight:400;color:#000;transform:scaleX(0.9);">15</span>
<div style="left:554px;top:459px;width:29px;height:17px;box-sizing:border-box;border-top:2px solid #7c7c7c;border-left:2px solid #7c7c7c;border-right:1px solid #fafafa;border-bottom:1px solid #fafafa;background:#000;"></div>
<span class="t" style="left:178.5px;width:400px;text-align:right;top:464.54px;font-size:10px;line-height:10px;font-weight:400;color:#fff;transform-origin:100% 0;">0</span>
<div style="left:554px;top:479px;width:29px;height:53px;box-sizing:border-box;border-top:1px solid #7a7a7a;border-left:2px solid #7a7a7a;border-right:1px solid #fafafa;border-bottom:2px solid #fafafa;background:#000;"></div>
<div style="left:556px;top:480px;width:26px;height:26px;background:#c2aaea;"></div>
<div class="t" style="left:557px;top:480px;font-size:12.2px;line-height:13px;color:#000010;transform:scaleX(0.78);-webkit-text-stroke:0.3px #000010;transform-origin:0 0;white-space:pre">rgb.5
Blue</div>
<svg style="position:absolute;left:561px;top:537px;" width="16" height="16" viewBox="0 0 16 16"><path d="M1 10.5 L8 1.5 L15 10.5" fill="none" stroke="#7a7e84" stroke-width="1.5"/>
<path d="M8 5 L14.5 13.5 L1.5 13.5 Z" fill="url(#garr)" stroke="#707478" stroke-width="1.2" stroke-linejoin="round"/></svg>
<svg style="position:absolute;left:551px;top:569px;" width="34" height="166" viewBox="0 0 34 166"><rect x="3" y="2" width="12" height="1" fill="#5a6068"/><rect x="3" y="3" width="12" height="1" fill="#ffffff" opacity="0.8"/><rect x="20" y="2" width="13" height="1" fill="#5a6068"/><rect x="20" y="3" width="13" height="1" fill="#ffffff" opacity="0.8"/><rect x="3" y="9" width="12" height="1" fill="#5a6068"/><rect x="3" y="10" width="12" height="1" fill="#ffffff" opacity="0.8"/><rect x="20" y="9" width="13" height="1" fill="#5a6068"/><rect x="20" y="10" width="13" height="1" fill="#ffffff" opacity="0.8"/><rect x="3" y="17" width="12" height="1" fill="#5a6068"/><rect x="3" y="18" width="12" height="1" fill="#ffffff" opacity="0.8"/><rect x="20" y="17" width="13" height="1" fill="#5a6068"/><rect x="20" y="18" width="13" height="1" fill="#ffffff" opacity="0.8"/><rect x="3" y="24" width="12" height="1" fill="#5a6068"/><rect x="3" y="25" width="12" height="1" fill="#ffffff" opacity="0.8"/><rect x="20" y="24" width="13" height="1" fill="#5a6068"/><rect x="20" y="25" width="13" height="1" fill="#ffffff" opacity="0.8"/><rect x="3" y="32" width="12" height="1" fill="#5a6068"/><rect x="3" y="33" width="12" height="1" fill="#ffffff" opacity="0.8"/><rect x="20" y="32" width="13" height="1" fill="#5a6068"/><rect x="20" y="33" width="13" height="1" fill="#ffffff" opacity="0.8"/><rect x="3" y="39" width="12" height="1" fill="#5a6068"/><rect x="3" y="40" width="12" height="1" fill="#ffffff" opacity="0.8"/><rect x="20" y="39" width="13" height="1" fill="#5a6068"/><rect x="20" y="40" width="13" height="1" fill="#ffffff" opacity="0.8"/><rect x="3" y="47" width="12" height="1" fill="#5a6068"/><rect x="3" y="48" width="12" height="1" fill="#ffffff" opacity="0.8"/><rect x="20" y="47" width="13" height="1" fill="#5a6068"/><rect x="20" y="48" width="13" height="1" fill="#ffffff" opacity="0.8"/><rect x="3" y="54" width="12" height="1" fill="#5a6068"/><rect x="3" y="55" width="12" height="1" fill="#ffffff" opacity="0.8"/><rect x="20" y="54" width="13" height="1" fill="#5a6068"/><rect x="20" y="55" width="13" height="1" fill="#ffffff" opacity="0.8"/><rect x="3" y="62" width="12" height="1" fill="#5a6068"/><rect x="3" y="63" width="12" height="1" fill="#ffffff" opacity="0.8"/><rect x="20" y="62" width="13" height="1" fill="#5a6068"/><rect x="20" y="63" width="13" height="1" fill="#ffffff" opacity="0.8"/><rect x="3" y="69" width="12" height="1" fill="#5a6068"/><rect x="3" y="70" width="12" height="1" fill="#ffffff" opacity="0.8"/><rect x="20" y="69" width="13" height="1" fill="#5a6068"/><rect x="20" y="70" width="13" height="1" fill="#ffffff" opacity="0.8"/><rect x="3" y="77" width="12" height="1" fill="#5a6068"/><rect x="3" y="78" width="12" height="1" fill="#ffffff" opacity="0.8"/><rect x="20" y="77" width="13" height="1" fill="#5a6068"/><rect x="20" y="78" width="13" height="1" fill="#ffffff" opacity="0.8"/><rect x="3" y="84" width="12" height="1" fill="#5a6068"/><rect x="3" y="85" width="12" height="1" fill="#ffffff" opacity="0.8"/><rect x="20" y="84" width="13" height="1" fill="#5a6068"/><rect x="20" y="85" width="13" height="1" fill="#ffffff" opacity="0.8"/><rect x="3" y="92" width="12" height="1" fill="#5a6068"/><rect x="3" y="93" width="12" height="1" fill="#ffffff" opacity="0.8"/><rect x="20" y="92" width="13" height="1" fill="#5a6068"/><rect x="20" y="93" width="13" height="1" fill="#ffffff" opacity="0.8"/><rect x="3" y="99" width="12" height="1" fill="#5a6068"/><rect x="3" y="100" width="12" height="1" fill="#ffffff" opacity="0.8"/><rect x="20" y="99" width="13" height="1" fill="#5a6068"/><rect x="20" y="100" width="13" height="1" fill="#ffffff" opacity="0.8"/><rect x="3" y="107" width="12" height="1" fill="#5a6068"/><rect x="3" y="108" width="12" height="1" fill="#ffffff" opacity="0.8"/><rect x="20" y="107" width="13" height="1" fill="#5a6068"/><rect x="20" y="108" width="13" height="1" fill="#ffffff" opacity="0.8"/><rect x="3" y="114" width="12" height="1" fill="#5a6068"/><rect x="3" y="115" width="12" height="1" fill="#ffffff" opacity="0.8"/><rect x="20" y="114" width="13" height="1" fill="#5a6068"/><rect x="20" y="115" width="13" height="1" fill="#ffffff" opacity="0.8"/><rect x="3" y="122" width="12" height="1" fill="#5a6068"/><rect x="3" y="123" width="12" height="1" fill="#ffffff" opacity="0.8"/><rect x="20" y="122" width="13" height="1" fill="#5a6068"/><rect x="20" y="123" width="13" height="1" fill="#ffffff" opacity="0.8"/><rect x="3" y="129" width="12" height="1" fill="#5a6068"/><rect x="3" y="130" width="12" height="1" fill="#ffffff" opacity="0.8"/><rect x="20" y="129" width="13" height="1" fill="#5a6068"/><rect x="20" y="130" width="13" height="1" fill="#ffffff" opacity="0.8"/><rect x="3" y="137" width="12" height="1" fill="#5a6068"/><rect x="3" y="138" width="12" height="1" fill="#ffffff" opacity="0.8"/><rect x="20" y="137" width="13" height="1" fill="#5a6068"/><rect x="20" y="138" width="13" height="1" fill="#ffffff" opacity="0.8"/><rect x="3" y="144" width="12" height="1" fill="#5a6068"/><rect x="3" y="145" width="12" height="1" fill="#ffffff" opacity="0.8"/><rect x="20" y="144" width="13" height="1" fill="#5a6068"/><rect x="20" y="145" width="13" height="1" fill="#ffffff" opacity="0.8"/><rect x="16" y="1" width="4" height="165" fill="#eceef0"/>
<rect x="15" y="0" width="1.3" height="140" fill="#000"/><rect x="15" y="0" width="4" height="1.5" fill="#000"/></svg>
<svg style="position:absolute;left:558px;top:699px;" width="22" height="36" viewBox="0 0 22 36"><rect x="4" y="4" width="17" height="31" rx="5.5" fill="#3a4250" opacity="0.55" filter="url(#fth)"/>
<rect x="2.5" y="2.5" width="17" height="30" rx="5" fill="url(#gthumb)" stroke="#50545a" stroke-width="1.2"/>
<rect x="4.5" y="16.5" width="13" height="3.5" fill="#a8b4c4" opacity="0.5"/><rect x="5" y="17.3" width="12" height="1.8" fill="#34507c"/></svg>
<svg style="position:absolute;left:561px;top:733px;" width="16" height="16" viewBox="0 0 16 16"><path d="M1 5 L8 13.5 L15 5" fill="none" stroke="#7a7e84" stroke-width="1.5"/>
<path d="M8 10 L14.5 1.5 L1.5 1.5 Z" fill="url(#garr)" stroke="#707478" stroke-width="1.2" stroke-linejoin="round"/></svg>
<div style="left:587px;top:439px;width:34px;height:313px;background:linear-gradient(90deg,#fdfeff 0%,#e8eefa 35%,#c6d8f6 65%,#aec8f2 100%);"></div>
<div style="left:621px;top:439px;width:2px;height:314px;background:#a4b4cc;"></div>
<div style="left:587px;top:752px;width:34px;height:1px;background:#8494a8;"></div>
<span class="t" style="left:405px;width:400px;text-align:center;top:443.84px;font-size:12px;line-height:12px;font-weight:400;color:#000;transform:scaleX(0.9);">16</span>
<div style="left:590px;top:459px;width:29px;height:17px;box-sizing:border-box;border-top:2px solid #7c7c7c;border-left:2px solid #7c7c7c;border-right:1px solid #fafafa;border-bottom:1px solid #fafafa;background:#000;"></div>
<span class="t" style="left:214.5px;width:400px;text-align:right;top:464.54px;font-size:10px;line-height:10px;font-weight:400;color:#fff;transform-origin:100% 0;">0</span>
<div style="left:590px;top:479px;width:29px;height:53px;box-sizing:border-box;border-top:1px solid #7a7a7a;border-left:2px solid #7a7a7a;border-right:1px solid #fafafa;border-bottom:2px solid #fafafa;background:#000;"></div>
<div style="left:592px;top:480px;width:26px;height:26px;background:#aacaba;"></div>
<div class="t" style="left:593px;top:480px;font-size:12.2px;line-height:13px;color:#000010;transform:scaleX(0.78);-webkit-text-stroke:0.3px #000010;transform-origin:0 0;white-space:pre">rgb.6
Red</div>
<svg style="position:absolute;left:597px;top:537px;" width="16" height="16" viewBox="0 0 16 16"><path d="M1 10.5 L8 1.5 L15 10.5" fill="none" stroke="#7a7e84" stroke-width="1.5"/>
<path d="M8 5 L14.5 13.5 L1.5 13.5 Z" fill="url(#garr)" stroke="#707478" stroke-width="1.2" stroke-linejoin="round"/></svg>
<svg style="position:absolute;left:587px;top:569px;" width="34" height="166" viewBox="0 0 34 166"><rect x="3" y="2" width="12" height="1" fill="#5a6068"/><rect x="3" y="3" width="12" height="1" fill="#ffffff" opacity="0.8"/><rect x="20" y="2" width="13" height="1" fill="#5a6068"/><rect x="20" y="3" width="13" height="1" fill="#ffffff" opacity="0.8"/><rect x="3" y="9" width="12" height="1" fill="#5a6068"/><rect x="3" y="10" width="12" height="1" fill="#ffffff" opacity="0.8"/><rect x="20" y="9" width="13" height="1" fill="#5a6068"/><rect x="20" y="10" width="13" height="1" fill="#ffffff" opacity="0.8"/><rect x="3" y="17" width="12" height="1" fill="#5a6068"/><rect x="3" y="18" width="12" height="1" fill="#ffffff" opacity="0.8"/><rect x="20" y="17" width="13" height="1" fill="#5a6068"/><rect x="20" y="18" width="13" height="1" fill="#ffffff" opacity="0.8"/><rect x="3" y="24" width="12" height="1" fill="#5a6068"/><rect x="3" y="25" width="12" height="1" fill="#ffffff" opacity="0.8"/><rect x="20" y="24" width="13" height="1" fill="#5a6068"/><rect x="20" y="25" width="13" height="1" fill="#ffffff" opacity="0.8"/><rect x="3" y="32" width="12" height="1" fill="#5a6068"/><rect x="3" y="33" width="12" height="1" fill="#ffffff" opacity="0.8"/><rect x="20" y="32" width="13" height="1" fill="#5a6068"/><rect x="20" y="33" width="13" height="1" fill="#ffffff" opacity="0.8"/><rect x="3" y="39" width="12" height="1" fill="#5a6068"/><rect x="3" y="40" width="12" height="1" fill="#ffffff" opacity="0.8"/><rect x="20" y="39" width="13" height="1" fill="#5a6068"/><rect x="20" y="40" width="13" height="1" fill="#ffffff" opacity="0.8"/><rect x="3" y="47" width="12" height="1" fill="#5a6068"/><rect x="3" y="48" width="12" height="1" fill="#ffffff" opacity="0.8"/><rect x="20" y="47" width="13" height="1" fill="#5a6068"/><rect x="20" y="48" width="13" height="1" fill="#ffffff" opacity="0.8"/><rect x="3" y="54" width="12" height="1" fill="#5a6068"/><rect x="3" y="55" width="12" height="1" fill="#ffffff" opacity="0.8"/><rect x="20" y="54" width="13" height="1" fill="#5a6068"/><rect x="20" y="55" width="13" height="1" fill="#ffffff" opacity="0.8"/><rect x="3" y="62" width="12" height="1" fill="#5a6068"/><rect x="3" y="63" width="12" height="1" fill="#ffffff" opacity="0.8"/><rect x="20" y="62" width="13" height="1" fill="#5a6068"/><rect x="20" y="63" width="13" height="1" fill="#ffffff" opacity="0.8"/><rect x="3" y="69" width="12" height="1" fill="#5a6068"/><rect x="3" y="70" width="12" height="1" fill="#ffffff" opacity="0.8"/><rect x="20" y="69" width="13" height="1" fill="#5a6068"/><rect x="20" y="70" width="13" height="1" fill="#ffffff" opacity="0.8"/><rect x="3" y="77" width="12" height="1" fill="#5a6068"/><rect x="3" y="78" width="12" height="1" fill="#ffffff" opacity="0.8"/><rect x="20" y="77" width="13" height="1" fill="#5a6068"/><rect x="20" y="78" width="13" height="1" fill="#ffffff" opacity="0.8"/><rect x="3" y="84" width="12" height="1" fill="#5a6068"/><rect x="3" y="85" width="12" height="1" fill="#ffffff" opacity="0.8"/><rect x="20" y="84" width="13" height="1" fill="#5a6068"/><rect x="20" y="85" width="13" height="1" fill="#ffffff" opacity="0.8"/><rect x="3" y="92" width="12" height="1" fill="#5a6068"/><rect x="3" y="93" width="12" height="1" fill="#ffffff" opacity="0.8"/><rect x="20" y="92" width="13" height="1" fill="#5a6068"/><rect x="20" y="93" width="13" height="1" fill="#ffffff" opacity="0.8"/><rect x="3" y="99" width="12" height="1" fill="#5a6068"/><rect x="3" y="100" width="12" height="1" fill="#ffffff" opacity="0.8"/><rect x="20" y="99" width="13" height="1" fill="#5a6068"/><rect x="20" y="100" width="13" height="1" fill="#ffffff" opacity="0.8"/><rect x="3" y="107" width="12" height="1" fill="#5a6068"/><rect x="3" y="108" width="12" height="1" fill="#ffffff" opacity="0.8"/><rect x="20" y="107" width="13" height="1" fill="#5a6068"/><rect x="20" y="108" width="13" height="1" fill="#ffffff" opacity="0.8"/><rect x="3" y="114" width="12" height="1" fill="#5a6068"/><rect x="3" y="115" width="12" height="1" fill="#ffffff" opacity="0.8"/><rect x="20" y="114" width="13" height="1" fill="#5a6068"/><rect x="20" y="115" width="13" height="1" fill="#ffffff" opacity="0.8"/><rect x="3" y="122" width="12" height="1" fill="#5a6068"/><rect x="3" y="123" width="12" height="1" fill="#ffffff" opacity="0.8"/><rect x="20" y="122" width="13" height="1" fill="#5a6068"/><rect x="20" y="123" width="13" height="1" fill="#ffffff" opacity="0.8"/><rect x="3" y="129" width="12" height="1" fill="#5a6068"/><rect x="3" y="130" width="12" height="1" fill="#ffffff" opacity="0.8"/><rect x="20" y="129" width="13" height="1" fill="#5a6068"/><rect x="20" y="130" width="13" height="1" fill="#ffffff" opacity="0.8"/><rect x="3" y="137" width="12" height="1" fill="#5a6068"/><rect x="3" y="138" width="12" height="1" fill="#ffffff" opacity="0.8"/><rect x="20" y="137" width="13" height="1" fill="#5a6068"/><rect x="20" y="138" width="13" height="1" fill="#ffffff" opacity="0.8"/><rect x="3" y="144" width="12" height="1" fill="#5a6068"/><rect x="3" y="145" width="12" height="1" fill="#ffffff" opacity="0.8"/><rect x="20" y="144" width="13" height="1" fill="#5a6068"/><rect x="20" y="145" width="13" height="1" fill="#ffffff" opacity="0.8"/><rect x="16" y="1" width="4" height="165" fill="#eceef0"/>
<rect x="15" y="0" width="1.3" height="140" fill="#000"/><rect x="15" y="0" width="4" height="1.5" fill="#000"/></svg>
<svg style="position:absolute;left:594px;top:699px;" width="22" height="36" viewBox="0 0 22 36"><rect x="4" y="4" width="17" height="31" rx="5.5" fill="#3a4250" opacity="0.55" filter="url(#fth)"/>
<rect x="2.5" y="2.5" width="17" height="30" rx="5" fill="url(#gthumb)" stroke="#50545a" stroke-width="1.2"/>
<rect x="4.5" y="16.5" width="13" height="3.5" fill="#a8b4c4" opacity="0.5"/><rect x="5" y="17.3" width="12" height="1.8" fill="#34507c"/></svg>
<svg style="position:absolute;left:597px;top:733px;" width="16" height="16" viewBox="0 0 16 16"><path d="M1 5 L8 13.5 L15 5" fill="none" stroke="#7a7e84" stroke-width="1.5"/>
<path d="M8 10 L14.5 1.5 L1.5 1.5 Z" fill="url(#garr)" stroke="#707478" stroke-width="1.2" stroke-linejoin="round"/></svg>
<div style="left:623px;top:439px;width:34px;height:313px;background:linear-gradient(90deg,#fdfeff 0%,#e8eefa 35%,#c6d8f6 65%,#aec8f2 100%);"></div>
<div style="left:657px;top:439px;width:2px;height:314px;background:#a4b4cc;"></div>
<div style="left:623px;top:752px;width:34px;height:1px;background:#8494a8;"></div>
<span class="t" style="left:441px;width:400px;text-align:center;top:443.84px;font-size:12px;line-height:12px;font-weight:400;color:#000;transform:scaleX(0.9);">17</span>
<div style="left:626px;top:459px;width:29px;height:17px;box-sizing:border-box;border-top:2px solid #7c7c7c;border-left:2px solid #7c7c7c;border-right:1px solid #fafafa;border-bottom:1px solid #fafafa;background:#000;"></div>
<span class="t" style="left:250.5px;width:400px;text-align:right;top:464.54px;font-size:10px;line-height:10px;font-weight:400;color:#fff;transform-origin:100% 0;">0</span>
<div style="left:626px;top:479px;width:29px;height:53px;box-sizing:border-box;border-top:1px solid #7a7a7a;border-left:2px solid #7a7a7a;border-right:1px solid #fafafa;border-bottom:2px solid #fafafa;background:#000;"></div>
<div style="left:628px;top:480px;width:26px;height:26px;background:#aacaba;"></div>
<div class="t" style="left:629px;top:480px;font-size:12.2px;line-height:13px;color:#000010;transform:scaleX(0.78);-webkit-text-stroke:0.3px #000010;transform-origin:0 0;white-space:pre">rgb.6
Gre...</div>
<svg style="position:absolute;left:633px;top:537px;" width="16" height="16" viewBox="0 0 16 16"><path d="M1 10.5 L8 1.5 L15 10.5" fill="none" stroke="#7a7e84" stroke-width="1.5"/>
<path d="M8 5 L14.5 13.5 L1.5 13.5 Z" fill="url(#garr)" stroke="#707478" stroke-width="1.2" stroke-linejoin="round"/></svg>
<svg style="position:absolute;left:623px;top:569px;" width="34" height="166" viewBox="0 0 34 166"><rect x="3" y="2" width="12" height="1" fill="#5a6068"/><rect x="3" y="3" width="12" height="1" fill="#ffffff" opacity="0.8"/><rect x="20" y="2" width="13" height="1" fill="#5a6068"/><rect x="20" y="3" width="13" height="1" fill="#ffffff" opacity="0.8"/><rect x="3" y="9" width="12" height="1" fill="#5a6068"/><rect x="3" y="10" width="12" height="1" fill="#ffffff" opacity="0.8"/><rect x="20" y="9" width="13" height="1" fill="#5a6068"/><rect x="20" y="10" width="13" height="1" fill="#ffffff" opacity="0.8"/><rect x="3" y="17" width="12" height="1" fill="#5a6068"/><rect x="3" y="18" width="12" height="1" fill="#ffffff" opacity="0.8"/><rect x="20" y="17" width="13" height="1" fill="#5a6068"/><rect x="20" y="18" width="13" height="1" fill="#ffffff" opacity="0.8"/><rect x="3" y="24" width="12" height="1" fill="#5a6068"/><rect x="3" y="25" width="12" height="1" fill="#ffffff" opacity="0.8"/><rect x="20" y="24" width="13" height="1" fill="#5a6068"/><rect x="20" y="25" width="13" height="1" fill="#ffffff" opacity="0.8"/><rect x="3" y="32" width="12" height="1" fill="#5a6068"/><rect x="3" y="33" width="12" height="1" fill="#ffffff" opacity="0.8"/><rect x="20" y="32" width="13" height="1" fill="#5a6068"/><rect x="20" y="33" width="13" height="1" fill="#ffffff" opacity="0.8"/><rect x="3" y="39" width="12" height="1" fill="#5a6068"/><rect x="3" y="40" width="12" height="1" fill="#ffffff" opacity="0.8"/><rect x="20" y="39" width="13" height="1" fill="#5a6068"/><rect x="20" y="40" width="13" height="1" fill="#ffffff" opacity="0.8"/><rect x="3" y="47" width="12" height="1" fill="#5a6068"/><rect x="3" y="48" width="12" height="1" fill="#ffffff" opacity="0.8"/><rect x="20" y="47" width="13" height="1" fill="#5a6068"/><rect x="20" y="48" width="13" height="1" fill="#ffffff" opacity="0.8"/><rect x="3" y="54" width="12" height="1" fill="#5a6068"/><rect x="3" y="55" width="12" height="1" fill="#ffffff" opacity="0.8"/><rect x="20" y="54" width="13" height="1" fill="#5a6068"/><rect x="20" y="55" width="13" height="1" fill="#ffffff" opacity="0.8"/><rect x="3" y="62" width="12" height="1" fill="#5a6068"/><rect x="3" y="63" width="12" height="1" fill="#ffffff" opacity="0.8"/><rect x="20" y="62" width="13" height="1" fill="#5a6068"/><rect x="20" y="63" width="13" height="1" fill="#ffffff" opacity="0.8"/><rect x="3" y="69" width="12" height="1" fill="#5a6068"/><rect x="3" y="70" width="12" height="1" fill="#ffffff" opacity="0.8"/><rect x="20" y="69" width="13" height="1" fill="#5a6068"/><rect x="20" y="70" width="13" height="1" fill="#ffffff" opacity="0.8"/><rect x="3" y="77" width="12" height="1" fill="#5a6068"/><rect x="3" y="78" width="12" height="1" fill="#ffffff" opacity="0.8"/><rect x="20" y="77" width="13" height="1" fill="#5a6068"/><rect x="20" y="78" width="13" height="1" fill="#ffffff" opacity="0.8"/><rect x="3" y="84" width="12" height="1" fill="#5a6068"/><rect x="3" y="85" width="12" height="1" fill="#ffffff" opacity="0.8"/><rect x="20" y="84" width="13" height="1" fill="#5a6068"/><rect x="20" y="85" width="13" height="1" fill="#ffffff" opacity="0.8"/><rect x="3" y="92" width="12" height="1" fill="#5a6068"/><rect x="3" y="93" width="12" height="1" fill="#ffffff" opacity="0.8"/><rect x="20" y="92" width="13" height="1" fill="#5a6068"/><rect x="20" y="93" width="13" height="1" fill="#ffffff" opacity="0.8"/><rect x="3" y="99" width="12" height="1" fill="#5a6068"/><rect x="3" y="100" width="12" height="1" fill="#ffffff" opacity="0.8"/><rect x="20" y="99" width="13" height="1" fill="#5a6068"/><rect x="20" y="100" width="13" height="1" fill="#ffffff" opacity="0.8"/><rect x="3" y="107" width="12" height="1" fill="#5a6068"/><rect x="3" y="108" width="12" height="1" fill="#ffffff" opacity="0.8"/><rect x="20" y="107" width="13" height="1" fill="#5a6068"/><rect x="20" y="108" width="13" height="1" fill="#ffffff" opacity="0.8"/><rect x="3" y="114" width="12" height="1" fill="#5a6068"/><rect x="3" y="115" width="12" height="1" fill="#ffffff" opacity="0.8"/><rect x="20" y="114" width="13" height="1" fill="#5a6068"/><rect x="20" y="115" width="13" height="1" fill="#ffffff" opacity="0.8"/><rect x="3" y="122" width="12" height="1" fill="#5a6068"/><rect x="3" y="123" width="12" height="1" fill="#ffffff" opacity="0.8"/><rect x="20" y="122" width="13" height="1" fill="#5a6068"/><rect x="20" y="123" width="13" height="1" fill="#ffffff" opacity="0.8"/><rect x="3" y="129" width="12" height="1" fill="#5a6068"/><rect x="3" y="130" width="12" height="1" fill="#ffffff" opacity="0.8"/><rect x="20" y="129" width="13" height="1" fill="#5a6068"/><rect x="20" y="130" width="13" height="1" fill="#ffffff" opacity="0.8"/><rect x="3" y="137" width="12" height="1" fill="#5a6068"/><rect x="3" y="138" width="12" height="1" fill="#ffffff" opacity="0.8"/><rect x="20" y="137" width="13" height="1" fill="#5a6068"/><rect x="20" y="138" width="13" height="1" fill="#ffffff" opacity="0.8"/><rect x="3" y="144" width="12" height="1" fill="#5a6068"/><rect x="3" y="145" width="12" height="1" fill="#ffffff" opacity="0.8"/><rect x="20" y="144" width="13" height="1" fill="#5a6068"/><rect x="20" y="145" width="13" height="1" fill="#ffffff" opacity="0.8"/><rect x="16" y="1" width="4" height="165" fill="#eceef0"/>
<rect x="15" y="0" width="1.3" height="140" fill="#000"/><rect x="15" y="0" width="4" height="1.5" fill="#000"/></svg>
<svg style="position:absolute;left:630px;top:699px;" width="22" height="36" viewBox="0 0 22 36"><rect x="4" y="4" width="17" height="31" rx="5.5" fill="#3a4250" opacity="0.55" filter="url(#fth)"/>
<rect x="2.5" y="2.5" width="17" height="30" rx="5" fill="url(#gthumb)" stroke="#50545a" stroke-width="1.2"/>
<rect x="4.5" y="16.5" width="13" height="3.5" fill="#a8b4c4" opacity="0.5"/><rect x="5" y="17.3" width="12" height="1.8" fill="#34507c"/></svg>
<svg style="position:absolute;left:633px;top:733px;" width="16" height="16" viewBox="0 0 16 16"><path d="M1 5 L8 13.5 L15 5" fill="none" stroke="#7a7e84" stroke-width="1.5"/>
<path d="M8 10 L14.5 1.5 L1.5 1.5 Z" fill="url(#garr)" stroke="#707478" stroke-width="1.2" stroke-linejoin="round"/></svg>
<div style="left:659px;top:439px;width:34px;height:313px;background:linear-gradient(90deg,#fdfeff 0%,#e8eefa 35%,#c6d8f6 65%,#aec8f2 100%);"></div>
<div style="left:693px;top:439px;width:2px;height:314px;background:#a4b4cc;"></div>
<div style="left:659px;top:752px;width:34px;height:1px;background:#8494a8;"></div>
<span class="t" style="left:477px;width:400px;text-align:center;top:443.84px;font-size:12px;line-height:12px;font-weight:400;color:#000;transform:scaleX(0.9);">18</span>
<div style="left:662px;top:459px;width:29px;height:17px;box-sizing:border-box;border-top:2px solid #7c7c7c;border-left:2px solid #7c7c7c;border-right:1px solid #fafafa;border-bottom:1px solid #fafafa;background:#000;"></div>
<span class="t" style="left:286.5px;width:400px;text-align:right;top:464.54px;font-size:10px;line-height:10px;font-weight:400;color:#fff;transform-origin:100% 0;">0</span>
<div style="left:662px;top:479px;width:29px;height:53px;box-sizing:border-box;border-top:1px solid #7a7a7a;border-left:2px solid #7a7a7a;border-right:1px solid #fafafa;border-bottom:2px solid #fafafa;background:#000;"></div>
<div style="left:664px;top:480px;width:26px;height:26px;background:#aacaba;"></div>
<div class="t" style="left:665px;top:480px;font-size:12.2px;line-height:13px;color:#000010;transform:scaleX(0.78);-webkit-text-stroke:0.3px #000010;transform-origin:0 0;white-space:pre">rgb.6
Blue</div>
<svg style="position:absolute;left:669px;top:537px;" width="16" height="16" viewBox="0 0 16 16"><path d="M1 10.5 L8 1.5 L15 10.5" fill="none" stroke="#7a7e84" stroke-width="1.5"/>
<path d="M8 5 L14.5 13.5 L1.5 13.5 Z" fill="url(#garr)" stroke="#707478" stroke-width="1.2" stroke-linejoin="round"/></svg>
<svg style="position:absolute;left:659px;top:569px;" width="34" height="166" viewBox="0 0 34 166"><rect x="3" y="2" width="12" height="1" fill="#5a6068"/><rect x="3" y="3" width="12" height="1" fill="#ffffff" opacity="0.8"/><rect x="20" y="2" width="13" height="1" fill="#5a6068"/><rect x="20" y="3" width="13" height="1" fill="#ffffff" opacity="0.8"/><rect x="3" y="9" width="12" height="1" fill="#5a6068"/><rect x="3" y="10" width="12" height="1" fill="#ffffff" opacity="0.8"/><rect x="20" y="9" width="13" height="1" fill="#5a6068"/><rect x="20" y="10" width="13" height="1" fill="#ffffff" opacity="0.8"/><rect x="3" y="17" width="12" height="1" fill="#5a6068"/><rect x="3" y="18" width="12" height="1" fill="#ffffff" opacity="0.8"/><rect x="20" y="17" width="13" height="1" fill="#5a6068"/><rect x="20" y="18" width="13" height="1" fill="#ffffff" opacity="0.8"/><rect x="3" y="24" width="12" height="1" fill="#5a6068"/><rect x="3" y="25" width="12" height="1" fill="#ffffff" opacity="0.8"/><rect x="20" y="24" width="13" height="1" fill="#5a6068"/><rect x="20" y="25" width="13" height="1" fill="#ffffff" opacity="0.8"/><rect x="3" y="32" width="12" height="1" fill="#5a6068"/><rect x="3" y="33" width="12" height="1" fill="#ffffff" opacity="0.8"/><rect x="20" y="32" width="13" height="1" fill="#5a6068"/><rect x="20" y="33" width="13" height="1" fill="#ffffff" opacity="0.8"/><rect x="3" y="39" width="12" height="1" fill="#5a6068"/><rect x="3" y="40" width="12" height="1" fill="#ffffff" opacity="0.8"/><rect x="20" y="39" width="13" height="1" fill="#5a6068"/><rect x="20" y="40" width="13" height="1" fill="#ffffff" opacity="0.8"/><rect x="3" y="47" width="12" height="1" fill="#5a6068"/><rect x="3" y="48" width="12" height="1" fill="#ffffff" opacity="0.8"/><rect x="20" y="47" width="13" height="1" fill="#5a6068"/><rect x="20" y="48" width="13" height="1" fill="#ffffff" opacity="0.8"/><rect x="3" y="54" width="12" height="1" fill="#5a6068"/><rect x="3" y="55" width="12" height="1" fill="#ffffff" opacity="0.8"/><rect x="20" y="54" width="13" height="1" fill="#5a6068"/><rect x="20" y="55" width="13" height="1" fill="#ffffff" opacity="0.8"/><rect x="3" y="62" width="12" height="1" fill="#5a6068"/><rect x="3" y="63" width="12" height="1" fill="#ffffff" opacity="0.8"/><rect x="20" y="62" width="13" height="1" fill="#5a6068"/><rect x="20" y="63" width="13" height="1" fill="#ffffff" opacity="0.8"/><rect x="3" y="69" width="12" height="1" fill="#5a6068"/><rect x="3" y="70" width="12" height="1" fill="#ffffff" opacity="0.8"/><rect x="20" y="69" width="13" height="1" fill="#5a6068"/><rect x="20" y="70" width="13" height="1" fill="#ffffff" opacity="0.8"/><rect x="3" y="77" width="12" height="1" fill="#5a6068"/><rect x="3" y="78" width="12" height="1" fill="#ffffff" opacity="0.8"/><rect x="20" y="77" width="13" height="1" fill="#5a6068"/><rect x="20" y="78" width="13" height="1" fill="#ffffff" opacity="0.8"/><rect x="3" y="84" width="12" height="1" fill="#5a6068"/><rect x="3" y="85" width="12" height="1" fill="#ffffff" opacity="0.8"/><rect x="20" y="84" width="13" height="1" fill="#5a6068"/><rect x="20" y="85" width="13" height="1" fill="#ffffff" opacity="0.8"/><rect x="3" y="92" width="12" height="1" fill="#5a6068"/><rect x="3" y="93" width="12" height="1" fill="#ffffff" opacity="0.8"/><rect x="20" y="92" width="13" height="1" fill="#5a6068"/><rect x="20" y="93" width="13" height="1" fill="#ffffff" opacity="0.8"/><rect x="3" y="99" width="12" height="1" fill="#5a6068"/><rect x="3" y="100" width="12" height="1" fill="#ffffff" opacity="0.8"/><rect x="20" y="99" width="13" height="1" fill="#5a6068"/><rect x="20" y="100" width="13" height="1" fill="#ffffff" opacity="0.8"/><rect x="3" y="107" width="12" height="1" fill="#5a6068"/><rect x="3" y="108" width="12" height="1" fill="#ffffff" opacity="0.8"/><rect x="20" y="107" width="13" height="1" fill="#5a6068"/><rect x="20" y="108" width="13" height="1" fill="#ffffff" opacity="0.8"/><rect x="3" y="114" width="12" height="1" fill="#5a6068"/><rect x="3" y="115" width="12" height="1" fill="#ffffff" opacity="0.8"/><rect x="20" y="114" width="13" height="1" fill="#5a6068"/><rect x="20" y="115" width="13" height="1" fill="#ffffff" opacity="0.8"/><rect x="3" y="122" width="12" height="1" fill="#5a6068"/><rect x="3" y="123" width="12" height="1" fill="#ffffff" opacity="0.8"/><rect x="20" y="122" width="13" height="1" fill="#5a6068"/><rect x="20" y="123" width="13" height="1" fill="#ffffff" opacity="0.8"/><rect x="3" y="129" width="12" height="1" fill="#5a6068"/><rect x="3" y="130" width="12" height="1" fill="#ffffff" opacity="0.8"/><rect x="20" y="129" width="13" height="1" fill="#5a6068"/><rect x="20" y="130" width="13" height="1" fill="#ffffff" opacity="0.8"/><rect x="3" y="137" width="12" height="1" fill="#5a6068"/><rect x="3" y="138" width="12" height="1" fill="#ffffff" opacity="0.8"/><rect x="20" y="137" width="13" height="1" fill="#5a6068"/><rect x="20" y="138" width="13" height="1" fill="#ffffff" opacity="0.8"/><rect x="3" y="144" width="12" height="1" fill="#5a6068"/><rect x="3" y="145" width="12" height="1" fill="#ffffff" opacity="0.8"/><rect x="20" y="144" width="13" height="1" fill="#5a6068"/><rect x="20" y="145" width="13" height="1" fill="#ffffff" opacity="0.8"/><rect x="16" y="1" width="4" height="165" fill="#eceef0"/>
<rect x="15" y="0" width="1.3" height="140" fill="#000"/><rect x="15" y="0" width="4" height="1.5" fill="#000"/></svg>
<svg style="position:absolute;left:666px;top:699px;" width="22" height="36" viewBox="0 0 22 36"><rect x="4" y="4" width="17" height="31" rx="5.5" fill="#3a4250" opacity="0.55" filter="url(#fth)"/>
<rect x="2.5" y="2.5" width="17" height="30" rx="5" fill="url(#gthumb)" stroke="#50545a" stroke-width="1.2"/>
<rect x="4.5" y="16.5" width="13" height="3.5" fill="#a8b4c4" opacity="0.5"/><rect x="5" y="17.3" width="12" height="1.8" fill="#34507c"/></svg>
<svg style="position:absolute;left:669px;top:733px;" width="16" height="16" viewBox="0 0 16 16"><path d="M1 5 L8 13.5 L15 5" fill="none" stroke="#7a7e84" stroke-width="1.5"/>
<path d="M8 10 L14.5 1.5 L1.5 1.5 Z" fill="url(#garr)" stroke="#707478" stroke-width="1.2" stroke-linejoin="round"/></svg>
<div style="left:695px;top:439px;width:34px;height:313px;background:linear-gradient(90deg,#fdfeff 0%,#e8eefa 35%,#c6d8f6 65%,#aec8f2 100%);"></div>
<div style="left:729px;top:439px;width:2px;height:314px;background:#a4b4cc;"></div>
<div style="left:695px;top:752px;width:34px;height:1px;background:#8494a8;"></div>
<span class="t" style="left:513px;width:400px;text-align:center;top:443.84px;font-size:12px;line-height:12px;font-weight:400;color:#000;transform:scaleX(0.9);">19</span>
<div style="left:698px;top:459px;width:29px;height:17px;box-sizing:border-box;border-top:2px solid #7c7c7c;border-left:2px solid #7c7c7c;border-right:1px solid #fafafa;border-bottom:1px solid #fafafa;background:#000;"></div>
<span class="t" style="left:322.5px;width:400px;text-align:right;top:464.54px;font-size:10px;line-height:10px;font-weight:400;color:#fff;transform-origin:100% 0;">0</span>
<div style="left:698px;top:479px;width:29px;height:53px;box-sizing:border-box;border-top:1px solid #7a7a7a;border-left:2px solid #7a7a7a;border-right:1px solid #fafafa;border-bottom:2px solid #fafafa;background:#000;"></div>
<div style="left:700px;top:480px;width:26px;height:26px;background:#f8ba8a;"></div>
<div class="t" style="left:701px;top:480px;font-size:12.2px;line-height:13px;color:#000010;transform:scaleX(0.78);-webkit-text-stroke:0.3px #000010;transform-origin:0 0;white-space:pre">rgb.7
Red</div>
<svg style="position:absolute;left:705px;top:537px;" width="16" height="16" viewBox="0 0 16 16"><path d="M1 10.5 L8 1.5 L15 10.5" fill="none" stroke="#7a7e84" stroke-width="1.5"/>
<path d="M8 5 L14.5 13.5 L1.5 13.5 Z" fill="url(#garr)" stroke="#707478" stroke-width="1.2" stroke-linejoin="round"/></svg>
<svg style="position:absolute;left:695px;top:569px;" width="34" height="166" viewBox="0 0 34 166"><rect x="3" y="2" width="12" height="1" fill="#5a6068"/><rect x="3" y="3" width="12" height="1" fill="#ffffff" opacity="0.8"/><rect x="20" y="2" width="13" height="1" fill="#5a6068"/><rect x="20" y="3" width="13" height="1" fill="#ffffff" opacity="0.8"/><rect x="3" y="9" width="12" height="1" fill="#5a6068"/><rect x="3" y="10" width="12" height="1" fill="#ffffff" opacity="0.8"/><rect x="20" y="9" width="13" height="1" fill="#5a6068"/><rect x="20" y="10" width="13" height="1" fill="#ffffff" opacity="0.8"/><rect x="3" y="17" width="12" height="1" fill="#5a6068"/><rect x="3" y="18" width="12" height="1" fill="#ffffff" opacity="0.8"/><rect x="20" y="17" width="13" height="1" fill="#5a6068"/><rect x="20" y="18" width="13" height="1" fill="#ffffff" opacity="0.8"/><rect x="3" y="24" width="12" height="1" fill="#5a6068"/><rect x="3" y="25" width="12" height="1" fill="#ffffff" opacity="0.8"/><rect x="20" y="24" width="13" height="1" fill="#5a6068"/><rect x="20" y="25" width="13" height="1" fill="#ffffff" opacity="0.8"/><rect x="3" y="32" width="12" height="1" fill="#5a6068"/><rect x="3" y="33" width="12" height="1" fill="#ffffff" opacity="0.8"/><rect x="20" y="32" width="13" height="1" fill="#5a6068"/><rect x="20" y="33" width="13" height="1" fill="#ffffff" opacity="0.8"/><rect x="3" y="39" width="12" height="1" fill="#5a6068"/><rect x="3" y="40" width="12" height="1" fill="#ffffff" opacity="0.8"/><rect x="20" y="39" width="13" height="1" fill="#5a6068"/><rect x="20" y="40" width="13" height="1" fill="#ffffff" opacity="0.8"/><rect x="3" y="47" width="12" height="1" fill="#5a6068"/><rect x="3" y="48" width="12" height="1" fill="#ffffff" opacity="0.8"/><rect x="20" y="47" width="13" height="1" fill="#5a6068"/><rect x="20" y="48" width="13" height="1" fill="#ffffff" opacity="0.8"/><rect x="3" y="54" width="12" height="1" fill="#5a6068"/><rect x="3" y="55" width="12" height="1" fill="#ffffff" opacity="0.8"/><rect x="20" y="54" width="13" height="1" fill="#5a6068"/><rect x="20" y="55" width="13" height="1" fill="#ffffff" opacity="0.8"/><rect x="3" y="62" width="12" height="1" fill="#5a6068"/><rect x="3" y="63" width="12" height="1" fill="#ffffff" opacity="0.8"/><rect x="20" y="62" width="13" height="1" fill="#5a6068"/><rect x="20" y="63" width="13" height="1" fill="#ffffff" opacity="0.8"/><rect x="3" y="69" width="12" height="1" fill="#5a6068"/><rect x="3" y="70" width="12" height="1" fill="#ffffff" opacity="0.8"/><rect x="20" y="69" width="13" height="1" fill="#5a6068"/><rect x="20" y="70" width="13" height="1" fill="#ffffff" opacity="0.8"/><rect x="3" y="77" width="12" height="1" fill="#5a6068"/><rect x="3" y="78" width="12" height="1" fill="#ffffff" opacity="0.8"/><rect x="20" y="77" width="13" height="1" fill="#5a6068"/><rect x="20" y="78" width="13" height="1" fill="#ffffff" opacity="0.8"/><rect x="3" y="84" width="12" height="1" fill="#5a6068"/><rect x="3" y="85" width="12" height="1" fill="#ffffff" opacity="0.8"/><rect x="20" y="84" width="13" height="1" fill="#5a6068"/><rect x="20" y="85" width="13" height="1" fill="#ffffff" opacity="0.8"/><rect x="3" y="92" width="12" height="1" fill="#5a6068"/><rect x="3" y="93" width="12" height="1" fill="#ffffff" opacity="0.8"/><rect x="20" y="92" width="13" height="1" fill="#5a6068"/><rect x="20" y="93" width="13" height="1" fill="#ffffff" opacity="0.8"/><rect x="3" y="99" width="12" height="1" fill="#5a6068"/><rect x="3" y="100" width="12" height="1" fill="#ffffff" opacity="0.8"/><rect x="20" y="99" width="13" height="1" fill="#5a6068"/><rect x="20" y="100" width="13" height="1" fill="#ffffff" opacity="0.8"/><rect x="3" y="107" width="12" height="1" fill="#5a6068"/><rect x="3" y="108" width="12" height="1" fill="#ffffff" opacity="0.8"/><rect x="20" y="107" width="13" height="1" fill="#5a6068"/><rect x="20" y="108" width="13" height="1" fill="#ffffff" opacity="0.8"/><rect x="3" y="114" width="12" height="1" fill="#5a6068"/><rect x="3" y="115" width="12" height="1" fill="#ffffff" opacity="0.8"/><rect x="20" y="114" width="13" height="1" fill="#5a6068"/><rect x="20" y="115" width="13" height="1" fill="#ffffff" opacity="0.8"/><rect x="3" y="122" width="12" height="1" fill="#5a6068"/><rect x="3" y="123" width="12" height="1" fill="#ffffff" opacity="0.8"/><rect x="20" y="122" width="13" height="1" fill="#5a6068"/><rect x="20" y="123" width="13" height="1" fill="#ffffff" opacity="0.8"/><rect x="3" y="129" width="12" height="1" fill="#5a6068"/><rect x="3" y="130" width="12" height="1" fill="#ffffff" opacity="0.8"/><rect x="20" y="129" width="13" height="1" fill="#5a6068"/><rect x="20" y="130" width="13" height="1" fill="#ffffff" opacity="0.8"/><rect x="3" y="137" width="12" height="1" fill="#5a6068"/><rect x="3" y="138" width="12" height="1" fill="#ffffff" opacity="0.8"/><rect x="20" y="137" width="13" height="1" fill="#5a6068"/><rect x="20" y="138" width="13" height="1" fill="#ffffff" opacity="0.8"/><rect x="3" y="144" width="12" height="1" fill="#5a6068"/><rect x="3" y="145" width="12" height="1" fill="#ffffff" opacity="0.8"/><rect x="20" y="144" width="13" height="1" fill="#5a6068"/><rect x="20" y="145" width="13" height="1" fill="#ffffff" opacity="0.8"/><rect x="16" y="1" width="4" height="165" fill="#eceef0"/>
<rect x="15" y="0" width="1.3" height="140" fill="#000"/><rect x="15" y="0" width="4" height="1.5" fill="#000"/></svg>
<svg style="position:absolute;left:702px;top:699px;" width="22" height="36" viewBox="0 0 22 36"><rect x="4" y="4" width="17" height="31" rx="5.5" fill="#3a4250" opacity="0.55" filter="url(#fth)"/>
<rect x="2.5" y="2.5" width="17" height="30" rx="5" fill="url(#gthumb)" stroke="#50545a" stroke-width="1.2"/>
<rect x="4.5" y="16.5" width="13" height="3.5" fill="#a8b4c4" opacity="0.5"/><rect x="5" y="17.3" width="12" height="1.8" fill="#34507c"/></svg>
<svg style="position:absolute;left:705px;top:733px;" width="16" height="16" viewBox="0 0 16 16"><path d="M1 5 L8 13.5 L15 5" fill="none" stroke="#7a7e84" stroke-width="1.5"/>
<path d="M8 10 L14.5 1.5 L1.5 1.5 Z" fill="url(#garr)" stroke="#707478" stroke-width="1.2" stroke-linejoin="round"/></svg>
<div style="left:731px;top:439px;width:34px;height:313px;background:linear-gradient(90deg,#fdfeff 0%,#e8eefa 35%,#c6d8f6 65%,#aec8f2 100%);"></div>
<div style="left:765px;top:439px;width:2px;height:314px;background:#a4b4cc;"></div>
<div style="left:731px;top:752px;width:34px;height:1px;background:#8494a8;"></div>
<span class="t" style="left:549px;width:400px;text-align:center;top:443.84px;font-size:12px;line-height:12px;font-weight:400;color:#000;transform:scaleX(0.9);">20</span>
<div style="left:734px;top:459px;width:29px;height:17px;box-sizing:border-box;border-top:2px solid #7c7c7c;border-left:2px solid #7c7c7c;border-right:1px solid #fafafa;border-bottom:1px solid #fafafa;background:#000;"></div>
<span class="t" style="left:358.5px;width:400px;text-align:right;top:464.54px;font-size:10px;line-height:10px;font-weight:400;color:#fff;transform-origin:100% 0;">0</span>
<div style="left:734px;top:479px;width:29px;height:53px;box-sizing:border-box;border-top:1px solid #7a7a7a;border-left:2px solid #7a7a7a;border-right:1px solid #fafafa;border-bottom:2px solid #fafafa;background:#000;"></div>
<div style="left:736px;top:480px;width:26px;height:26px;background:#f8ba8a;"></div>
<div class="t" style="left:737px;top:480px;font-size:12.2px;line-height:13px;color:#000010;transform:scaleX(0.78);-webkit-text-stroke:0.3px #000010;transform-origin:0 0;white-space:pre">rgb.7
Gre...</div>
<svg style="position:absolute;left:741px;top:537px;" width="16" height="16" viewBox="0 0 16 16"><path d="M1 10.5 L8 1.5 L15 10.5" fill="none" stroke="#7a7e84" stroke-width="1.5"/>
<path d="M8 5 L14.5 13.5 L1.5 13.5 Z" fill="url(#garr)" stroke="#707478" stroke-width="1.2" stroke-linejoin="round"/></svg>
<svg style="position:absolute;left:731px;top:569px;" width="34" height="166" viewBox="0 0 34 166"><rect x="3" y="2" width="12" height="1" fill="#5a6068"/><rect x="3" y="3" width="12" height="1" fill="#ffffff" opacity="0.8"/><rect x="20" y="2" width="13" height="1" fill="#5a6068"/><rect x="20" y="3" width="13" height="1" fill="#ffffff" opacity="0.8"/><rect x="3" y="9" width="12" height="1" fill="#5a6068"/><rect x="3" y="10" width="12" height="1" fill="#ffffff" opacity="0.8"/><rect x="20" y="9" width="13" height="1" fill="#5a6068"/><rect x="20" y="10" width="13" height="1" fill="#ffffff" opacity="0.8"/><rect x="3" y="17" width="12" height="1" fill="#5a6068"/><rect x="3" y="18" width="12" height="1" fill="#ffffff" opacity="0.8"/><rect x="20" y="17" width="13" height="1" fill="#5a6068"/><rect x="20" y="18" width="13" height="1" fill="#ffffff" opacity="0.8"/><rect x="3" y="24" width="12" height="1" fill="#5a6068"/><rect x="3" y="25" width="12" height="1" fill="#ffffff" opacity="0.8"/><rect x="20" y="24" width="13" height="1" fill="#5a6068"/><rect x="20" y="25" width="13" height="1" fill="#ffffff" opacity="0.8"/><rect x="3" y="32" width="12" height="1" fill="#5a6068"/><rect x="3" y="33" width="12" height="1" fill="#ffffff" opacity="0.8"/><rect x="20" y="32" width="13" height="1" fill="#5a6068"/><rect x="20" y="33" width="13" height="1" fill="#ffffff" opacity="0.8"/><rect x="3" y="39" width="12" height="1" fill="#5a6068"/><rect x="3" y="40" width="12" height="1" fill="#ffffff" opacity="0.8"/><rect x="20" y="39" width="13" height="1" fill="#5a6068"/><rect x="20" y="40" width="13" height="1" fill="#ffffff" opacity="0.8"/><rect x="3" y="47" width="12" height="1" fill="#5a6068"/><rect x="3" y="48" width="12" height="1" fill="#ffffff" opacity="0.8"/><rect x="20" y="47" width="13" height="1" fill="#5a6068"/><rect x="20" y="48" width="13" height="1" fill="#ffffff" opacity="0.8"/><rect x="3" y="54" width="12" height="1" fill="#5a6068"/><rect x="3" y="55" width="12" height="1" fill="#ffffff" opacity="0.8"/><rect x="20" y="54" width="13" height="1" fill="#5a6068"/><rect x="20" y="55" width="13" height="1" fill="#ffffff" opacity="0.8"/><rect x="3" y="62" width="12" height="1" fill="#5a6068"/><rect x="3" y="63" width="12" height="1" fill="#ffffff" opacity="0.8"/><rect x="20" y="62" width="13" height="1" fill="#5a6068"/><rect x="20" y="63" width="13" height="1" fill="#ffffff" opacity="0.8"/><rect x="3" y="69" width="12" height="1" fill="#5a6068"/><rect x="3" y="70" width="12" height="1" fill="#ffffff" opacity="0.8"/><rect x="20" y="69" width="13" height="1" fill="#5a6068"/><rect x="20" y="70" width="13" height="1" fill="#ffffff" opacity="0.8"/><rect x="3" y="77" width="12" height="1" fill="#5a6068"/><rect x="3" y="78" width="12" height="1" fill="#ffffff" opacity="0.8"/><rect x="20" y="77" width="13" height="1" fill="#5a6068"/><rect x="20" y="78" width="13" height="1" fill="#ffffff" opacity="0.8"/><rect x="3" y="84" width="12" height="1" fill="#5a6068"/><rect x="3" y="85" width="12" height="1" fill="#ffffff" opacity="0.8"/><rect x="20" y="84" width="13" height="1" fill="#5a6068"/><rect x="20" y="85" width="13" height="1" fill="#ffffff" opacity="0.8"/><rect x="3" y="92" width="12" height="1" fill="#5a6068"/><rect x="3" y="93" width="12" height="1" fill="#ffffff" opacity="0.8"/><rect x="20" y="92" width="13" height="1" fill="#5a6068"/><rect x="20" y="93" width="13" height="1" fill="#ffffff" opacity="0.8"/><rect x="3" y="99" width="12" height="1" fill="#5a6068"/><rect x="3" y="100" width="12" height="1" fill="#ffffff" opacity="0.8"/><rect x="20" y="99" width="13" height="1" fill="#5a6068"/><rect x="20" y="100" width="13" height="1" fill="#ffffff" opacity="0.8"/><rect x="3" y="107" width="12" height="1" fill="#5a6068"/><rect x="3" y="108" width="12" height="1" fill="#ffffff" opacity="0.8"/><rect x="20" y="107" width="13" height="1" fill="#5a6068"/><rect x="20" y="108" width="13" height="1" fill="#ffffff" opacity="0.8"/><rect x="3" y="114" width="12" height="1" fill="#5a6068"/><rect x="3" y="115" width="12" height="1" fill="#ffffff" opacity="0.8"/><rect x="20" y="114" width="13" height="1" fill="#5a6068"/><rect x="20" y="115" width="13" height="1" fill="#ffffff" opacity="0.8"/><rect x="3" y="122" width="12" height="1" fill="#5a6068"/><rect x="3" y="123" width="12" height="1" fill="#ffffff" opacity="0.8"/><rect x="20" y="122" width="13" height="1" fill="#5a6068"/><rect x="20" y="123" width="13" height="1" fill="#ffffff" opacity="0.8"/><rect x="3" y="129" width="12" height="1" fill="#5a6068"/><rect x="3" y="130" width="12" height="1" fill="#ffffff" opacity="0.8"/><rect x="20" y="129" width="13" height="1" fill="#5a6068"/><rect x="20" y="130" width="13" height="1" fill="#ffffff" opacity="0.8"/><rect x="3" y="137" width="12" height="1" fill="#5a6068"/><rect x="3" y="138" width="12" height="1" fill="#ffffff" opacity="0.8"/><rect x="20" y="137" width="13" height="1" fill="#5a6068"/><rect x="20" y="138" width="13" height="1" fill="#ffffff" opacity="0.8"/><rect x="3" y="144" width="12" height="1" fill="#5a6068"/><rect x="3" y="145" width="12" height="1" fill="#ffffff" opacity="0.8"/><rect x="20" y="144" width="13" height="1" fill="#5a6068"/><rect x="20" y="145" width="13" height="1" fill="#ffffff" opacity="0.8"/><rect x="16" y="1" width="4" height="165" fill="#eceef0"/>
<rect x="15" y="0" width="1.3" height="140" fill="#000"/><rect x="15" y="0" width="4" height="1.5" fill="#000"/></svg>
<svg style="position:absolute;left:738px;top:699px;" width="22" height="36" viewBox="0 0 22 36"><rect x="4" y="4" width="17" height="31" rx="5.5" fill="#3a4250" opacity="0.55" filter="url(#fth)"/>
<rect x="2.5" y="2.5" width="17" height="30" rx="5" fill="url(#gthumb)" stroke="#50545a" stroke-width="1.2"/>
<rect x="4.5" y="16.5" width="13" height="3.5" fill="#a8b4c4" opacity="0.5"/><rect x="5" y="17.3" width="12" height="1.8" fill="#34507c"/></svg>
<svg style="position:absolute;left:741px;top:733px;" width="16" height="16" viewBox="0 0 16 16"><path d="M1 5 L8 13.5 L15 5" fill="none" stroke="#7a7e84" stroke-width="1.5"/>
<path d="M8 10 L14.5 1.5 L1.5 1.5 Z" fill="url(#garr)" stroke="#707478" stroke-width="1.2" stroke-linejoin="round"/></svg>
<div style="left:767px;top:439px;width:34px;height:313px;background:linear-gradient(90deg,#fdfeff 0%,#e8eefa 35%,#c6d8f6 65%,#aec8f2 100%);"></div>
<div style="left:801px;top:439px;width:2px;height:314px;background:#a4b4cc;"></div>
<div style="left:767px;top:752px;width:34px;height:1px;background:#8494a8;"></div>
<span class="t" style="left:585px;width:400px;text-align:center;top:443.84px;font-size:12px;line-height:12px;font-weight:400;color:#000;transform:scaleX(0.9);">21</span>
<div style="left:770px;top:459px;width:29px;height:17px;box-sizing:border-box;border-top:2px solid #7c7c7c;border-left:2px solid #7c7c7c;border-right:1px solid #fafafa;border-bottom:1px solid #fafafa;background:#000;"></div>
<span class="t" style="left:394.5px;width:400px;text-align:right;top:464.54px;font-size:10px;line-height:10px;font-weight:400;color:#fff;transform-origin:100% 0;">0</span>
<div style="left:770px;top:479px;width:29px;height:53px;box-sizing:border-box;border-top:1px solid #7a7a7a;border-left:2px solid #7a7a7a;border-right:1px solid #fafafa;border-bottom:2px solid #fafafa;background:#000;"></div>
<div style="left:772px;top:480px;width:26px;height:26px;background:#f8ba8a;"></div>
<div class="t" style="left:773px;top:480px;font-size:12.2px;line-height:13px;color:#000010;transform:scaleX(0.78);-webkit-text-stroke:0.3px #000010;transform-origin:0 0;white-space:pre">rgb.7
Blue</div>
<svg style="position:absolute;left:777px;top:537px;" width="16" height="16" viewBox="0 0 16 16"><path d="M1 10.5 L8 1.5 L15 10.5" fill="none" stroke="#7a7e84" stroke-width="1.5"/>
<path d="M8 5 L14.5 13.5 L1.5 13.5 Z" fill="url(#garr)" stroke="#707478" stroke-width="1.2" stroke-linejoin="round"/></svg>
<svg style="position:absolute;left:767px;top:569px;" width="34" height="166" viewBox="0 0 34 166"><rect x="3" y="2" width="12" height="1" fill="#5a6068"/><rect x="3" y="3" width="12" height="1" fill="#ffffff" opacity="0.8"/><rect x="20" y="2" width="13" height="1" fill="#5a6068"/><rect x="20" y="3" width="13" height="1" fill="#ffffff" opacity="0.8"/><rect x="3" y="9" width="12" height="1" fill="#5a6068"/><rect x="3" y="10" width="12" height="1" fill="#ffffff" opacity="0.8"/><rect x="20" y="9" width="13" height="1" fill="#5a6068"/><rect x="20" y="10" width="13" height="1" fill="#ffffff" opacity="0.8"/><rect x="3" y="17" width="12" height="1" fill="#5a6068"/><rect x="3" y="18" width="12" height="1" fill="#ffffff" opacity="0.8"/><rect x="20" y="17" width="13" height="1" fill="#5a6068"/><rect x="20" y="18" width="13" height="1" fill="#ffffff" opacity="0.8"/><rect x="3" y="24" width="12" height="1" fill="#5a6068"/><rect x="3" y="25" width="12" height="1" fill="#ffffff" opacity="0.8"/><rect x="20" y="24" width="13" height="1" fill="#5a6068"/><rect x="20" y="25" width="13" height="1" fill="#ffffff" opacity="0.8"/><rect x="3" y="32" width="12" height="1" fill="#5a6068"/><rect x="3" y="33" width="12" height="1" fill="#ffffff" opacity="0.8"/><rect x="20" y="32" width="13" height="1" fill="#5a6068"/><rect x="20" y="33" width="13" height="1" fill="#ffffff" opacity="0.8"/><rect x="3" y="39" width="12" height="1" fill="#5a6068"/><rect x="3" y="40" width="12" height="1" fill="#ffffff" opacity="0.8"/><rect x="20" y="39" width="13" height="1" fill="#5a6068"/><rect x="20" y="40" width="13" height="1" fill="#ffffff" opacity="0.8"/><rect x="3" y="47" width="12" height="1" fill="#5a6068"/><rect x="3" y="48" width="12" height="1" fill="#ffffff" opacity="0.8"/><rect x="20" y="47" width="13" height="1" fill="#5a6068"/><rect x="20" y="48" width="13" height="1" fill="#ffffff" opacity="0.8"/><rect x="3" y="54" width="12" height="1" fill="#5a6068"/><rect x="3" y="55" width="12" height="1" fill="#ffffff" opacity="0.8"/><rect x="20" y="54" width="13" height="1" fill="#5a6068"/><rect x="20" y="55" width="13" height="1" fill="#ffffff" opacity="0.8"/><rect x="3" y="62" width="12" height="1" fill="#5a6068"/><rect x="3" y="63" width="12" height="1" fill="#ffffff" opacity="0.8"/><rect x="20" y="62" width="13" height="1" fill="#5a6068"/><rect x="20" y="63" width="13" height="1" fill="#ffffff" opacity="0.8"/><rect x="3" y="69" width="12" height="1" fill="#5a6068"/><rect x="3" y="70" width="12" height="1" fill="#ffffff" opacity="0.8"/><rect x="20" y="69" width="13" height="1" fill="#5a6068"/><rect x="20" y="70" width="13" height="1" fill="#ffffff" opacity="0.8"/><rect x="3" y="77" width="12" height="1" fill="#5a6068"/><rect x="3" y="78" width="12" height="1" fill="#ffffff" opacity="0.8"/><rect x="20" y="77" width="13" height="1" fill="#5a6068"/><rect x="20" y="78" width="13" height="1" fill="#ffffff" opacity="0.8"/><rect x="3" y="84" width="12" height="1" fill="#5a6068"/><rect x="3" y="85" width="12" height="1" fill="#ffffff" opacity="0.8"/><rect x="20" y="84" width="13" height="1" fill="#5a6068"/><rect x="20" y="85" width="13" height="1" fill="#ffffff" opacity="0.8"/><rect x="3" y="92" width="12" height="1" fill="#5a6068"/><rect x="3" y="93" width="12" height="1" fill="#ffffff" opacity="0.8"/><rect x="20" y="92" width="13" height="1" fill="#5a6068"/><rect x="20" y="93" width="13" height="1" fill="#ffffff" opacity="0.8"/><rect x="3" y="99" width="12" height="1" fill="#5a6068"/><rect x="3" y="100" width="12" height="1" fill="#ffffff" opacity="0.8"/><rect x="20" y="99" width="13" height="1" fill="#5a6068"/><rect x="20" y="100" width="13" height="1" fill="#ffffff" opacity="0.8"/><rect x="3" y="107" width="12" height="1" fill="#5a6068"/><rect x="3" y="108" width="12" height="1" fill="#ffffff" opacity="0.8"/><rect x="20" y="107" width="13" height="1" fill="#5a6068"/><rect x="20" y="108" width="13" height="1" fill="#ffffff" opacity="0.8"/><rect x="3" y="114" width="12" height="1" fill="#5a6068"/><rect x="3" y="115" width="12" height="1" fill="#ffffff" opacity="0.8"/><rect x="20" y="114" width="13" height="1" fill="#5a6068"/><rect x="20" y="115" width="13" height="1" fill="#ffffff" opacity="0.8"/><rect x="3" y="122" width="12" height="1" fill="#5a6068"/><rect x="3" y="123" width="12" height="1" fill="#ffffff" opacity="0.8"/><rect x="20" y="122" width="13" height="1" fill="#5a6068"/><rect x="20" y="123" width="13" height="1" fill="#ffffff" opacity="0.8"/><rect x="3" y="129" width="12" height="1" fill="#5a6068"/><rect x="3" y="130" width="12" height="1" fill="#ffffff" opacity="0.8"/><rect x="20" y="129" width="13" height="1" fill="#5a6068"/><rect x="20" y="130" width="13" height="1" fill="#ffffff" opacity="0.8"/><rect x="3" y="137" width="12" height="1" fill="#5a6068"/><rect x="3" y="138" width="12" height="1" fill="#ffffff" opacity="0.8"/><rect x="20" y="137" width="13" height="1" fill="#5a6068"/><rect x="20" y="138" width="13" height="1" fill="#ffffff" opacity="0.8"/><rect x="3" y="144" width="12" height="1" fill="#5a6068"/><rect x="3" y="145" width="12" height="1" fill="#ffffff" opacity="0.8"/><rect x="20" y="144" width="13" height="1" fill="#5a6068"/><rect x="20" y="145" width="13" height="1" fill="#ffffff" opacity="0.8"/><rect x="16" y="1" width="4" height="165" fill="#eceef0"/>
<rect x="15" y="0" width="1.3" height="140" fill="#000"/><rect x="15" y="0" width="4" height="1.5" fill="#000"/></svg>
<svg style="position:absolute;left:774px;top:699px;" width="22" height="36" viewBox="0 0 22 36"><rect x="4" y="4" width="17" height="31" rx="5.5" fill="#3a4250" opacity="0.55" filter="url(#fth)"/>
<rect x="2.5" y="2.5" width="17" height="30" rx="5" fill="url(#gthumb)" stroke="#50545a" stroke-width="1.2"/>
<rect x="4.5" y="16.5" width="13" height="3.5" fill="#a8b4c4" opacity="0.5"/><rect x="5" y="17.3" width="12" height="1.8" fill="#34507c"/></svg>
<svg style="position:absolute;left:777px;top:733px;" width="16" height="16" viewBox="0 0 16 16"><path d="M1 5 L8 13.5 L15 5" fill="none" stroke="#7a7e84" stroke-width="1.5"/>
<path d="M8 10 L14.5 1.5 L1.5 1.5 Z" fill="url(#garr)" stroke="#707478" stroke-width="1.2" stroke-linejoin="round"/></svg>
<div style="left:803px;top:439px;width:34px;height:313px;background:linear-gradient(90deg,#fdfeff 0%,#e8eefa 35%,#c6d8f6 65%,#aec8f2 100%);"></div>
<div style="left:837px;top:439px;width:2px;height:314px;background:#a4b4cc;"></div>
<div style="left:803px;top:752px;width:34px;height:1px;background:#8494a8;"></div>
<span class="t" style="left:621px;width:400px;text-align:center;top:443.84px;font-size:12px;line-height:12px;font-weight:400;color:#000;transform:scaleX(0.9);">22</span>
<div style="left:806px;top:459px;width:29px;height:17px;box-sizing:border-box;border-top:2px solid #7c7c7c;border-left:2px solid #7c7c7c;border-right:1px solid #fafafa;border-bottom:1px solid #fafafa;background:#000;"></div>
<span class="t" style="left:430.5px;width:400px;text-align:right;top:464.54px;font-size:10px;line-height:10px;font-weight:400;color:#fff;transform-origin:100% 0;">0</span>
<div style="left:806px;top:479px;width:29px;height:53px;box-sizing:border-box;border-top:1px solid #7a7a7a;border-left:2px solid #7a7a7a;border-right:1px solid #fafafa;border-bottom:2px solid #fafafa;background:#000;"></div>
<div style="left:808px;top:480px;width:26px;height:26px;background:#e2b2ca;"></div>
<div class="t" style="left:809px;top:480px;font-size:12.2px;line-height:13px;color:#000010;transform:scaleX(0.78);-webkit-text-stroke:0.3px #000010;transform-origin:0 0;white-space:pre">rgb.8
Red</div>
<svg style="position:absolute;left:813px;top:537px;" width="16" height="16" viewBox="0 0 16 16"><path d="M1 10.5 L8 1.5 L15 10.5" fill="none" stroke="#7a7e84" stroke-width="1.5"/>
<path d="M8 5 L14.5 13.5 L1.5 13.5 Z" fill="url(#garr)" stroke="#707478" stroke-width="1.2" stroke-linejoin="round"/></svg>
<svg style="position:absolute;left:803px;top:569px;" width="34" height="166" viewBox="0 0 34 166"><rect x="3" y="2" width="12" height="1" fill="#5a6068"/><rect x="3" y="3" width="12" height="1" fill="#ffffff" opacity="0.8"/><rect x="20" y="2" width="13" height="1" fill="#5a6068"/><rect x="20" y="3" width="13" height="1" fill="#ffffff" opacity="0.8"/><rect x="3" y="9" width="12" height="1" fill="#5a6068"/><rect x="3" y="10" width="12" height="1" fill="#ffffff" opacity="0.8"/><rect x="20" y="9" width="13" height="1" fill="#5a6068"/><rect x="20" y="10" width="13" height="1" fill="#ffffff" opacity="0.8"/><rect x="3" y="17" width="12" height="1" fill="#5a6068"/><rect x="3" y="18" width="12" height="1" fill="#ffffff" opacity="0.8"/><rect x="20" y="17" width="13" height="1" fill="#5a6068"/><rect x="20" y="18" width="13" height="1" fill="#ffffff" opacity="0.8"/><rect x="3" y="24" width="12" height="1" fill="#5a6068"/><rect x="3" y="25" width="12" height="1" fill="#ffffff" opacity="0.8"/><rect x="20" y="24" width="13" height="1" fill="#5a6068"/><rect x="20" y="25" width="13" height="1" fill="#ffffff" opacity="0.8"/><rect x="3" y="32" width="12" height="1" fill="#5a6068"/><rect x="3" y="33" width="12" height="1" fill="#ffffff" opacity="0.8"/><rect x="20" y="32" width="13" height="1" fill="#5a6068"/><rect x="20" y="33" width="13" height="1" fill="#ffffff" opacity="0.8"/><rect x="3" y="39" width="12" height="1" fill="#5a6068"/><rect x="3" y="40" width="12" height="1" fill="#ffffff" opacity="0.8"/><rect x="20" y="39" width="13" height="1" fill="#5a6068"/><rect x="20" y="40" width="13" height="1" fill="#ffffff" opacity="0.8"/><rect x="3" y="47" width="12" height="1" fill="#5a6068"/><rect x="3" y="48" width="12" height="1" fill="#ffffff" opacity="0.8"/><rect x="20" y="47" width="13" height="1" fill="#5a6068"/><rect x="20" y="48" width="13" height="1" fill="#ffffff" opacity="0.8"/><rect x="3" y="54" width="12" height="1" fill="#5a6068"/><rect x="3" y="55" width="12" height="1" fill="#ffffff" opacity="0.8"/><rect x="20" y="54" width="13" height="1" fill="#5a6068"/><rect x="20" y="55" width="13" height="1" fill="#ffffff" opacity="0.8"/><rect x="3" y="62" width="12" height="1" fill="#5a6068"/><rect x="3" y="63" width="12" height="1" fill="#ffffff" opacity="0.8"/><rect x="20" y="62" width="13" height="1" fill="#5a6068"/><rect x="20" y="63" width="13" height="1" fill="#ffffff" opacity="0.8"/><rect x="3" y="69" width="12" height="1" fill="#5a6068"/><rect x="3" y="70" width="12" height="1" fill="#ffffff" opacity="0.8"/><rect x="20" y="69" width="13" height="1" fill="#5a6068"/><rect x="20" y="70" width="13" height="1" fill="#ffffff" opacity="0.8"/><rect x="3" y="77" width="12" height="1" fill="#5a6068"/><rect x="3" y="78" width="12" height="1" fill="#ffffff" opacity="0.8"/><rect x="20" y="77" width="13" height="1" fill="#5a6068"/><rect x="20" y="78" width="13" height="1" fill="#ffffff" opacity="0.8"/><rect x="3" y="84" width="12" height="1" fill="#5a6068"/><rect x="3" y="85" width="12" height="1" fill="#ffffff" opacity="0.8"/><rect x="20" y="84" width="13" height="1" fill="#5a6068"/><rect x="20" y="85" width="13" height="1" fill="#ffffff" opacity="0.8"/><rect x="3" y="92" width="12" height="1" fill="#5a6068"/><rect x="3" y="93" width="12" height="1" fill="#ffffff" opacity="0.8"/><rect x="20" y="92" width="13" height="1" fill="#5a6068"/><rect x="20" y="93" width="13" height="1" fill="#ffffff" opacity="0.8"/><rect x="3" y="99" width="12" height="1" fill="#5a6068"/><rect x="3" y="100" width="12" height="1" fill="#ffffff" opacity="0.8"/><rect x="20" y="99" width="13" height="1" fill="#5a6068"/><rect x="20" y="100" width="13" height="1" fill="#ffffff" opacity="0.8"/><rect x="3" y="107" width="12" height="1" fill="#5a6068"/><rect x="3" y="108" width="12" height="1" fill="#ffffff" opacity="0.8"/><rect x="20" y="107" width="13" height="1" fill="#5a6068"/><rect x="20" y="108" width="13" height="1" fill="#ffffff" opacity="0.8"/><rect x="3" y="114" width="12" height="1" fill="#5a6068"/><rect x="3" y="115" width="12" height="1" fill="#ffffff" opacity="0.8"/><rect x="20" y="114" width="13" height="1" fill="#5a6068"/><rect x="20" y="115" width="13" height="1" fill="#ffffff" opacity="0.8"/><rect x="3" y="122" width="12" height="1" fill="#5a6068"/><rect x="3" y="123" width="12" height="1" fill="#ffffff" opacity="0.8"/><rect x="20" y="122" width="13" height="1" fill="#5a6068"/><rect x="20" y="123" width="13" height="1" fill="#ffffff" opacity="0.8"/><rect x="3" y="129" width="12" height="1" fill="#5a6068"/><rect x="3" y="130" width="12" height="1" fill="#ffffff" opacity="0.8"/><rect x="20" y="129" width="13" height="1" fill="#5a6068"/><rect x="20" y="130" width="13" height="1" fill="#ffffff" opacity="0.8"/><rect x="3" y="137" width="12" height="1" fill="#5a6068"/><rect x="3" y="138" width="12" height="1" fill="#ffffff" opacity="0.8"/><rect x="20" y="137" width="13" height="1" fill="#5a6068"/><rect x="20" y="138" width="13" height="1" fill="#ffffff" opacity="0.8"/><rect x="3" y="144" width="12" height="1" fill="#5a6068"/><rect x="3" y="145" width="12" height="1" fill="#ffffff" opacity="0.8"/><rect x="20" y="144" width="13" height="1" fill="#5a6068"/><rect x="20" y="145" width="13" height="1" fill="#ffffff" opacity="0.8"/><rect x="16" y="1" width="4" height="165" fill="#eceef0"/>
<rect x="15" y="0" width="1.3" height="140" fill="#000"/><rect x="15" y="0" width="4" height="1.5" fill="#000"/></svg>
<svg style="position:absolute;left:810px;top:699px;" width="22" height="36" viewBox="0 0 22 36"><rect x="4" y="4" width="17" height="31" rx="5.5" fill="#3a4250" opacity="0.55" filter="url(#fth)"/>
<rect x="2.5" y="2.5" width="17" height="30" rx="5" fill="url(#gthumb)" stroke="#50545a" stroke-width="1.2"/>
<rect x="4.5" y="16.5" width="13" height="3.5" fill="#a8b4c4" opacity="0.5"/><rect x="5" y="17.3" width="12" height="1.8" fill="#34507c"/></svg>
<svg style="position:absolute;left:813px;top:733px;" width="16" height="16" viewBox="0 0 16 16"><path d="M1 5 L8 13.5 L15 5" fill="none" stroke="#7a7e84" stroke-width="1.5"/>
<path d="M8 10 L14.5 1.5 L1.5 1.5 Z" fill="url(#garr)" stroke="#707478" stroke-width="1.2" stroke-linejoin="round"/></svg>
<div style="left:839px;top:439px;width:34px;height:313px;background:linear-gradient(90deg,#fdfeff 0%,#e8eefa 35%,#c6d8f6 65%,#aec8f2 100%);"></div>
<div style="left:873px;top:439px;width:2px;height:314px;background:#a4b4cc;"></div>
<div style="left:839px;top:752px;width:34px;height:1px;background:#8494a8;"></div>
<span class="t" style="left:657px;width:400px;text-align:center;top:443.84px;font-size:12px;line-height:12px;font-weight:400;color:#000;transform:scaleX(0.9);">23</span>
<div style="left:842px;top:459px;width:29px;height:17px;box-sizing:border-box;border-top:2px solid #7c7c7c;border-left:2px solid #7c7c7c;border-right:1px solid #fafafa;border-bottom:1px solid #fafafa;background:#000;"></div>
<span class="t" style="left:466.5px;width:400px;text-align:right;top:464.54px;font-size:10px;line-height:10px;font-weight:400;color:#fff;transform-origin:100% 0;">0</span>
<div style="left:842px;top:479px;width:29px;height:53px;box-sizing:border-box;border-top:1px solid #7a7a7a;border-left:2px solid #7a7a7a;border-right:1px solid #fafafa;border-bottom:2px solid #fafafa;background:#000;"></div>
<div style="left:844px;top:480px;width:26px;height:26px;background:#e2b2ca;"></div>
<div class="t" style="left:845px;top:480px;font-size:12.2px;line-height:13px;color:#000010;transform:scaleX(0.78);-webkit-text-stroke:0.3px #000010;transform-origin:0 0;white-space:pre">rgb.8
Gre...</div>
<svg style="position:absolute;left:849px;top:537px;" width="16" height="16" viewBox="0 0 16 16"><path d="M1 10.5 L8 1.5 L15 10.5" fill="none" stroke="#7a7e84" stroke-width="1.5"/>
<path d="M8 5 L14.5 13.5 L1.5 13.5 Z" fill="url(#garr)" stroke="#707478" stroke-width="1.2" stroke-linejoin="round"/></svg>
<svg style="position:absolute;left:839px;top:569px;" width="34" height="166" viewBox="0 0 34 166"><rect x="3" y="2" width="12" height="1" fill="#5a6068"/><rect x="3" y="3" width="12" height="1" fill="#ffffff" opacity="0.8"/><rect x="20" y="2" width="13" height="1" fill="#5a6068"/><rect x="20" y="3" width="13" height="1" fill="#ffffff" opacity="0.8"/><rect x="3" y="9" width="12" height="1" fill="#5a6068"/><rect x="3" y="10" width="12" height="1" fill="#ffffff" opacity="0.8"/><rect x="20" y="9" width="13" height="1" fill="#5a6068"/><rect x="20" y="10" width="13" height="1" fill="#ffffff" opacity="0.8"/><rect x="3" y="17" width="12" height="1" fill="#5a6068"/><rect x="3" y="18" width="12" height="1" fill="#ffffff" opacity="0.8"/><rect x="20" y="17" width="13" height="1" fill="#5a6068"/><rect x="20" y="18" width="13" height="1" fill="#ffffff" opacity="0.8"/><rect x="3" y="24" width="12" height="1" fill="#5a6068"/><rect x="3" y="25" width="12" height="1" fill="#ffffff" opacity="0.8"/><rect x="20" y="24" width="13" height="1" fill="#5a6068"/><rect x="20" y="25" width="13" height="1" fill="#ffffff" opacity="0.8"/><rect x="3" y="32" width="12" height="1" fill="#5a6068"/><rect x="3" y="33" width="12" height="1" fill="#ffffff" opacity="0.8"/><rect x="20" y="32" width="13" height="1" fill="#5a6068"/><rect x="20" y="33" width="13" height="1" fill="#ffffff" opacity="0.8"/><rect x="3" y="39" width="12" height="1" fill="#5a6068"/><rect x="3" y="40" width="12" height="1" fill="#ffffff" opacity="0.8"/><rect x="20" y="39" width="13" height="1" fill="#5a6068"/><rect x="20" y="40" width="13" height="1" fill="#ffffff" opacity="0.8"/><rect x="3" y="47" width="12" height="1" fill="#5a6068"/><rect x="3" y="48" width="12" height="1" fill="#ffffff" opacity="0.8"/><rect x="20" y="47" width="13" height="1" fill="#5a6068"/><rect x="20" y="48" width="13" height="1" fill="#ffffff" opacity="0.8"/><rect x="3" y="54" width="12" height="1" fill="#5a6068"/><rect x="3" y="55" width="12" height="1" fill="#ffffff" opacity="0.8"/><rect x="20" y="54" width="13" height="1" fill="#5a6068"/><rect x="20" y="55" width="13" height="1" fill="#ffffff" opacity="0.8"/><rect x="3" y="62" width="12" height="1" fill="#5a6068"/><rect x="3" y="63" width="12" height="1" fill="#ffffff" opacity="0.8"/><rect x="20" y="62" width="13" height="1" fill="#5a6068"/><rect x="20" y="63" width="13" height="1" fill="#ffffff" opacity="0.8"/><rect x="3" y="69" width="12" height="1" fill="#5a6068"/><rect x="3" y="70" width="12" height="1" fill="#ffffff" opacity="0.8"/><rect x="20" y="69" width="13" height="1" fill="#5a6068"/><rect x="20" y="70" width="13" height="1" fill="#ffffff" opacity="0.8"/><rect x="3" y="77" width="12" height="1" fill="#5a6068"/><rect x="3" y="78" width="12" height="1" fill="#ffffff" opacity="0.8"/><rect x="20" y="77" width="13" height="1" fill="#5a6068"/><rect x="20" y="78" width="13" height="1" fill="#ffffff" opacity="0.8"/><rect x="3" y="84" width="12" height="1" fill="#5a6068"/><rect x="3" y="85" width="12" height="1" fill="#ffffff" opacity="0.8"/><rect x="20" y="84" width="13" height="1" fill="#5a6068"/><rect x="20" y="85" width="13" height="1" fill="#ffffff" opacity="0.8"/><rect x="3" y="92" width="12" height="1" fill="#5a6068"/><rect x="3" y="93" width="12" height="1" fill="#ffffff" opacity="0.8"/><rect x="20" y="92" width="13" height="1" fill="#5a6068"/><rect x="20" y="93" width="13" height="1" fill="#ffffff" opacity="0.8"/><rect x="3" y="99" width="12" height="1" fill="#5a6068"/><rect x="3" y="100" width="12" height="1" fill="#ffffff" opacity="0.8"/><rect x="20" y="99" width="13" height="1" fill="#5a6068"/><rect x="20" y="100" width="13" height="1" fill="#ffffff" opacity="0.8"/><rect x="3" y="107" width="12" height="1" fill="#5a6068"/><rect x="3" y="108" width="12" height="1" fill="#ffffff" opacity="0.8"/><rect x="20" y="107" width="13" height="1" fill="#5a6068"/><rect x="20" y="108" width="13" height="1" fill="#ffffff" opacity="0.8"/><rect x="3" y="114" width="12" height="1" fill="#5a6068"/><rect x="3" y="115" width="12" height="1" fill="#ffffff" opacity="0.8"/><rect x="20" y="114" width="13" height="1" fill="#5a6068"/><rect x="20" y="115" width="13" height="1" fill="#ffffff" opacity="0.8"/><rect x="3" y="122" width="12" height="1" fill="#5a6068"/><rect x="3" y="123" width="12" height="1" fill="#ffffff" opacity="0.8"/><rect x="20" y="122" width="13" height="1" fill="#5a6068"/><rect x="20" y="123" width="13" height="1" fill="#ffffff" opacity="0.8"/><rect x="3" y="129" width="12" height="1" fill="#5a6068"/><rect x="3" y="130" width="12" height="1" fill="#ffffff" opacity="0.8"/><rect x="20" y="129" width="13" height="1" fill="#5a6068"/><rect x="20" y="130" width="13" height="1" fill="#ffffff" opacity="0.8"/><rect x="3" y="137" width="12" height="1" fill="#5a6068"/><rect x="3" y="138" width="12" height="1" fill="#ffffff" opacity="0.8"/><rect x="20" y="137" width="13" height="1" fill="#5a6068"/><rect x="20" y="138" width="13" height="1" fill="#ffffff" opacity="0.8"/><rect x="3" y="144" width="12" height="1" fill="#5a6068"/><rect x="3" y="145" width="12" height="1" fill="#ffffff" opacity="0.8"/><rect x="20" y="144" width="13" height="1" fill="#5a6068"/><rect x="20" y="145" width="13" height="1" fill="#ffffff" opacity="0.8"/><rect x="16" y="1" width="4" height="165" fill="#eceef0"/>
<rect x="15" y="0" width="1.3" height="140" fill="#000"/><rect x="15" y="0" width="4" height="1.5" fill="#000"/></svg>
<svg style="position:absolute;left:846px;top:699px;" width="22" height="36" viewBox="0 0 22 36"><rect x="4" y="4" width="17" height="31" rx="5.5" fill="#3a4250" opacity="0.55" filter="url(#fth)"/>
<rect x="2.5" y="2.5" width="17" height="30" rx="5" fill="url(#gthumb)" stroke="#50545a" stroke-width="1.2"/>
<rect x="4.5" y="16.5" width="13" height="3.5" fill="#a8b4c4" opacity="0.5"/><rect x="5" y="17.3" width="12" height="1.8" fill="#34507c"/></svg>
<svg style="position:absolute;left:849px;top:733px;" width="16" height="16" viewBox="0 0 16 16"><path d="M1 5 L8 13.5 L15 5" fill="none" stroke="#7a7e84" stroke-width="1.5"/>
<path d="M8 10 L14.5 1.5 L1.5 1.5 Z" fill="url(#garr)" stroke="#707478" stroke-width="1.2" stroke-linejoin="round"/></svg>
<div style="left:875px;top:439px;width:34px;height:313px;background:linear-gradient(90deg,#fdfeff 0%,#e8eefa 35%,#c6d8f6 65%,#aec8f2 100%);"></div>
<div style="left:909px;top:439px;width:2px;height:314px;background:#a4b4cc;"></div>
<div style="left:875px;top:752px;width:34px;height:1px;background:#8494a8;"></div>
<span class="t" style="left:693px;width:400px;text-align:center;top:443.84px;font-size:12px;line-height:12px;font-weight:400;color:#000;transform:scaleX(0.9);">24</span>
<div style="left:878px;top:459px;width:29px;height:17px;box-sizing:border-box;border-top:2px solid #7c7c7c;border-left:2px solid #7c7c7c;border-right:1px solid #fafafa;border-bottom:1px solid #fafafa;background:#000;"></div>
<span class="t" style="left:502.5px;width:400px;text-align:right;top:464.54px;font-size:10px;line-height:10px;font-weight:400;color:#fff;transform-origin:100% 0;">0</span>
<div style="left:878px;top:479px;width:29px;height:53px;box-sizing:border-box;border-top:1px solid #7a7a7a;border-left:2px solid #7a7a7a;border-right:1px solid #fafafa;border-bottom:2px solid #fafafa;background:#000;"></div>
<div style="left:880px;top:480px;width:26px;height:26px;background:#e2b2ca;"></div>
<div class="t" style="left:881px;top:480px;font-size:12.2px;line-height:13px;color:#000010;transform:scaleX(0.78);-webkit-text-stroke:0.3px #000010;transform-origin:0 0;white-space:pre">rgb.8
Blue</div>
<svg style="position:absolute;left:885px;top:537px;" width="16" height="16" viewBox="0 0 16 16"><path d="M1 10.5 L8 1.5 L15 10.5" fill="none" stroke="#7a7e84" stroke-width="1.5"/>
<path d="M8 5 L14.5 13.5 L1.5 13.5 Z" fill="url(#garr)" stroke="#707478" stroke-width="1.2" stroke-linejoin="round"/></svg>
<svg style="position:absolute;left:875px;top:569px;" width="34" height="166" viewBox="0 0 34 166"><rect x="3" y="2" width="12" height="1" fill="#5a6068"/><rect x="3" y="3" width="12" height="1" fill="#ffffff" opacity="0.8"/><rect x="20" y="2" width="13" height="1" fill="#5a6068"/><rect x="20" y="3" width="13" height="1" fill="#ffffff" opacity="0.8"/><rect x="3" y="9" width="12" height="1" fill="#5a6068"/><rect x="3" y="10" width="12" height="1" fill="#ffffff" opacity="0.8"/><rect x="20" y="9" width="13" height="1" fill="#5a6068"/><rect x="20" y="10" width="13" height="1" fill="#ffffff" opacity="0.8"/><rect x="3" y="17" width="12" height="1" fill="#5a6068"/><rect x="3" y="18" width="12" height="1" fill="#ffffff" opacity="0.8"/><rect x="20" y="17" width="13" height="1" fill="#5a6068"/><rect x="20" y="18" width="13" height="1" fill="#ffffff" opacity="0.8"/><rect x="3" y="24" width="12" height="1" fill="#5a6068"/><rect x="3" y="25" width="12" height="1" fill="#ffffff" opacity="0.8"/><rect x="20" y="24" width="13" height="1" fill="#5a6068"/><rect x="20" y="25" width="13" height="1" fill="#ffffff" opacity="0.8"/><rect x="3" y="32" width="12" height="1" fill="#5a6068"/><rect x="3" y="33" width="12" height="1" fill="#ffffff" opacity="0.8"/><rect x="20" y="32" width="13" height="1" fill="#5a6068"/><rect x="20" y="33" width="13" height="1" fill="#ffffff" opacity="0.8"/><rect x="3" y="39" width="12" height="1" fill="#5a6068"/><rect x="3" y="40" width="12" height="1" fill="#ffffff" opacity="0.8"/><rect x="20" y="39" width="13" height="1" fill="#5a6068"/><rect x="20" y="40" width="13" height="1" fill="#ffffff" opacity="0.8"/><rect x="3" y="47" width="12" height="1" fill="#5a6068"/><rect x="3" y="48" width="12" height="1" fill="#ffffff" opacity="0.8"/><rect x="20" y="47" width="13" height="1" fill="#5a6068"/><rect x="20" y="48" width="13" height="1" fill="#ffffff" opacity="0.8"/><rect x="3" y="54" width="12" height="1" fill="#5a6068"/><rect x="3" y="55" width="12" height="1" fill="#ffffff" opacity="0.8"/><rect x="20" y="54" width="13" height="1" fill="#5a6068"/><rect x="20" y="55" width="13" height="1" fill="#ffffff" opacity="0.8"/><rect x="3" y="62" width="12" height="1" fill="#5a6068"/><rect x="3" y="63" width="12" height="1" fill="#ffffff" opacity="0.8"/><rect x="20" y="62" width="13" height="1" fill="#5a6068"/><rect x="20" y="63" width="13" height="1" fill="#ffffff" opacity="0.8"/><rect x="3" y="69" width="12" height="1" fill="#5a6068"/><rect x="3" y="70" width="12" height="1" fill="#ffffff" opacity="0.8"/><rect x="20" y="69" width="13" height="1" fill="#5a6068"/><rect x="20" y="70" width="13" height="1" fill="#ffffff" opacity="0.8"/><rect x="3" y="77" width="12" height="1" fill="#5a6068"/><rect x="3" y="78" width="12" height="1" fill="#ffffff" opacity="0.8"/><rect x="20" y="77" width="13" height="1" fill="#5a6068"/><rect x="20" y="78" width="13" height="1" fill="#ffffff" opacity="0.8"/><rect x="3" y="84" width="12" height="1" fill="#5a6068"/><rect x="3" y="85" width="12" height="1" fill="#ffffff" opacity="0.8"/><rect x="20" y="84" width="13" height="1" fill="#5a6068"/><rect x="20" y="85" width="13" height="1" fill="#ffffff" opacity="0.8"/><rect x="3" y="92" width="12" height="1" fill="#5a6068"/><rect x="3" y="93" width="12" height="1" fill="#ffffff" opacity="0.8"/><rect x="20" y="92" width="13" height="1" fill="#5a6068"/><rect x="20" y="93" width="13" height="1" fill="#ffffff" opacity="0.8"/><rect x="3" y="99" width="12" height="1" fill="#5a6068"/><rect x="3" y="100" width="12" height="1" fill="#ffffff" opacity="0.8"/><rect x="20" y="99" width="13" height="1" fill="#5a6068"/><rect x="20" y="100" width="13" height="1" fill="#ffffff" opacity="0.8"/><rect x="3" y="107" width="12" height="1" fill="#5a6068"/><rect x="3" y="108" width="12" height="1" fill="#ffffff" opacity="0.8"/><rect x="20" y="107" width="13" height="1" fill="#5a6068"/><rect x="20" y="108" width="13" height="1" fill="#ffffff" opacity="0.8"/><rect x="3" y="114" width="12" height="1" fill="#5a6068"/><rect x="3" y="115" width="12" height="1" fill="#ffffff" opacity="0.8"/><rect x="20" y="114" width="13" height="1" fill="#5a6068"/><rect x="20" y="115" width="13" height="1" fill="#ffffff" opacity="0.8"/><rect x="3" y="122" width="12" height="1" fill="#5a6068"/><rect x="3" y="123" width="12" height="1" fill="#ffffff" opacity="0.8"/><rect x="20" y="122" width="13" height="1" fill="#5a6068"/><rect x="20" y="123" width="13" height="1" fill="#ffffff" opacity="0.8"/><rect x="3" y="129" width="12" height="1" fill="#5a6068"/><rect x="3" y="130" width="12" height="1" fill="#ffffff" opacity="0.8"/><rect x="20" y="129" width="13" height="1" fill="#5a6068"/><rect x="20" y="130" width="13" height="1" fill="#ffffff" opacity="0.8"/><rect x="3" y="137" width="12" height="1" fill="#5a6068"/><rect x="3" y="138" width="12" height="1" fill="#ffffff" opacity="0.8"/><rect x="20" y="137" width="13" height="1" fill="#5a6068"/><rect x="20" y="138" width="13" height="1" fill="#ffffff" opacity="0.8"/><rect x="3" y="144" width="12" height="1" fill="#5a6068"/><rect x="3" y="145" width="12" height="1" fill="#ffffff" opacity="0.8"/><rect x="20" y="144" width="13" height="1" fill="#5a6068"/><rect x="20" y="145" width="13" height="1" fill="#ffffff" opacity="0.8"/><rect x="16" y="1" width="4" height="165" fill="#eceef0"/>
<rect x="15" y="0" width="1.3" height="140" fill="#000"/><rect x="15" y="0" width="4" height="1.5" fill="#000"/></svg>
<svg style="position:absolute;left:882px;top:699px;" width="22" height="36" viewBox="0 0 22 36"><rect x="4" y="4" width="17" height="31" rx="5.5" fill="#3a4250" opacity="0.55" filter="url(#fth)"/>
<rect x="2.5" y="2.5" width="17" height="30" rx="5" fill="url(#gthumb)" stroke="#50545a" stroke-width="1.2"/>
<rect x="4.5" y="16.5" width="13" height="3.5" fill="#a8b4c4" opacity="0.5"/><rect x="5" y="17.3" width="12" height="1.8" fill="#34507c"/></svg>
<svg style="position:absolute;left:885px;top:733px;" width="16" height="16" viewBox="0 0 16 16"><path d="M1 5 L8 13.5 L15 5" fill="none" stroke="#7a7e84" stroke-width="1.5"/>
<path d="M8 10 L14.5 1.5 L1.5 1.5 Z" fill="url(#garr)" stroke="#707478" stroke-width="1.2" stroke-linejoin="round"/></svg>
<div style="left:911px;top:439px;width:34px;height:313px;background:linear-gradient(90deg,#fdfeff 0%,#e8eefa 35%,#c6d8f6 65%,#aec8f2 100%);"></div>
<div style="left:945px;top:439px;width:2px;height:314px;background:#a4b4cc;"></div>
<div style="left:911px;top:752px;width:34px;height:1px;background:#8494a8;"></div>
<span class="t" style="left:729px;width:400px;text-align:center;top:443.84px;font-size:12px;line-height:12px;font-weight:400;color:#000;transform:scaleX(0.9);">25</span>
<div style="left:914px;top:459px;width:29px;height:17px;box-sizing:border-box;border-top:2px solid #7c7c7c;border-left:2px solid #7c7c7c;border-right:1px solid #fafafa;border-bottom:1px solid #fafafa;background:#000;"></div>
<span class="t" style="left:538.5px;width:400px;text-align:right;top:464.54px;font-size:10px;line-height:10px;font-weight:400;color:#fff;transform-origin:100% 0;">0</span>
<div style="left:914px;top:479px;width:29px;height:53px;box-sizing:border-box;border-top:1px solid #7a7a7a;border-left:2px solid #7a7a7a;border-right:1px solid #fafafa;border-bottom:2px solid #fafafa;background:#000;"></div>
<div style="left:916px;top:480px;width:26px;height:50px;background:#a6b6ec;"></div>
<div class="t" style="left:917px;top:480px;font-size:12.2px;line-height:13px;color:#000010;transform:scaleX(0.78);-webkit-text-stroke:0.3px #000010;transform-origin:0 0;white-space:pre">sin...
Di...</div>
<svg style="position:absolute;left:917px;top:507px;" width="24" height="23" viewBox="0 0 24 23"><path d="M0 3 Q0 0 3 0 L21 0 Q24 0 24 3 L24 23 L0 23 Z" fill="url(#gspot)"/>
<path d="M12 3 L3 19 L12 20 Z" fill="#b8e0fa" opacity="0.45"/>
<path d="M11.5 3 L14.5 2.5 L23 19 L15 21 Z" fill="#d8f0fc" opacity="0.85"/>
<ellipse cx="7.5" cy="18.5" rx="5.5" ry="3" fill="#d0ecfc" opacity="0.8"/>
<ellipse cx="19" cy="19.5" rx="4.5" ry="2.5" fill="#f4faff" opacity="0.9"/></svg>
<svg style="position:absolute;left:921px;top:537px;" width="16" height="16" viewBox="0 0 16 16"><path d="M1 10.5 L8 1.5 L15 10.5" fill="none" stroke="#7a7e84" stroke-width="1.5"/>
<path d="M8 5 L14.5 13.5 L1.5 13.5 Z" fill="url(#garr)" stroke="#707478" stroke-width="1.2" stroke-linejoin="round"/></svg>
<svg style="position:absolute;left:911px;top:569px;" width="34" height="166" viewBox="0 0 34 166"><rect x="3" y="2" width="12" height="1" fill="#5a6068"/><rect x="3" y="3" width="12" height="1" fill="#ffffff" opacity="0.8"/><rect x="20" y="2" width="13" height="1" fill="#5a6068"/><rect x="20" y="3" width="13" height="1" fill="#ffffff" opacity="0.8"/><rect x="3" y="9" width="12" height="1" fill="#5a6068"/><rect x="3" y="10" width="12" height="1" fill="#ffffff" opacity="0.8"/><rect x="20" y="9" width="13" height="1" fill="#5a6068"/><rect x="20" y="10" width="13" height="1" fill="#ffffff" opacity="0.8"/><rect x="3" y="17" width="12" height="1" fill="#5a6068"/><rect x="3" y="18" width="12" height="1" fill="#ffffff" opacity="0.8"/><rect x="20" y="17" width="13" height="1" fill="#5a6068"/><rect x="20" y="18" width="13" height="1" fill="#ffffff" opacity="0.8"/><rect x="3" y="24" width="12" height="1" fill="#5a6068"/><rect x="3" y="25" width="12" height="1" fill="#ffffff" opacity="0.8"/><rect x="20" y="24" width="13" height="1" fill="#5a6068"/><rect x="20" y="25" width="13" height="1" fill="#ffffff" opacity="0.8"/><rect x="3" y="32" width="12" height="1" fill="#5a6068"/><rect x="3" y="33" width="12" height="1" fill="#ffffff" opacity="0.8"/><rect x="20" y="32" width="13" height="1" fill="#5a6068"/><rect x="20" y="33" width="13" height="1" fill="#ffffff" opacity="0.8"/><rect x="3" y="39" width="12" height="1" fill="#5a6068"/><rect x="3" y="40" width="12" height="1" fill="#ffffff" opacity="0.8"/><rect x="20" y="39" width="13" height="1" fill="#5a6068"/><rect x="20" y="40" width="13" height="1" fill="#ffffff" opacity="0.8"/><rect x="3" y="47" width="12" height="1" fill="#5a6068"/><rect x="3" y="48" width="12" height="1" fill="#ffffff" opacity="0.8"/><rect x="20" y="47" width="13" height="1" fill="#5a6068"/><rect x="20" y="48" width="13" height="1" fill="#ffffff" opacity="0.8"/><rect x="3" y="54" width="12" height="1" fill="#5a6068"/><rect x="3" y="55" width="12" height="1" fill="#ffffff" opacity="0.8"/><rect x="20" y="54" width="13" height="1" fill="#5a6068"/><rect x="20" y="55" width="13" height="1" fill="#ffffff" opacity="0.8"/><rect x="3" y="62" width="12" height="1" fill="#5a6068"/><rect x="3" y="63" width="12" height="1" fill="#ffffff" opacity="0.8"/><rect x="20" y="62" width="13" height="1" fill="#5a6068"/><rect x="20" y="63" width="13" height="1" fill="#ffffff" opacity="0.8"/><rect x="3" y="69" width="12" height="1" fill="#5a6068"/><rect x="3" y="70" width="12" height="1" fill="#ffffff" opacity="0.8"/><rect x="20" y="69" width="13" height="1" fill="#5a6068"/><rect x="20" y="70" width="13" height="1" fill="#ffffff" opacity="0.8"/><rect x="3" y="77" width="12" height="1" fill="#5a6068"/><rect x="3" y="78" width="12" height="1" fill="#ffffff" opacity="0.8"/><rect x="20" y="77" width="13" height="1" fill="#5a6068"/><rect x="20" y="78" width="13" height="1" fill="#ffffff" opacity="0.8"/><rect x="3" y="84" width="12" height="1" fill="#5a6068"/><rect x="3" y="85" width="12" height="1" fill="#ffffff" opacity="0.8"/><rect x="20" y="84" width="13" height="1" fill="#5a6068"/><rect x="20" y="85" width="13" height="1" fill="#ffffff" opacity="0.8"/><rect x="3" y="92" width="12" height="1" fill="#5a6068"/><rect x="3" y="93" width="12" height="1" fill="#ffffff" opacity="0.8"/><rect x="20" y="92" width="13" height="1" fill="#5a6068"/><rect x="20" y="93" width="13" height="1" fill="#ffffff" opacity="0.8"/><rect x="3" y="99" width="12" height="1" fill="#5a6068"/><rect x="3" y="100" width="12" height="1" fill="#ffffff" opacity="0.8"/><rect x="20" y="99" width="13" height="1" fill="#5a6068"/><rect x="20" y="100" width="13" height="1" fill="#ffffff" opacity="0.8"/><rect x="3" y="107" width="12" height="1" fill="#5a6068"/><rect x="3" y="108" width="12" height="1" fill="#ffffff" opacity="0.8"/><rect x="20" y="107" width="13" height="1" fill="#5a6068"/><rect x="20" y="108" width="13" height="1" fill="#ffffff" opacity="0.8"/><rect x="3" y="114" width="12" height="1" fill="#5a6068"/><rect x="3" y="115" width="12" height="1" fill="#ffffff" opacity="0.8"/><rect x="20" y="114" width="13" height="1" fill="#5a6068"/><rect x="20" y="115" width="13" height="1" fill="#ffffff" opacity="0.8"/><rect x="3" y="122" width="12" height="1" fill="#5a6068"/><rect x="3" y="123" width="12" height="1" fill="#ffffff" opacity="0.8"/><rect x="20" y="122" width="13" height="1" fill="#5a6068"/><rect x="20" y="123" width="13" height="1" fill="#ffffff" opacity="0.8"/><rect x="3" y="129" width="12" height="1" fill="#5a6068"/><rect x="3" y="130" width="12" height="1" fill="#ffffff" opacity="0.8"/><rect x="20" y="129" width="13" height="1" fill="#5a6068"/><rect x="20" y="130" width="13" height="1" fill="#ffffff" opacity="0.8"/><rect x="3" y="137" width="12" height="1" fill="#5a6068"/><rect x="3" y="138" width="12" height="1" fill="#ffffff" opacity="0.8"/><rect x="20" y="137" width="13" height="1" fill="#5a6068"/><rect x="20" y="138" width="13" height="1" fill="#ffffff" opacity="0.8"/><rect x="3" y="144" width="12" height="1" fill="#5a6068"/><rect x="3" y="145" width="12" height="1" fill="#ffffff" opacity="0.8"/><rect x="20" y="144" width="13" height="1" fill="#5a6068"/><rect x="20" y="145" width="13" height="1" fill="#ffffff" opacity="0.8"/><rect x="16" y="1" width="4" height="165" fill="#eceef0"/>
<rect x="15" y="0" width="1.3" height="140" fill="#000"/><rect x="15" y="0" width="4" height="1.5" fill="#000"/></svg>
<svg style="position:absolute;left:918px;top:699px;" width="22" height="36" viewBox="0 0 22 36"><rect x="4" y="4" width="17" height="31" rx="5.5" fill="#3a4250" opacity="0.55" filter="url(#fth)"/>
<rect x="2.5" y="2.5" width="17" height="30" rx="5" fill="url(#gthumb)" stroke="#50545a" stroke-width="1.2"/>
<rect x="4.5" y="16.5" width="13" height="3.5" fill="#a8b4c4" opacity="0.5"/><rect x="5" y="17.3" width="12" height="1.8" fill="#34507c"/></svg>
<svg style="position:absolute;left:921px;top:733px;" width="16" height="16" viewBox="0 0 16 16"><path d="M1 5 L8 13.5 L15 5" fill="none" stroke="#7a7e84" stroke-width="1.5"/>
<path d="M8 10 L14.5 1.5 L1.5 1.5 Z" fill="url(#garr)" stroke="#707478" stroke-width="1.2" stroke-linejoin="round"/></svg>
<div style="left:947px;top:439px;width:34px;height:313px;background:linear-gradient(90deg,#fdfeff 0%,#e8eefa 35%,#c6d8f6 65%,#aec8f2 100%);"></div>
<div style="left:981px;top:439px;width:2px;height:314px;background:#a4b4cc;"></div>
<div style="left:947px;top:752px;width:34px;height:1px;background:#8494a8;"></div>
<span class="t" style="left:765px;width:400px;text-align:center;top:443.84px;font-size:12px;line-height:12px;font-weight:400;color:#000;transform:scaleX(0.9);">26</span>
<div style="left:950px;top:459px;width:29px;height:17px;box-sizing:border-box;border-top:2px solid #7c7c7c;border-left:2px solid #7c7c7c;border-right:1px solid #fafafa;border-bottom:1px solid #fafafa;background:#000;"></div>
<span class="t" style="left:574.5px;width:400px;text-align:right;top:464.54px;font-size:10px;line-height:10px;font-weight:400;color:#fff;transform-origin:100% 0;">0</span>
<div style="left:950px;top:479px;width:29px;height:53px;box-sizing:border-box;border-top:1px solid #7a7a7a;border-left:2px solid #7a7a7a;border-right:1px solid #fafafa;border-bottom:2px solid #fafafa;background:#000;"></div>
<div style="left:952px;top:480px;width:26px;height:50px;background:#fcd898;"></div>
<div class="t" style="left:953px;top:480px;font-size:12.2px;line-height:13px;color:#000010;transform:scaleX(0.78);-webkit-text-stroke:0.3px #000010;transform-origin:0 0;white-space:pre">sin...
Di...</div>
<svg style="position:absolute;left:953px;top:507px;" width="24" height="23" viewBox="0 0 24 23"><path d="M0 3 Q0 0 3 0 L21 0 Q24 0 24 3 L24 23 L0 23 Z" fill="url(#gspot)"/>
<path d="M12 3 L3 19 L12 20 Z" fill="#b8e0fa" opacity="0.45"/>
<path d="M11.5 3 L14.5 2.5 L23 19 L15 21 Z" fill="#d8f0fc" opacity="0.85"/>
<ellipse cx="7.5" cy="18.5" rx="5.5" ry="3" fill="#d0ecfc" opacity="0.8"/>
<ellipse cx="19" cy="19.5" rx="4.5" ry="2.5" fill="#f4faff" opacity="0.9"/></svg>
<svg style="position:absolute;left:957px;top:537px;" width="16" height="16" viewBox="0 0 16 16"><path d="M1 10.5 L8 1.5 L15 10.5" fill="none" stroke="#7a7e84" stroke-width="1.5"/>
<path d="M8 5 L14.5 13.5 L1.5 13.5 Z" fill="url(#garr)" stroke="#707478" stroke-width="1.2" stroke-linejoin="round"/></svg>
<svg style="position:absolute;left:947px;top:569px;" width="34" height="166" viewBox="0 0 34 166"><rect x="3" y="2" width="12" height="1" fill="#5a6068"/><rect x="3" y="3" width="12" height="1" fill="#ffffff" opacity="0.8"/><rect x="20" y="2" width="13" height="1" fill="#5a6068"/><rect x="20" y="3" width="13" height="1" fill="#ffffff" opacity="0.8"/><rect x="3" y="9" width="12" height="1" fill="#5a6068"/><rect x="3" y="10" width="12" height="1" fill="#ffffff" opacity="0.8"/><rect x="20" y="9" width="13" height="1" fill="#5a6068"/><rect x="20" y="10" width="13" height="1" fill="#ffffff" opacity="0.8"/><rect x="3" y="17" width="12" height="1" fill="#5a6068"/><rect x="3" y="18" width="12" height="1" fill="#ffffff" opacity="0.8"/><rect x="20" y="17" width="13" height="1" fill="#5a6068"/><rect x="20" y="18" width="13" height="1" fill="#ffffff" opacity="0.8"/><rect x="3" y="24" width="12" height="1" fill="#5a6068"/><rect x="3" y="25" width="12" height="1" fill="#ffffff" opacity="0.8"/><rect x="20" y="24" width="13" height="1" fill="#5a6068"/><rect x="20" y="25" width="13" height="1" fill="#ffffff" opacity="0.8"/><rect x="3" y="32" width="12" height="1" fill="#5a6068"/><rect x="3" y="33" width="12" height="1" fill="#ffffff" opacity="0.8"/><rect x="20" y="32" width="13" height="1" fill="#5a6068"/><rect x="20" y="33" width="13" height="1" fill="#ffffff" opacity="0.8"/><rect x="3" y="39" width="12" height="1" fill="#5a6068"/><rect x="3" y="40" width="12" height="1" fill="#ffffff" opacity="0.8"/><rect x="20" y="39" width="13" height="1" fill="#5a6068"/><rect x="20" y="40" width="13" height="1" fill="#ffffff" opacity="0.8"/><rect x="3" y="47" width="12" height="1" fill="#5a6068"/><rect x="3" y="48" width="12" height="1" fill="#ffffff" opacity="0.8"/><rect x="20" y="47" width="13" height="1" fill="#5a6068"/><rect x="20" y="48" width="13" height="1" fill="#ffffff" opacity="0.8"/><rect x="3" y="54" width="12" height="1" fill="#5a6068"/><rect x="3" y="55" width="12" height="1" fill="#ffffff" opacity="0.8"/><rect x="20" y="54" width="13" height="1" fill="#5a6068"/><rect x="20" y="55" width="13" height="1" fill="#ffffff" opacity="0.8"/><rect x="3" y="62" width="12" height="1" fill="#5a6068"/><rect x="3" y="63" width="12" height="1" fill="#ffffff" opacity="0.8"/><rect x="20" y="62" width="13" height="1" fill="#5a6068"/><rect x="20" y="63" width="13" height="1" fill="#ffffff" opacity="0.8"/><rect x="3" y="69" width="12" height="1" fill="#5a6068"/><rect x="3" y="70" width="12" height="1" fill="#ffffff" opacity="0.8"/><rect x="20" y="69" width="13" height="1" fill="#5a6068"/><rect x="20" y="70" width="13" height="1" fill="#ffffff" opacity="0.8"/><rect x="3" y="77" width="12" height="1" fill="#5a6068"/><rect x="3" y="78" width="12" height="1" fill="#ffffff" opacity="0.8"/><rect x="20" y="77" width="13" height="1" fill="#5a6068"/><rect x="20" y="78" width="13" height="1" fill="#ffffff" opacity="0.8"/><rect x="3" y="84" width="12" height="1" fill="#5a6068"/><rect x="3" y="85" width="12" height="1" fill="#ffffff" opacity="0.8"/><rect x="20" y="84" width="13" height="1" fill="#5a6068"/><rect x="20" y="85" width="13" height="1" fill="#ffffff" opacity="0.8"/><rect x="3" y="92" width="12" height="1" fill="#5a6068"/><rect x="3" y="93" width="12" height="1" fill="#ffffff" opacity="0.8"/><rect x="20" y="92" width="13" height="1" fill="#5a6068"/><rect x="20" y="93" width="13" height="1" fill="#ffffff" opacity="0.8"/><rect x="3" y="99" width="12" height="1" fill="#5a6068"/><rect x="3" y="100" width="12" height="1" fill="#ffffff" opacity="0.8"/><rect x="20" y="99" width="13" height="1" fill="#5a6068"/><rect x="20" y="100" width="13" height="1" fill="#ffffff" opacity="0.8"/><rect x="3" y="107" width="12" height="1" fill="#5a6068"/><rect x="3" y="108" width="12" height="1" fill="#ffffff" opacity="0.8"/><rect x="20" y="107" width="13" height="1" fill="#5a6068"/><rect x="20" y="108" width="13" height="1" fill="#ffffff" opacity="0.8"/><rect x="3" y="114" width="12" height="1" fill="#5a6068"/><rect x="3" y="115" width="12" height="1" fill="#ffffff" opacity="0.8"/><rect x="20" y="114" width="13" height="1" fill="#5a6068"/><rect x="20" y="115" width="13" height="1" fill="#ffffff" opacity="0.8"/><rect x="3" y="122" width="12" height="1" fill="#5a6068"/><rect x="3" y="123" width="12" height="1" fill="#ffffff" opacity="0.8"/><rect x="20" y="122" width="13" height="1" fill="#5a6068"/><rect x="20" y="123" width="13" height="1" fill="#ffffff" opacity="0.8"/><rect x="3" y="129" width="12" height="1" fill="#5a6068"/><rect x="3" y="130" width="12" height="1" fill="#ffffff" opacity="0.8"/><rect x="20" y="129" width="13" height="1" fill="#5a6068"/><rect x="20" y="130" width="13" height="1" fill="#ffffff" opacity="0.8"/><rect x="3" y="137" width="12" height="1" fill="#5a6068"/><rect x="3" y="138" width="12" height="1" fill="#ffffff" opacity="0.8"/><rect x="20" y="137" width="13" height="1" fill="#5a6068"/><rect x="20" y="138" width="13" height="1" fill="#ffffff" opacity="0.8"/><rect x="3" y="144" width="12" height="1" fill="#5a6068"/><rect x="3" y="145" width="12" height="1" fill="#ffffff" opacity="0.8"/><rect x="20" y="144" width="13" height="1" fill="#5a6068"/><rect x="20" y="145" width="13" height="1" fill="#ffffff" opacity="0.8"/><rect x="16" y="1" width="4" height="165" fill="#eceef0"/>
<rect x="15" y="0" width="1.3" height="140" fill="#000"/><rect x="15" y="0" width="4" height="1.5" fill="#000"/></svg>
<svg style="position:absolute;left:954px;top:699px;" width="22" height="36" viewBox="0 0 22 36"><rect x="4" y="4" width="17" height="31" rx="5.5" fill="#3a4250" opacity="0.55" filter="url(#fth)"/>
<rect x="2.5" y="2.5" width="17" height="30" rx="5" fill="url(#gthumb)" stroke="#50545a" stroke-width="1.2"/>
<rect x="4.5" y="16.5" width="13" height="3.5" fill="#a8b4c4" opacity="0.5"/><rect x="5" y="17.3" width="12" height="1.8" fill="#34507c"/></svg>
<svg style="position:absolute;left:957px;top:733px;" width="16" height="16" viewBox="0 0 16 16"><path d="M1 5 L8 13.5 L15 5" fill="none" stroke="#7a7e84" stroke-width="1.5"/>
<path d="M8 10 L14.5 1.5 L1.5 1.5 Z" fill="url(#garr)" stroke="#707478" stroke-width="1.2" stroke-linejoin="round"/></svg>
<div style="left:983px;top:439px;width:34px;height:313px;background:linear-gradient(90deg,#fdfeff 0%,#e8eefa 35%,#c6d8f6 65%,#aec8f2 100%);"></div>
<div style="left:1017px;top:439px;width:2px;height:314px;background:#a4b4cc;"></div>
<div style="left:983px;top:752px;width:34px;height:1px;background:#8494a8;"></div>
<span class="t" style="left:801px;width:400px;text-align:center;top:443.84px;font-size:12px;line-height:12px;font-weight:400;color:#000;transform:scaleX(0.9);">27</span>
<div style="left:986px;top:459px;width:29px;height:17px;box-sizing:border-box;border-top:2px solid #7c7c7c;border-left:2px solid #7c7c7c;border-right:1px solid #fafafa;border-bottom:1px solid #fafafa;background:#000;"></div>
<span class="t" style="left:610.5px;width:400px;text-align:right;top:464.54px;font-size:10px;line-height:10px;font-weight:400;color:#fff;transform-origin:100% 0;">0</span>
<div style="left:986px;top:479px;width:29px;height:53px;box-sizing:border-box;border-top:1px solid #7a7a7a;border-left:2px solid #7a7a7a;border-right:1px solid #fafafa;border-bottom:2px solid #fafafa;background:#000;"></div>
<div style="left:988px;top:480px;width:26px;height:50px;background:#c2d2aa;"></div>
<div class="t" style="left:989px;top:480px;font-size:12.2px;line-height:13px;color:#000010;transform:scaleX(0.78);-webkit-text-stroke:0.3px #000010;transform-origin:0 0;white-space:pre">sin...
Di...</div>
<svg style="position:absolute;left:989px;top:507px;" width="24" height="23" viewBox="0 0 24 23"><path d="M0 3 Q0 0 3 0 L21 0 Q24 0 24 3 L24 23 L0 23 Z" fill="url(#gspot)"/>
<path d="M12 3 L3 19 L12 20 Z" fill="#b8e0fa" opacity="0.45"/>
<path d="M11.5 3 L14.5 2.5 L23 19 L15 21 Z" fill="#d8f0fc" opacity="0.85"/>
<ellipse cx="7.5" cy="18.5" rx="5.5" ry="3" fill="#d0ecfc" opacity="0.8"/>
<ellipse cx="19" cy="19.5" rx="4.5" ry="2.5" fill="#f4faff" opacity="0.9"/></svg>
<svg style="position:absolute;left:993px;top:537px;" width="16" height="16" viewBox="0 0 16 16"><path d="M1 10.5 L8 1.5 L15 10.5" fill="none" stroke="#7a7e84" stroke-width="1.5"/>
<path d="M8 5 L14.5 13.5 L1.5 13.5 Z" fill="url(#garr)" stroke="#707478" stroke-width="1.2" stroke-linejoin="round"/></svg>
<svg style="position:absolute;left:983px;top:569px;" width="34" height="166" viewBox="0 0 34 166"><rect x="3" y="2" width="12" height="1" fill="#5a6068"/><rect x="3" y="3" width="12" height="1" fill="#ffffff" opacity="0.8"/><rect x="20" y="2" width="13" height="1" fill="#5a6068"/><rect x="20" y="3" width="13" height="1" fill="#ffffff" opacity="0.8"/><rect x="3" y="9" width="12" height="1" fill="#5a6068"/><rect x="3" y="10" width="12" height="1" fill="#ffffff" opacity="0.8"/><rect x="20" y="9" width="13" height="1" fill="#5a6068"/><rect x="20" y="10" width="13" height="1" fill="#ffffff" opacity="0.8"/><rect x="3" y="17" width="12" height="1" fill="#5a6068"/><rect x="3" y="18" width="12" height="1" fill="#ffffff" opacity="0.8"/><rect x="20" y="17" width="13" height="1" fill="#5a6068"/><rect x="20" y="18" width="13" height="1" fill="#ffffff" opacity="0.8"/><rect x="3" y="24" width="12" height="1" fill="#5a6068"/><rect x="3" y="25" width="12" height="1" fill="#ffffff" opacity="0.8"/><rect x="20" y="24" width="13" height="1" fill="#5a6068"/><rect x="20" y="25" width="13" height="1" fill="#ffffff" opacity="0.8"/><rect x="3" y="32" width="12" height="1" fill="#5a6068"/><rect x="3" y="33" width="12" height="1" fill="#ffffff" opacity="0.8"/><rect x="20" y="32" width="13" height="1" fill="#5a6068"/><rect x="20" y="33" width="13" height="1" fill="#ffffff" opacity="0.8"/><rect x="3" y="39" width="12" height="1" fill="#5a6068"/><rect x="3" y="40" width="12" height="1" fill="#ffffff" opacity="0.8"/><rect x="20" y="39" width="13" height="1" fill="#5a6068"/><rect x="20" y="40" width="13" height="1" fill="#ffffff" opacity="0.8"/><rect x="3" y="47" width="12" height="1" fill="#5a6068"/><rect x="3" y="48" width="12" height="1" fill="#ffffff" opacity="0.8"/><rect x="20" y="47" width="13" height="1" fill="#5a6068"/><rect x="20" y="48" width="13" height="1" fill="#ffffff" opacity="0.8"/><rect x="3" y="54" width="12" height="1" fill="#5a6068"/><rect x="3" y="55" width="12" height="1" fill="#ffffff" opacity="0.8"/><rect x="20" y="54" width="13" height="1" fill="#5a6068"/><rect x="20" y="55" width="13" height="1" fill="#ffffff" opacity="0.8"/><rect x="3" y="62" width="12" height="1" fill="#5a6068"/><rect x="3" y="63" width="12" height="1" fill="#ffffff" opacity="0.8"/><rect x="20" y="62" width="13" height="1" fill="#5a6068"/><rect x="20" y="63" width="13" height="1" fill="#ffffff" opacity="0.8"/><rect x="3" y="69" width="12" height="1" fill="#5a6068"/><rect x="3" y="70" width="12" height="1" fill="#ffffff" opacity="0.8"/><rect x="20" y="69" width="13" height="1" fill="#5a6068"/><rect x="20" y="70" width="13" height="1" fill="#ffffff" opacity="0.8"/><rect x="3" y="77" width="12" height="1" fill="#5a6068"/><rect x="3" y="78" width="12" height="1" fill="#ffffff" opacity="0.8"/><rect x="20" y="77" width="13" height="1" fill="#5a6068"/><rect x="20" y="78" width="13" height="1" fill="#ffffff" opacity="0.8"/><rect x="3" y="84" width="12" height="1" fill="#5a6068"/><rect x="3" y="85" width="12" height="1" fill="#ffffff" opacity="0.8"/><rect x="20" y="84" width="13" height="1" fill="#5a6068"/><rect x="20" y="85" width="13" height="1" fill="#ffffff" opacity="0.8"/><rect x="3" y="92" width="12" height="1" fill="#5a6068"/><rect x="3" y="93" width="12" height="1" fill="#ffffff" opacity="0.8"/><rect x="20" y="92" width="13" height="1" fill="#5a6068"/><rect x="20" y="93" width="13" height="1" fill="#ffffff" opacity="0.8"/><rect x="3" y="99" width="12" height="1" fill="#5a6068"/><rect x="3" y="100" width="12" height="1" fill="#ffffff" opacity="0.8"/><rect x="20" y="99" width="13" height="1" fill="#5a6068"/><rect x="20" y="100" width="13" height="1" fill="#ffffff" opacity="0.8"/><rect x="3" y="107" width="12" height="1" fill="#5a6068"/><rect x="3" y="108" width="12" height="1" fill="#ffffff" opacity="0.8"/><rect x="20" y="107" width="13" height="1" fill="#5a6068"/><rect x="20" y="108" width="13" height="1" fill="#ffffff" opacity="0.8"/><rect x="3" y="114" width="12" height="1" fill="#5a6068"/><rect x="3" y="115" width="12" height="1" fill="#ffffff" opacity="0.8"/><rect x="20" y="114" width="13" height="1" fill="#5a6068"/><rect x="20" y="115" width="13" height="1" fill="#ffffff" opacity="0.8"/><rect x="3" y="122" width="12" height="1" fill="#5a6068"/><rect x="3" y="123" width="12" height="1" fill="#ffffff" opacity="0.8"/><rect x="20" y="122" width="13" height="1" fill="#5a6068"/><rect x="20" y="123" width="13" height="1" fill="#ffffff" opacity="0.8"/><rect x="3" y="129" width="12" height="1" fill="#5a6068"/><rect x="3" y="130" width="12" height="1" fill="#ffffff" opacity="0.8"/><rect x="20" y="129" width="13" height="1" fill="#5a6068"/><rect x="20" y="130" width="13" height="1" fill="#ffffff" opacity="0.8"/><rect x="3" y="137" width="12" height="1" fill="#5a6068"/><rect x="3" y="138" width="12" height="1" fill="#ffffff" opacity="0.8"/><rect x="20" y="137" width="13" height="1" fill="#5a6068"/><rect x="20" y="138" width="13" height="1" fill="#ffffff" opacity="0.8"/><rect x="3" y="144" width="12" height="1" fill="#5a6068"/><rect x="3" y="145" width="12" height="1" fill="#ffffff" opacity="0.8"/><rect x="20" y="144" width="13" height="1" fill="#5a6068"/><rect x="20" y="145" width="13" height="1" fill="#ffffff" opacity="0.8"/><rect x="16" y="1" width="4" height="165" fill="#eceef0"/>
<rect x="15" y="0" width="1.3" height="140" fill="#000"/><rect x="15" y="0" width="4" height="1.5" fill="#000"/></svg>
<svg style="position:absolute;left:990px;top:699px;" width="22" height="36" viewBox="0 0 22 36"><rect x="4" y="4" width="17" height="31" rx="5.5" fill="#3a4250" opacity="0.55" filter="url(#fth)"/>
<rect x="2.5" y="2.5" width="17" height="30" rx="5" fill="url(#gthumb)" stroke="#50545a" stroke-width="1.2"/>
<rect x="4.5" y="16.5" width="13" height="3.5" fill="#a8b4c4" opacity="0.5"/><rect x="5" y="17.3" width="12" height="1.8" fill="#34507c"/></svg>
<svg style="position:absolute;left:993px;top:733px;" width="16" height="16" viewBox="0 0 16 16"><path d="M1 5 L8 13.5 L15 5" fill="none" stroke="#7a7e84" stroke-width="1.5"/>
<path d="M8 10 L14.5 1.5 L1.5 1.5 Z" fill="url(#garr)" stroke="#707478" stroke-width="1.2" stroke-linejoin="round"/></svg>
<div style="left:1019px;top:439px;width:34px;height:313px;background:linear-gradient(90deg,#fdfeff 0%,#e8eefa 35%,#c6d8f6 65%,#aec8f2 100%);"></div>
<div style="left:1053px;top:439px;width:2px;height:314px;background:#a4b4cc;"></div>
<div style="left:1019px;top:752px;width:34px;height:1px;background:#8494a8;"></div>
<span class="t" style="left:837px;width:400px;text-align:center;top:443.84px;font-size:12px;line-height:12px;font-weight:400;color:#000;transform:scaleX(0.9);">28</span>
<div style="left:1022px;top:459px;width:29px;height:17px;box-sizing:border-box;border-top:2px solid #7c7c7c;border-left:2px solid #7c7c7c;border-right:1px solid #fafafa;border-bottom:1px solid #fafafa;background:#000;"></div>
<span class="t" style="left:646.5px;width:400px;text-align:right;top:464.54px;font-size:10px;line-height:10px;font-weight:400;color:#fff;transform-origin:100% 0;">0</span>
<div style="left:1022px;top:479px;width:29px;height:53px;box-sizing:border-box;border-top:1px solid #7a7a7a;border-left:2px solid #7a7a7a;border-right:1px solid #fafafa;border-bottom:2px solid #fafafa;background:#000;"></div>
<div style="left:1024px;top:480px;width:26px;height:50px;background:#f2a8a8;"></div>
<div class="t" style="left:1025px;top:480px;font-size:12.2px;line-height:13px;color:#000010;transform:scaleX(0.78);-webkit-text-stroke:0.3px #000010;transform-origin:0 0;white-space:pre">sin...
Di...</div>
<svg style="position:absolute;left:1025px;top:507px;" width="24" height="23" viewBox="0 0 24 23"><path d="M0 3 Q0 0 3 0 L21 0 Q24 0 24 3 L24 23 L0 23 Z" fill="url(#gspot)"/>
<path d="M12 3 L3 19 L12 20 Z" fill="#b8e0fa" opacity="0.45"/>
<path d="M11.5 3 L14.5 2.5 L23 19 L15 21 Z" fill="#d8f0fc" opacity="0.85"/>
<ellipse cx="7.5" cy="18.5" rx="5.5" ry="3" fill="#d0ecfc" opacity="0.8"/>
<ellipse cx="19" cy="19.5" rx="4.5" ry="2.5" fill="#f4faff" opacity="0.9"/></svg>
<svg style="position:absolute;left:1029px;top:537px;" width="16" height="16" viewBox="0 0 16 16"><path d="M1 10.5 L8 1.5 L15 10.5" fill="none" stroke="#7a7e84" stroke-width="1.5"/>
<path d="M8 5 L14.5 13.5 L1.5 13.5 Z" fill="url(#garr)" stroke="#707478" stroke-width="1.2" stroke-linejoin="round"/></svg>
<svg style="position:absolute;left:1019px;top:569px;" width="34" height="166" viewBox="0 0 34 166"><rect x="3" y="2" width="12" height="1" fill="#5a6068"/><rect x="3" y="3" width="12" height="1" fill="#ffffff" opacity="0.8"/><rect x="20" y="2" width="13" height="1" fill="#5a6068"/><rect x="20" y="3" width="13" height="1" fill="#ffffff" opacity="0.8"/><rect x="3" y="9" width="12" height="1" fill="#5a6068"/><rect x="3" y="10" width="12" height="1" fill="#ffffff" opacity="0.8"/><rect x="20" y="9" width="13" height="1" fill="#5a6068"/><rect x="20" y="10" width="13" height="1" fill="#ffffff" opacity="0.8"/><rect x="3" y="17" width="12" height="1" fill="#5a6068"/><rect x="3" y="18" width="12" height="1" fill="#ffffff" opacity="0.8"/><rect x="20" y="17" width="13" height="1" fill="#5a6068"/><rect x="20" y="18" width="13" height="1" fill="#ffffff" opacity="0.8"/><rect x="3" y="24" width="12" height="1" fill="#5a6068"/><rect x="3" y="25" width="12" height="1" fill="#ffffff" opacity="0.8"/><rect x="20" y="24" width="13" height="1" fill="#5a6068"/><rect x="20" y="25" width="13" height="1" fill="#ffffff" opacity="0.8"/><rect x="3" y="32" width="12" height="1" fill="#5a6068"/><rect x="3" y="33" width="12" height="1" fill="#ffffff" opacity="0.8"/><rect x="20" y="32" width="13" height="1" fill="#5a6068"/><rect x="20" y="33" width="13" height="1" fill="#ffffff" opacity="0.8"/><rect x="3" y="39" width="12" height="1" fill="#5a6068"/><rect x="3" y="40" width="12" height="1" fill="#ffffff" opacity="0.8"/><rect x="20" y="39" width="13" height="1" fill="#5a6068"/><rect x="20" y="40" width="13" height="1" fill="#ffffff" opacity="0.8"/><rect x="3" y="47" width="12" height="1" fill="#5a6068"/><rect x="3" y="48" width="12" height="1" fill="#ffffff" opacity="0.8"/><rect x="20" y="47" width="13" height="1" fill="#5a6068"/><rect x="20" y="48" width="13" height="1" fill="#ffffff" opacity="0.8"/><rect x="3" y="54" width="12" height="1" fill="#5a6068"/><rect x="3" y="55" width="12" height="1" fill="#ffffff" opacity="0.8"/><rect x="20" y="54" width="13" height="1" fill="#5a6068"/><rect x="20" y="55" width="13" height="1" fill="#ffffff" opacity="0.8"/><rect x="3" y="62" width="12" height="1" fill="#5a6068"/><rect x="3" y="63" width="12" height="1" fill="#ffffff" opacity="0.8"/><rect x="20" y="62" width="13" height="1" fill="#5a6068"/><rect x="20" y="63" width="13" height="1" fill="#ffffff" opacity="0.8"/><rect x="3" y="69" width="12" height="1" fill="#5a6068"/><rect x="3" y="70" width="12" height="1" fill="#ffffff" opacity="0.8"/><rect x="20" y="69" width="13" height="1" fill="#5a6068"/><rect x="20" y="70" width="13" height="1" fill="#ffffff" opacity="0.8"/><rect x="3" y="77" width="12" height="1" fill="#5a6068"/><rect x="3" y="78" width="12" height="1" fill="#ffffff" opacity="0.8"/><rect x="20" y="77" width="13" height="1" fill="#5a6068"/><rect x="20" y="78" width="13" height="1" fill="#ffffff" opacity="0.8"/><rect x="3" y="84" width="12" height="1" fill="#5a6068"/><rect x="3" y="85" width="12" height="1" fill="#ffffff" opacity="0.8"/><rect x="20" y="84" width="13" height="1" fill="#5a6068"/><rect x="20" y="85" width="13" height="1" fill="#ffffff" opacity="0.8"/><rect x="3" y="92" width="12" height="1" fill="#5a6068"/><rect x="3" y="93" width="12" height="1" fill="#ffffff" opacity="0.8"/><rect x="20" y="92" width="13" height="1" fill="#5a6068"/><rect x="20" y="93" width="13" height="1" fill="#ffffff" opacity="0.8"/><rect x="3" y="99" width="12" height="1" fill="#5a6068"/><rect x="3" y="100" width="12" height="1" fill="#ffffff" opacity="0.8"/><rect x="20" y="99" width="13" height="1" fill="#5a6068"/><rect x="20" y="100" width="13" height="1" fill="#ffffff" opacity="0.8"/><rect x="3" y="107" width="12" height="1" fill="#5a6068"/><rect x="3" y="108" width="12" height="1" fill="#ffffff" opacity="0.8"/><rect x="20" y="107" width="13" height="1" fill="#5a6068"/><rect x="20" y="108" width="13" height="1" fill="#ffffff" opacity="0.8"/><rect x="3" y="114" width="12" height="1" fill="#5a6068"/><rect x="3" y="115" width="12" height="1" fill="#ffffff" opacity="0.8"/><rect x="20" y="114" width="13" height="1" fill="#5a6068"/><rect x="20" y="115" width="13" height="1" fill="#ffffff" opacity="0.8"/><rect x="3" y="122" width="12" height="1" fill="#5a6068"/><rect x="3" y="123" width="12" height="1" fill="#ffffff" opacity="0.8"/><rect x="20" y="122" width="13" height="1" fill="#5a6068"/><rect x="20" y="123" width="13" height="1" fill="#ffffff" opacity="0.8"/><rect x="3" y="129" width="12" height="1" fill="#5a6068"/><rect x="3" y="130" width="12" height="1" fill="#ffffff" opacity="0.8"/><rect x="20" y="129" width="13" height="1" fill="#5a6068"/><rect x="20" y="130" width="13" height="1" fill="#ffffff" opacity="0.8"/><rect x="3" y="137" width="12" height="1" fill="#5a6068"/><rect x="3" y="138" width="12" height="1" fill="#ffffff" opacity="0.8"/><rect x="20" y="137" width="13" height="1" fill="#5a6068"/><rect x="20" y="138" width="13" height="1" fill="#ffffff" opacity="0.8"/><rect x="3" y="144" width="12" height="1" fill="#5a6068"/><rect x="3" y="145" width="12" height="1" fill="#ffffff" opacity="0.8"/><rect x="20" y="144" width="13" height="1" fill="#5a6068"/><rect x="20" y="145" width="13" height="1" fill="#ffffff" opacity="0.8"/><rect x="16" y="1" width="4" height="165" fill="#eceef0"/>
<rect x="15" y="0" width="1.3" height="140" fill="#000"/><rect x="15" y="0" width="4" height="1.5" fill="#000"/></svg>
<svg style="position:absolute;left:1026px;top:699px;" width="22" height="36" viewBox="0 0 22 36"><rect x="4" y="4" width="17" height="31" rx="5.5" fill="#3a4250" opacity="0.55" filter="url(#fth)"/>
<rect x="2.5" y="2.5" width="17" height="30" rx="5" fill="url(#gthumb)" stroke="#50545a" stroke-width="1.2"/>
<rect x="4.5" y="16.5" width="13" height="3.5" fill="#a8b4c4" opacity="0.5"/><rect x="5" y="17.3" width="12" height="1.8" fill="#34507c"/></svg>
<svg style="position:absolute;left:1029px;top:733px;" width="16" height="16" viewBox="0 0 16 16"><path d="M1 5 L8 13.5 L15 5" fill="none" stroke="#7a7e84" stroke-width="1.5"/>
<path d="M8 10 L14.5 1.5 L1.5 1.5 Z" fill="url(#garr)" stroke="#707478" stroke-width="1.2" stroke-linejoin="round"/></svg>
<div style="left:1055px;top:439px;width:34px;height:313px;background:linear-gradient(90deg,#fdfeff 0%,#e8eefa 35%,#c6d8f6 65%,#aec8f2 100%);"></div>
<div style="left:1089px;top:439px;width:2px;height:314px;background:#a4b4cc;"></div>
<div style="left:1055px;top:752px;width:34px;height:1px;background:#8494a8;"></div>
<span class="t" style="left:873px;width:400px;text-align:center;top:443.84px;font-size:12px;line-height:12px;font-weight:400;color:#000;transform:scaleX(0.9);">29</span>
<div style="left:1058px;top:459px;width:29px;height:17px;box-sizing:border-box;border-top:2px solid #7c7c7c;border-left:2px solid #7c7c7c;border-right:1px solid #fafafa;border-bottom:1px solid #fafafa;background:#000;"></div>
<span class="t" style="left:682.5px;width:400px;text-align:right;top:464.54px;font-size:10px;line-height:10px;font-weight:400;color:#fff;transform-origin:100% 0;">0</span>
<div style="left:1058px;top:479px;width:29px;height:53px;box-sizing:border-box;border-top:1px solid #7a7a7a;border-left:2px solid #7a7a7a;border-right:1px solid #fafafa;border-bottom:2px solid #fafafa;background:#000;"></div>
<div style="left:1060px;top:480px;width:26px;height:50px;background:#c2aaea;"></div>
<div class="t" style="left:1061px;top:480px;font-size:12.2px;line-height:13px;color:#000010;transform:scaleX(0.78);-webkit-text-stroke:0.3px #000010;transform-origin:0 0;white-space:pre">sin...
Di...</div>
<svg style="position:absolute;left:1061px;top:507px;" width="24" height="23" viewBox="0 0 24 23"><path d="M0 3 Q0 0 3 0 L21 0 Q24 0 24 3 L24 23 L0 23 Z" fill="url(#gspot)"/>
<path d="M12 3 L3 19 L12 20 Z" fill="#b8e0fa" opacity="0.45"/>
<path d="M11.5 3 L14.5 2.5 L23 19 L15 21 Z" fill="#d8f0fc" opacity="0.85"/>
<ellipse cx="7.5" cy="18.5" rx="5.5" ry="3" fill="#d0ecfc" opacity="0.8"/>
<ellipse cx="19" cy="19.5" rx="4.5" ry="2.5" fill="#f4faff" opacity="0.9"/></svg>
<svg style="position:absolute;left:1065px;top:537px;" width="16" height="16" viewBox="0 0 16 16"><path d="M1 10.5 L8 1.5 L15 10.5" fill="none" stroke="#7a7e84" stroke-width="1.5"/>
<path d="M8 5 L14.5 13.5 L1.5 13.5 Z" fill="url(#garr)" stroke="#707478" stroke-width="1.2" stroke-linejoin="round"/></svg>
<svg style="position:absolute;left:1055px;top:569px;" width="34" height="166" viewBox="0 0 34 166"><rect x="3" y="2" width="12" height="1" fill="#5a6068"/><rect x="3" y="3" width="12" height="1" fill="#ffffff" opacity="0.8"/><rect x="20" y="2" width="13" height="1" fill="#5a6068"/><rect x="20" y="3" width="13" height="1" fill="#ffffff" opacity="0.8"/><rect x="3" y="9" width="12" height="1" fill="#5a6068"/><rect x="3" y="10" width="12" height="1" fill="#ffffff" opacity="0.8"/><rect x="20" y="9" width="13" height="1" fill="#5a6068"/><rect x="20" y="10" width="13" height="1" fill="#ffffff" opacity="0.8"/><rect x="3" y="17" width="12" height="1" fill="#5a6068"/><rect x="3" y="18" width="12" height="1" fill="#ffffff" opacity="0.8"/><rect x="20" y="17" width="13" height="1" fill="#5a6068"/><rect x="20" y="18" width="13" height="1" fill="#ffffff" opacity="0.8"/><rect x="3" y="24" width="12" height="1" fill="#5a6068"/><rect x="3" y="25" width="12" height="1" fill="#ffffff" opacity="0.8"/><rect x="20" y="24" width="13" height="1" fill="#5a6068"/><rect x="20" y="25" width="13" height="1" fill="#ffffff" opacity="0.8"/><rect x="3" y="32" width="12" height="1" fill="#5a6068"/><rect x="3" y="33" width="12" height="1" fill="#ffffff" opacity="0.8"/><rect x="20" y="32" width="13" height="1" fill="#5a6068"/><rect x="20" y="33" width="13" height="1" fill="#ffffff" opacity="0.8"/><rect x="3" y="39" width="12" height="1" fill="#5a6068"/><rect x="3" y="40" width="12" height="1" fill="#ffffff" opacity="0.8"/><rect x="20" y="39" width="13" height="1" fill="#5a6068"/><rect x="20" y="40" width="13" height="1" fill="#ffffff" opacity="0.8"/><rect x="3" y="47" width="12" height="1" fill="#5a6068"/><rect x="3" y="48" width="12" height="1" fill="#ffffff" opacity="0.8"/><rect x="20" y="47" width="13" height="1" fill="#5a6068"/><rect x="20" y="48" width="13" height="1" fill="#ffffff" opacity="0.8"/><rect x="3" y="54" width="12" height="1" fill="#5a6068"/><rect x="3" y="55" width="12" height="1" fill="#ffffff" opacity="0.8"/><rect x="20" y="54" width="13" height="1" fill="#5a6068"/><rect x="20" y="55" width="13" height="1" fill="#ffffff" opacity="0.8"/><rect x="3" y="62" width="12" height="1" fill="#5a6068"/><rect x="3" y="63" width="12" height="1" fill="#ffffff" opacity="0.8"/><rect x="20" y="62" width="13" height="1" fill="#5a6068"/><rect x="20" y="63" width="13" height="1" fill="#ffffff" opacity="0.8"/><rect x="3" y="69" width="12" height="1" fill="#5a6068"/><rect x="3" y="70" width="12" height="1" fill="#ffffff" opacity="0.8"/><rect x="20" y="69" width="13" height="1" fill="#5a6068"/><rect x="20" y="70" width="13" height="1" fill="#ffffff" opacity="0.8"/><rect x="3" y="77" width="12" height="1" fill="#5a6068"/><rect x="3" y="78" width="12" height="1" fill="#ffffff" opacity="0.8"/><rect x="20" y="77" width="13" height="1" fill="#5a6068"/><rect x="20" y="78" width="13" height="1" fill="#ffffff" opacity="0.8"/><rect x="3" y="84" width="12" height="1" fill="#5a6068"/><rect x="3" y="85" width="12" height="1" fill="#ffffff" opacity="0.8"/><rect x="20" y="84" width="13" height="1" fill="#5a6068"/><rect x="20" y="85" width="13" height="1" fill="#ffffff" opacity="0.8"/><rect x="3" y="92" width="12" height="1" fill="#5a6068"/><rect x="3" y="93" width="12" height="1" fill="#ffffff" opacity="0.8"/><rect x="20" y="92" width="13" height="1" fill="#5a6068"/><rect x="20" y="93" width="13" height="1" fill="#ffffff" opacity="0.8"/><rect x="3" y="99" width="12" height="1" fill="#5a6068"/><rect x="3" y="100" width="12" height="1" fill="#ffffff" opacity="0.8"/><rect x="20" y="99" width="13" height="1" fill="#5a6068"/><rect x="20" y="100" width="13" height="1" fill="#ffffff" opacity="0.8"/><rect x="3" y="107" width="12" height="1" fill="#5a6068"/><rect x="3" y="108" width="12" height="1" fill="#ffffff" opacity="0.8"/><rect x="20" y="107" width="13" height="1" fill="#5a6068"/><rect x="20" y="108" width="13" height="1" fill="#ffffff" opacity="0.8"/><rect x="3" y="114" width="12" height="1" fill="#5a6068"/><rect x="3" y="115" width="12" height="1" fill="#ffffff" opacity="0.8"/><rect x="20" y="114" width="13" height="1" fill="#5a6068"/><rect x="20" y="115" width="13" height="1" fill="#ffffff" opacity="0.8"/><rect x="3" y="122" width="12" height="1" fill="#5a6068"/><rect x="3" y="123" width="12" height="1" fill="#ffffff" opacity="0.8"/><rect x="20" y="122" width="13" height="1" fill="#5a6068"/><rect x="20" y="123" width="13" height="1" fill="#ffffff" opacity="0.8"/><rect x="3" y="129" width="12" height="1" fill="#5a6068"/><rect x="3" y="130" width="12" height="1" fill="#ffffff" opacity="0.8"/><rect x="20" y="129" width="13" height="1" fill="#5a6068"/><rect x="20" y="130" width="13" height="1" fill="#ffffff" opacity="0.8"/><rect x="3" y="137" width="12" height="1" fill="#5a6068"/><rect x="3" y="138" width="12" height="1" fill="#ffffff" opacity="0.8"/><rect x="20" y="137" width="13" height="1" fill="#5a6068"/><rect x="20" y="138" width="13" height="1" fill="#ffffff" opacity="0.8"/><rect x="3" y="144" width="12" height="1" fill="#5a6068"/><rect x="3" y="145" width="12" height="1" fill="#ffffff" opacity="0.8"/><rect x="20" y="144" width="13" height="1" fill="#5a6068"/><rect x="20" y="145" width="13" height="1" fill="#ffffff" opacity="0.8"/><rect x="16" y="1" width="4" height="165" fill="#eceef0"/>
<rect x="15" y="0" width="1.3" height="140" fill="#000"/><rect x="15" y="0" width="4" height="1.5" fill="#000"/></svg>
<svg style="position:absolute;left:1062px;top:699px;" width="22" height="36" viewBox="0 0 22 36"><rect x="4" y="4" width="17" height="31" rx="5.5" fill="#3a4250" opacity="0.55" filter="url(#fth)"/>
<rect x="2.5" y="2.5" width="17" height="30" rx="5" fill="url(#gthumb)" stroke="#50545a" stroke-width="1.2"/>
<rect x="4.5" y="16.5" width="13" height="3.5" fill="#a8b4c4" opacity="0.5"/><rect x="5" y="17.3" width="12" height="1.8" fill="#34507c"/></svg>
<svg style="position:absolute;left:1065px;top:733px;" width="16" height="16" viewBox="0 0 16 16"><path d="M1 5 L8 13.5 L15 5" fill="none" stroke="#7a7e84" stroke-width="1.5"/>
<path d="M8 10 L14.5 1.5 L1.5 1.5 Z" fill="url(#garr)" stroke="#707478" stroke-width="1.2" stroke-linejoin="round"/></svg>
<div style="left:1091px;top:439px;width:34px;height:313px;background:linear-gradient(90deg,#fdfeff 0%,#e8eefa 35%,#c6d8f6 65%,#aec8f2 100%);"></div>
<div style="left:1125px;top:439px;width:2px;height:314px;background:#a4b4cc;"></div>
<div style="left:1091px;top:752px;width:34px;height:1px;background:#8494a8;"></div>
<span class="t" style="left:909px;width:400px;text-align:center;top:443.84px;font-size:12px;line-height:12px;font-weight:400;color:#000;transform:scaleX(0.9);">30</span>
<div style="left:1094px;top:459px;width:29px;height:17px;box-sizing:border-box;border-top:2px solid #7c7c7c;border-left:2px solid #7c7c7c;border-right:1px solid #fafafa;border-bottom:1px solid #fafafa;background:#000;"></div>
<span class="t" style="left:718.5px;width:400px;text-align:right;top:464.54px;font-size:10px;line-height:10px;font-weight:400;color:#fff;transform-origin:100% 0;">0</span>
<div style="left:1094px;top:479px;width:29px;height:53px;box-sizing:border-box;border-top:1px solid #7a7a7a;border-left:2px solid #7a7a7a;border-right:1px solid #fafafa;border-bottom:2px solid #fafafa;background:#000;"></div>
<div style="left:1096px;top:480px;width:26px;height:50px;background:#aacaba;"></div>
<div class="t" style="left:1097px;top:480px;font-size:12.2px;line-height:13px;color:#000010;transform:scaleX(0.78);-webkit-text-stroke:0.3px #000010;transform-origin:0 0;white-space:pre">sin...
Di...</div>
<svg style="position:absolute;left:1097px;top:507px;" width="24" height="23" viewBox="0 0 24 23"><path d="M0 3 Q0 0 3 0 L21 0 Q24 0 24 3 L24 23 L0 23 Z" fill="url(#gspot)"/>
<path d="M12 3 L3 19 L12 20 Z" fill="#b8e0fa" opacity="0.45"/>
<path d="M11.5 3 L14.5 2.5 L23 19 L15 21 Z" fill="#d8f0fc" opacity="0.85"/>
<ellipse cx="7.5" cy="18.5" rx="5.5" ry="3" fill="#d0ecfc" opacity="0.8"/>
<ellipse cx="19" cy="19.5" rx="4.5" ry="2.5" fill="#f4faff" opacity="0.9"/></svg>
<svg style="position:absolute;left:1101px;top:537px;" width="16" height="16" viewBox="0 0 16 16"><path d="M1 10.5 L8 1.5 L15 10.5" fill="none" stroke="#7a7e84" stroke-width="1.5"/>
<path d="M8 5 L14.5 13.5 L1.5 13.5 Z" fill="url(#garr)" stroke="#707478" stroke-width="1.2" stroke-linejoin="round"/></svg>
<svg style="position:absolute;left:1091px;top:569px;" width="34" height="166" viewBox="0 0 34 166"><rect x="3" y="2" width="12" height="1" fill="#5a6068"/><rect x="3" y="3" width="12" height="1" fill="#ffffff" opacity="0.8"/><rect x="20" y="2" width="13" height="1" fill="#5a6068"/><rect x="20" y="3" width="13" height="1" fill="#ffffff" opacity="0.8"/><rect x="3" y="9" width="12" height="1" fill="#5a6068"/><rect x="3" y="10" width="12" height="1" fill="#ffffff" opacity="0.8"/><rect x="20" y="9" width="13" height="1" fill="#5a6068"/><rect x="20" y="10" width="13" height="1" fill="#ffffff" opacity="0.8"/><rect x="3" y="17" width="12" height="1" fill="#5a6068"/><rect x="3" y="18" width="12" height="1" fill="#ffffff" opacity="0.8"/><rect x="20" y="17" width="13" height="1" fill="#5a6068"/><rect x="20" y="18" width="13" height="1" fill="#ffffff" opacity="0.8"/><rect x="3" y="24" width="12" height="1" fill="#5a6068"/><rect x="3" y="25" width="12" height="1" fill="#ffffff" opacity="0.8"/><rect x="20" y="24" width="13" height="1" fill="#5a6068"/><rect x="20" y="25" width="13" height="1" fill="#ffffff" opacity="0.8"/><rect x="3" y="32" width="12" height="1" fill="#5a6068"/><rect x="3" y="33" width="12" height="1" fill="#ffffff" opacity="0.8"/><rect x="20" y="32" width="13" height="1" fill="#5a6068"/><rect x="20" y="33" width="13" height="1" fill="#ffffff" opacity="0.8"/><rect x="3" y="39" width="12" height="1" fill="#5a6068"/><rect x="3" y="40" width="12" height="1" fill="#ffffff" opacity="0.8"/><rect x="20" y="39" width="13" height="1" fill="#5a6068"/><rect x="20" y="40" width="13" height="1" fill="#ffffff" opacity="0.8"/><rect x="3" y="47" width="12" height="1" fill="#5a6068"/><rect x="3" y="48" width="12" height="1" fill="#ffffff" opacity="0.8"/><rect x="20" y="47" width="13" height="1" fill="#5a6068"/><rect x="20" y="48" width="13" height="1" fill="#ffffff" opacity="0.8"/><rect x="3" y="54" width="12" height="1" fill="#5a6068"/><rect x="3" y="55" width="12" height="1" fill="#ffffff" opacity="0.8"/><rect x="20" y="54" width="13" height="1" fill="#5a6068"/><rect x="20" y="55" width="13" height="1" fill="#ffffff" opacity="0.8"/><rect x="3" y="62" width="12" height="1" fill="#5a6068"/><rect x="3" y="63" width="12" height="1" fill="#ffffff" opacity="0.8"/><rect x="20" y="62" width="13" height="1" fill="#5a6068"/><rect x="20" y="63" width="13" height="1" fill="#ffffff" opacity="0.8"/><rect x="3" y="69" width="12" height="1" fill="#5a6068"/><rect x="3" y="70" width="12" height="1" fill="#ffffff" opacity="0.8"/><rect x="20" y="69" width="13" height="1" fill="#5a6068"/><rect x="20" y="70" width="13" height="1" fill="#ffffff" opacity="0.8"/><rect x="3" y="77" width="12" height="1" fill="#5a6068"/><rect x="3" y="78" width="12" height="1" fill="#ffffff" opacity="0.8"/><rect x="20" y="77" width="13" height="1" fill="#5a6068"/><rect x="20" y="78" width="13" height="1" fill="#ffffff" opacity="0.8"/><rect x="3" y="84" width="12" height="1" fill="#5a6068"/><rect x="3" y="85" width="12" height="1" fill="#ffffff" opacity="0.8"/><rect x="20" y="84" width="13" height="1" fill="#5a6068"/><rect x="20" y="85" width="13" height="1" fill="#ffffff" opacity="0.8"/><rect x="3" y="92" width="12" height="1" fill="#5a6068"/><rect x="3" y="93" width="12" height="1" fill="#ffffff" opacity="0.8"/><rect x="20" y="92" width="13" height="1" fill="#5a6068"/><rect x="20" y="93" width="13" height="1" fill="#ffffff" opacity="0.8"/><rect x="3" y="99" width="12" height="1" fill="#5a6068"/><rect x="3" y="100" width="12" height="1" fill="#ffffff" opacity="0.8"/><rect x="20" y="99" width="13" height="1" fill="#5a6068"/><rect x="20" y="100" width="13" height="1" fill="#ffffff" opacity="0.8"/><rect x="3" y="107" width="12" height="1" fill="#5a6068"/><rect x="3" y="108" width="12" height="1" fill="#ffffff" opacity="0.8"/><rect x="20" y="107" width="13" height="1" fill="#5a6068"/><rect x="20" y="108" width="13" height="1" fill="#ffffff" opacity="0.8"/><rect x="3" y="114" width="12" height="1" fill="#5a6068"/><rect x="3" y="115" width="12" height="1" fill="#ffffff" opacity="0.8"/><rect x="20" y="114" width="13" height="1" fill="#5a6068"/><rect x="20" y="115" width="13" height="1" fill="#ffffff" opacity="0.8"/><rect x="3" y="122" width="12" height="1" fill="#5a6068"/><rect x="3" y="123" width="12" height="1" fill="#ffffff" opacity="0.8"/><rect x="20" y="122" width="13" height="1" fill="#5a6068"/><rect x="20" y="123" width="13" height="1" fill="#ffffff" opacity="0.8"/><rect x="3" y="129" width="12" height="1" fill="#5a6068"/><rect x="3" y="130" width="12" height="1" fill="#ffffff" opacity="0.8"/><rect x="20" y="129" width="13" height="1" fill="#5a6068"/><rect x="20" y="130" width="13" height="1" fill="#ffffff" opacity="0.8"/><rect x="3" y="137" width="12" height="1" fill="#5a6068"/><rect x="3" y="138" width="12" height="1" fill="#ffffff" opacity="0.8"/><rect x="20" y="137" width="13" height="1" fill="#5a6068"/><rect x="20" y="138" width="13" height="1" fill="#ffffff" opacity="0.8"/><rect x="3" y="144" width="12" height="1" fill="#5a6068"/><rect x="3" y="145" width="12" height="1" fill="#ffffff" opacity="0.8"/><rect x="20" y="144" width="13" height="1" fill="#5a6068"/><rect x="20" y="145" width="13" height="1" fill="#ffffff" opacity="0.8"/><rect x="16" y="1" width="4" height="165" fill="#eceef0"/>
<rect x="15" y="0" width="1.3" height="140" fill="#000"/><rect x="15" y="0" width="4" height="1.5" fill="#000"/></svg>
<svg style="position:absolute;left:1098px;top:699px;" width="22" height="36" viewBox="0 0 22 36"><rect x="4" y="4" width="17" height="31" rx="5.5" fill="#3a4250" opacity="0.55" filter="url(#fth)"/>
<rect x="2.5" y="2.5" width="17" height="30" rx="5" fill="url(#gthumb)" stroke="#50545a" stroke-width="1.2"/>
<rect x="4.5" y="16.5" width="13" height="3.5" fill="#a8b4c4" opacity="0.5"/><rect x="5" y="17.3" width="12" height="1.8" fill="#34507c"/></svg>
<svg style="position:absolute;left:1101px;top:733px;" width="16" height="16" viewBox="0 0 16 16"><path d="M1 5 L8 13.5 L15 5" fill="none" stroke="#7a7e84" stroke-width="1.5"/>
<path d="M8 10 L14.5 1.5 L1.5 1.5 Z" fill="url(#garr)" stroke="#707478" stroke-width="1.2" stroke-linejoin="round"/></svg>
<div style="left:1127px;top:439px;width:34px;height:313px;background:linear-gradient(90deg,#fdfeff 0%,#e8eefa 35%,#c6d8f6 65%,#aec8f2 100%);"></div>
<div style="left:1161px;top:439px;width:2px;height:314px;background:#a4b4cc;"></div>
<div style="left:1127px;top:752px;width:34px;height:1px;background:#8494a8;"></div>
<span class="t" style="left:945px;width:400px;text-align:center;top:443.84px;font-size:12px;line-height:12px;font-weight:400;color:#000;transform:scaleX(0.9);">31</span>
<div style="left:1130px;top:459px;width:29px;height:17px;box-sizing:border-box;border-top:2px solid #7c7c7c;border-left:2px solid #7c7c7c;border-right:1px solid #fafafa;border-bottom:1px solid #fafafa;background:#000;"></div>
<span class="t" style="left:754.5px;width:400px;text-align:right;top:464.54px;font-size:10px;line-height:10px;font-weight:400;color:#fff;transform-origin:100% 0;">0</span>
<div style="left:1130px;top:479px;width:29px;height:53px;box-sizing:border-box;border-top:1px solid #7a7a7a;border-left:2px solid #7a7a7a;border-right:1px solid #fafafa;border-bottom:2px solid #fafafa;background:#000;"></div>
<div style="left:1132px;top:480px;width:26px;height:50px;background:#f8ba8a;"></div>
<div class="t" style="left:1133px;top:480px;font-size:12.2px;line-height:13px;color:#000010;transform:scaleX(0.78);-webkit-text-stroke:0.3px #000010;transform-origin:0 0;white-space:pre">sin...
Di...</div>
<svg style="position:absolute;left:1133px;top:507px;" width="24" height="23" viewBox="0 0 24 23"><path d="M0 3 Q0 0 3 0 L21 0 Q24 0 24 3 L24 23 L0 23 Z" fill="url(#gspot)"/>
<path d="M12 3 L3 19 L12 20 Z" fill="#b8e0fa" opacity="0.45"/>
<path d="M11.5 3 L14.5 2.5 L23 19 L15 21 Z" fill="#d8f0fc" opacity="0.85"/>
<ellipse cx="7.5" cy="18.5" rx="5.5" ry="3" fill="#d0ecfc" opacity="0.8"/>
<ellipse cx="19" cy="19.5" rx="4.5" ry="2.5" fill="#f4faff" opacity="0.9"/></svg>
<svg style="position:absolute;left:1137px;top:537px;" width="16" height="16" viewBox="0 0 16 16"><path d="M1 10.5 L8 1.5 L15 10.5" fill="none" stroke="#7a7e84" stroke-width="1.5"/>
<path d="M8 5 L14.5 13.5 L1.5 13.5 Z" fill="url(#garr)" stroke="#707478" stroke-width="1.2" stroke-linejoin="round"/></svg>
<svg style="position:absolute;left:1127px;top:569px;" width="34" height="166" viewBox="0 0 34 166"><rect x="3" y="2" width="12" height="1" fill="#5a6068"/><rect x="3" y="3" width="12" height="1" fill="#ffffff" opacity="0.8"/><rect x="20" y="2" width="13" height="1" fill="#5a6068"/><rect x="20" y="3" width="13" height="1" fill="#ffffff" opacity="0.8"/><rect x="3" y="9" width="12" height="1" fill="#5a6068"/><rect x="3" y="10" width="12" height="1" fill="#ffffff" opacity="0.8"/><rect x="20" y="9" width="13" height="1" fill="#5a6068"/><rect x="20" y="10" width="13" height="1" fill="#ffffff" opacity="0.8"/><rect x="3" y="17" width="12" height="1" fill="#5a6068"/><rect x="3" y="18" width="12" height="1" fill="#ffffff" opacity="0.8"/><rect x="20" y="17" width="13" height="1" fill="#5a6068"/><rect x="20" y="18" width="13" height="1" fill="#ffffff" opacity="0.8"/><rect x="3" y="24" width="12" height="1" fill="#5a6068"/><rect x="3" y="25" width="12" height="1" fill="#ffffff" opacity="0.8"/><rect x="20" y="24" width="13" height="1" fill="#5a6068"/><rect x="20" y="25" width="13" height="1" fill="#ffffff" opacity="0.8"/><rect x="3" y="32" width="12" height="1" fill="#5a6068"/><rect x="3" y="33" width="12" height="1" fill="#ffffff" opacity="0.8"/><rect x="20" y="32" width="13" height="1" fill="#5a6068"/><rect x="20" y="33" width="13" height="1" fill="#ffffff" opacity="0.8"/><rect x="3" y="39" width="12" height="1" fill="#5a6068"/><rect x="3" y="40" width="12" height="1" fill="#ffffff" opacity="0.8"/><rect x="20" y="39" width="13" height="1" fill="#5a6068"/><rect x="20" y="40" width="13" height="1" fill="#ffffff" opacity="0.8"/><rect x="3" y="47" width="12" height="1" fill="#5a6068"/><rect x="3" y="48" width="12" height="1" fill="#ffffff" opacity="0.8"/><rect x="20" y="47" width="13" height="1" fill="#5a6068"/><rect x="20" y="48" width="13" height="1" fill="#ffffff" opacity="0.8"/><rect x="3" y="54" width="12" height="1" fill="#5a6068"/><rect x="3" y="55" width="12" height="1" fill="#ffffff" opacity="0.8"/><rect x="20" y="54" width="13" height="1" fill="#5a6068"/><rect x="20" y="55" width="13" height="1" fill="#ffffff" opacity="0.8"/><rect x="3" y="62" width="12" height="1" fill="#5a6068"/><rect x="3" y="63" width="12" height="1" fill="#ffffff" opacity="0.8"/><rect x="20" y="62" width="13" height="1" fill="#5a6068"/><rect x="20" y="63" width="13" height="1" fill="#ffffff" opacity="0.8"/><rect x="3" y="69" width="12" height="1" fill="#5a6068"/><rect x="3" y="70" width="12" height="1" fill="#ffffff" opacity="0.8"/><rect x="20" y="69" width="13" height="1" fill="#5a6068"/><rect x="20" y="70" width="13" height="1" fill="#ffffff" opacity="0.8"/><rect x="3" y="77" width="12" height="1" fill="#5a6068"/><rect x="3" y="78" width="12" height="1" fill="#ffffff" opacity="0.8"/><rect x="20" y="77" width="13" height="1" fill="#5a6068"/><rect x="20" y="78" width="13" height="1" fill="#ffffff" opacity="0.8"/><rect x="3" y="84" width="12" height="1" fill="#5a6068"/><rect x="3" y="85" width="12" height="1" fill="#ffffff" opacity="0.8"/><rect x="20" y="84" width="13" height="1" fill="#5a6068"/><rect x="20" y="85" width="13" height="1" fill="#ffffff" opacity="0.8"/><rect x="3" y="92" width="12" height="1" fill="#5a6068"/><rect x="3" y="93" width="12" height="1" fill="#ffffff" opacity="0.8"/><rect x="20" y="92" width="13" height="1" fill="#5a6068"/><rect x="20" y="93" width="13" height="1" fill="#ffffff" opacity="0.8"/><rect x="3" y="99" width="12" height="1" fill="#5a6068"/><rect x="3" y="100" width="12" height="1" fill="#ffffff" opacity="0.8"/><rect x="20" y="99" width="13" height="1" fill="#5a6068"/><rect x="20" y="100" width="13" height="1" fill="#ffffff" opacity="0.8"/><rect x="3" y="107" width="12" height="1" fill="#5a6068"/><rect x="3" y="108" width="12" height="1" fill="#ffffff" opacity="0.8"/><rect x="20" y="107" width="13" height="1" fill="#5a6068"/><rect x="20" y="108" width="13" height="1" fill="#ffffff" opacity="0.8"/><rect x="3" y="114" width="12" height="1" fill="#5a6068"/><rect x="3" y="115" width="12" height="1" fill="#ffffff" opacity="0.8"/><rect x="20" y="114" width="13" height="1" fill="#5a6068"/><rect x="20" y="115" width="13" height="1" fill="#ffffff" opacity="0.8"/><rect x="3" y="122" width="12" height="1" fill="#5a6068"/><rect x="3" y="123" width="12" height="1" fill="#ffffff" opacity="0.8"/><rect x="20" y="122" width="13" height="1" fill="#5a6068"/><rect x="20" y="123" width="13" height="1" fill="#ffffff" opacity="0.8"/><rect x="3" y="129" width="12" height="1" fill="#5a6068"/><rect x="3" y="130" width="12" height="1" fill="#ffffff" opacity="0.8"/><rect x="20" y="129" width="13" height="1" fill="#5a6068"/><rect x="20" y="130" width="13" height="1" fill="#ffffff" opacity="0.8"/><rect x="3" y="137" width="12" height="1" fill="#5a6068"/><rect x="3" y="138" width="12" height="1" fill="#ffffff" opacity="0.8"/><rect x="20" y="137" width="13" height="1" fill="#5a6068"/><rect x="20" y="138" width="13" height="1" fill="#ffffff" opacity="0.8"/><rect x="3" y="144" width="12" height="1" fill="#5a6068"/><rect x="3" y="145" width="12" height="1" fill="#ffffff" opacity="0.8"/><rect x="20" y="144" width="13" height="1" fill="#5a6068"/><rect x="20" y="145" width="13" height="1" fill="#ffffff" opacity="0.8"/><rect x="16" y="1" width="4" height="165" fill="#eceef0"/>
<rect x="15" y="0" width="1.3" height="140" fill="#000"/><rect x="15" y="0" width="4" height="1.5" fill="#000"/></svg>
<svg style="position:absolute;left:1134px;top:699px;" width="22" height="36" viewBox="0 0 22 36"><rect x="4" y="4" width="17" height="31" rx="5.5" fill="#3a4250" opacity="0.55" filter="url(#fth)"/>
<rect x="2.5" y="2.5" width="17" height="30" rx="5" fill="url(#gthumb)" stroke="#50545a" stroke-width="1.2"/>
<rect x="4.5" y="16.5" width="13" height="3.5" fill="#a8b4c4" opacity="0.5"/><rect x="5" y="17.3" width="12" height="1.8" fill="#34507c"/></svg>
<svg style="position:absolute;left:1137px;top:733px;" width="16" height="16" viewBox="0 0 16 16"><path d="M1 5 L8 13.5 L15 5" fill="none" stroke="#7a7e84" stroke-width="1.5"/>
<path d="M8 10 L14.5 1.5 L1.5 1.5 Z" fill="url(#garr)" stroke="#707478" stroke-width="1.2" stroke-linejoin="round"/></svg>
<div style="left:1163px;top:439px;width:34px;height:313px;background:linear-gradient(90deg,#fdfeff 0%,#e8eefa 35%,#c6d8f6 65%,#aec8f2 100%);"></div>
<div style="left:1197px;top:439px;width:2px;height:314px;background:#a4b4cc;"></div>
<div style="left:1163px;top:752px;width:34px;height:1px;background:#8494a8;"></div>
<span class="t" style="left:981px;width:400px;text-align:center;top:443.84px;font-size:12px;line-height:12px;font-weight:400;color:#000;transform:scaleX(0.9);">32</span>
<div style="left:1166px;top:459px;width:29px;height:17px;box-sizing:border-box;border-top:2px solid #7c7c7c;border-left:2px solid #7c7c7c;border-right:1px solid #fafafa;border-bottom:1px solid #fafafa;background:#000;"></div>
<span class="t" style="left:790.5px;width:400px;text-align:right;top:464.54px;font-size:10px;line-height:10px;font-weight:400;color:#fff;transform-origin:100% 0;">0</span>
<div style="left:1166px;top:479px;width:29px;height:53px;box-sizing:border-box;border-top:1px solid #7a7a7a;border-left:2px solid #7a7a7a;border-right:1px solid #fafafa;border-bottom:2px solid #fafafa;background:#000;"></div>
<div style="left:1168px;top:480px;width:26px;height:50px;background:#e2b2ca;"></div>
<div class="t" style="left:1169px;top:480px;font-size:12.2px;line-height:13px;color:#000010;transform:scaleX(0.78);-webkit-text-stroke:0.3px #000010;transform-origin:0 0;white-space:pre">sin...
Di...</div>
<svg style="position:absolute;left:1169px;top:507px;" width="24" height="23" viewBox="0 0 24 23"><path d="M0 3 Q0 0 3 0 L21 0 Q24 0 24 3 L24 23 L0 23 Z" fill="url(#gspot)"/>
<path d="M12 3 L3 19 L12 20 Z" fill="#b8e0fa" opacity="0.45"/>
<path d="M11.5 3 L14.5 2.5 L23 19 L15 21 Z" fill="#d8f0fc" opacity="0.85"/>
<ellipse cx="7.5" cy="18.5" rx="5.5" ry="3" fill="#d0ecfc" opacity="0.8"/>
<ellipse cx="19" cy="19.5" rx="4.5" ry="2.5" fill="#f4faff" opacity="0.9"/></svg>
<svg style="position:absolute;left:1173px;top:537px;" width="16" height="16" viewBox="0 0 16 16"><path d="M1 10.5 L8 1.5 L15 10.5" fill="none" stroke="#7a7e84" stroke-width="1.5"/>
<path d="M8 5 L14.5 13.5 L1.5 13.5 Z" fill="url(#garr)" stroke="#707478" stroke-width="1.2" stroke-linejoin="round"/></svg>
<svg style="position:absolute;left:1163px;top:569px;" width="34" height="166" viewBox="0 0 34 166"><rect x="3" y="2" width="12" height="1" fill="#5a6068"/><rect x="3" y="3" width="12" height="1" fill="#ffffff" opacity="0.8"/><rect x="20" y="2" width="13" height="1" fill="#5a6068"/><rect x="20" y="3" width="13" height="1" fill="#ffffff" opacity="0.8"/><rect x="3" y="9" width="12" height="1" fill="#5a6068"/><rect x="3" y="10" width="12" height="1" fill="#ffffff" opacity="0.8"/><rect x="20" y="9" width="13" height="1" fill="#5a6068"/><rect x="20" y="10" width="13" height="1" fill="#ffffff" opacity="0.8"/><rect x="3" y="17" width="12" height="1" fill="#5a6068"/><rect x="3" y="18" width="12" height="1" fill="#ffffff" opacity="0.8"/><rect x="20" y="17" width="13" height="1" fill="#5a6068"/><rect x="20" y="18" width="13" height="1" fill="#ffffff" opacity="0.8"/><rect x="3" y="24" width="12" height="1" fill="#5a6068"/><rect x="3" y="25" width="12" height="1" fill="#ffffff" opacity="0.8"/><rect x="20" y="24" width="13" height="1" fill="#5a6068"/><rect x="20" y="25" width="13" height="1" fill="#ffffff" opacity="0.8"/><rect x="3" y="32" width="12" height="1" fill="#5a6068"/><rect x="3" y="33" width="12" height="1" fill="#ffffff" opacity="0.8"/><rect x="20" y="32" width="13" height="1" fill="#5a6068"/><rect x="20" y="33" width="13" height="1" fill="#ffffff" opacity="0.8"/><rect x="3" y="39" width="12" height="1" fill="#5a6068"/><rect x="3" y="40" width="12" height="1" fill="#ffffff" opacity="0.8"/><rect x="20" y="39" width="13" height="1" fill="#5a6068"/><rect x="20" y="40" width="13" height="1" fill="#ffffff" opacity="0.8"/><rect x="3" y="47" width="12" height="1" fill="#5a6068"/><rect x="3" y="48" width="12" height="1" fill="#ffffff" opacity="0.8"/><rect x="20" y="47" width="13" height="1" fill="#5a6068"/><rect x="20" y="48" width="13" height="1" fill="#ffffff" opacity="0.8"/><rect x="3" y="54" width="12" height="1" fill="#5a6068"/><rect x="3" y="55" width="12" height="1" fill="#ffffff" opacity="0.8"/><rect x="20" y="54" width="13" height="1" fill="#5a6068"/><rect x="20" y="55" width="13" height="1" fill="#ffffff" opacity="0.8"/><rect x="3" y="62" width="12" height="1" fill="#5a6068"/><rect x="3" y="63" width="12" height="1" fill="#ffffff" opacity="0.8"/><rect x="20" y="62" width="13" height="1" fill="#5a6068"/><rect x="20" y="63" width="13" height="1" fill="#ffffff" opacity="0.8"/><rect x="3" y="69" width="12" height="1" fill="#5a6068"/><rect x="3" y="70" width="12" height="1" fill="#ffffff" opacity="0.8"/><rect x="20" y="69" width="13" height="1" fill="#5a6068"/><rect x="20" y="70" width="13" height="1" fill="#ffffff" opacity="0.8"/><rect x="3" y="77" width="12" height="1" fill="#5a6068"/><rect x="3" y="78" width="12" height="1" fill="#ffffff" opacity="0.8"/><rect x="20" y="77" width="13" height="1" fill="#5a6068"/><rect x="20" y="78" width="13" height="1" fill="#ffffff" opacity="0.8"/><rect x="3" y="84" width="12" height="1" fill="#5a6068"/><rect x="3" y="85" width="12" height="1" fill="#ffffff" opacity="0.8"/><rect x="20" y="84" width="13" height="1" fill="#5a6068"/><rect x="20" y="85" width="13" height="1" fill="#ffffff" opacity="0.8"/><rect x="3" y="92" width="12" height="1" fill="#5a6068"/><rect x="3" y="93" width="12" height="1" fill="#ffffff" opacity="0.8"/><rect x="20" y="92" width="13" height="1" fill="#5a6068"/><rect x="20" y="93" width="13" height="1" fill="#ffffff" opacity="0.8"/><rect x="3" y="99" width="12" height="1" fill="#5a6068"/><rect x="3" y="100" width="12" height="1" fill="#ffffff" opacity="0.8"/><rect x="20" y="99" width="13" height="1" fill="#5a6068"/><rect x="20" y="100" width="13" height="1" fill="#ffffff" opacity="0.8"/><rect x="3" y="107" width="12" height="1" fill="#5a6068"/><rect x="3" y="108" width="12" height="1" fill="#ffffff" opacity="0.8"/><rect x="20" y="107" width="13" height="1" fill="#5a6068"/><rect x="20" y="108" width="13" height="1" fill="#ffffff" opacity="0.8"/><rect x="3" y="114" width="12" height="1" fill="#5a6068"/><rect x="3" y="115" width="12" height="1" fill="#ffffff" opacity="0.8"/><rect x="20" y="114" width="13" height="1" fill="#5a6068"/><rect x="20" y="115" width="13" height="1" fill="#ffffff" opacity="0.8"/><rect x="3" y="122" width="12" height="1" fill="#5a6068"/><rect x="3" y="123" width="12" height="1" fill="#ffffff" opacity="0.8"/><rect x="20" y="122" width="13" height="1" fill="#5a6068"/><rect x="20" y="123" width="13" height="1" fill="#ffffff" opacity="0.8"/><rect x="3" y="129" width="12" height="1" fill="#5a6068"/><rect x="3" y="130" width="12" height="1" fill="#ffffff" opacity="0.8"/><rect x="20" y="129" width="13" height="1" fill="#5a6068"/><rect x="20" y="130" width="13" height="1" fill="#ffffff" opacity="0.8"/><rect x="3" y="137" width="12" height="1" fill="#5a6068"/><rect x="3" y="138" width="12" height="1" fill="#ffffff" opacity="0.8"/><rect x="20" y="137" width="13" height="1" fill="#5a6068"/><rect x="20" y="138" width="13" height="1" fill="#ffffff" opacity="0.8"/><rect x="3" y="144" width="12" height="1" fill="#5a6068"/><rect x="3" y="145" width="12" height="1" fill="#ffffff" opacity="0.8"/><rect x="20" y="144" width="13" height="1" fill="#5a6068"/><rect x="20" y="145" width="13" height="1" fill="#ffffff" opacity="0.8"/><rect x="16" y="1" width="4" height="165" fill="#eceef0"/>
<rect x="15" y="0" width="1.3" height="140" fill="#000"/><rect x="15" y="0" width="4" height="1.5" fill="#000"/></svg>
<svg style="position:absolute;left:1170px;top:699px;" width="22" height="36" viewBox="0 0 22 36"><rect x="4" y="4" width="17" height="31" rx="5.5" fill="#3a4250" opacity="0.55" filter="url(#fth)"/>
<rect x="2.5" y="2.5" width="17" height="30" rx="5" fill="url(#gthumb)" stroke="#50545a" stroke-width="1.2"/>
<rect x="4.5" y="16.5" width="13" height="3.5" fill="#a8b4c4" opacity="0.5"/><rect x="5" y="17.3" width="12" height="1.8" fill="#34507c"/></svg>
<svg style="position:absolute;left:1173px;top:733px;" width="16" height="16" viewBox="0 0 16 16"><path d="M1 5 L8 13.5 L15 5" fill="none" stroke="#7a7e84" stroke-width="1.5"/>
<path d="M8 10 L14.5 1.5 L1.5 1.5 Z" fill="url(#garr)" stroke="#707478" stroke-width="1.2" stroke-linejoin="round"/></svg>
<div style="left:1199px;top:439px;width:34px;height:313px;background:linear-gradient(90deg,#fdfeff 0%,#e8eefa 35%,#c6d8f6 65%,#aec8f2 100%);"></div>
<div style="left:1233px;top:439px;width:2px;height:314px;background:#a4b4cc;"></div>
<div style="left:1199px;top:752px;width:34px;height:1px;background:#8494a8;"></div>
<span class="t" style="left:1017px;width:400px;text-align:center;top:443.84px;font-size:12px;line-height:12px;font-weight:400;color:#000;transform:scaleX(0.9);">33</span>
<div style="left:1202px;top:459px;width:29px;height:17px;box-sizing:border-box;border-top:2px solid #7c7c7c;border-left:2px solid #7c7c7c;border-right:1px solid #fafafa;border-bottom:1px solid #fafafa;background:#000;"></div>
<span class="t" style="left:826.5px;width:400px;text-align:right;top:464.54px;font-size:10px;line-height:10px;font-weight:400;color:#fff;transform-origin:100% 0;">0</span>
<div style="left:1202px;top:479px;width:29px;height:53px;box-sizing:border-box;border-top:1px solid #7a7a7a;border-left:2px solid #7a7a7a;border-right:1px solid #fafafa;border-bottom:2px solid #fafafa;background:#000;"></div>
<div style="left:1204px;top:480px;width:26px;height:50px;background:#98b0e6;"></div>
<svg style="position:absolute;left:1209px;top:537px;" width="16" height="16" viewBox="0 0 16 16"><path d="M1 10.5 L8 1.5 L15 10.5" fill="none" stroke="#7a7e84" stroke-width="1.5"/>
<path d="M8 5 L14.5 13.5 L1.5 13.5 Z" fill="url(#garr)" stroke="#707478" stroke-width="1.2" stroke-linejoin="round"/></svg>
<svg style="position:absolute;left:1199px;top:569px;" width="34" height="166" viewBox="0 0 34 166"><rect x="3" y="2" width="12" height="1" fill="#5a6068"/><rect x="3" y="3" width="12" height="1" fill="#ffffff" opacity="0.8"/><rect x="20" y="2" width="13" height="1" fill="#5a6068"/><rect x="20" y="3" width="13" height="1" fill="#ffffff" opacity="0.8"/><rect x="3" y="9" width="12" height="1" fill="#5a6068"/><rect x="3" y="10" width="12" height="1" fill="#ffffff" opacity="0.8"/><rect x="20" y="9" width="13" height="1" fill="#5a6068"/><rect x="20" y="10" width="13" height="1" fill="#ffffff" opacity="0.8"/><rect x="3" y="17" width="12" height="1" fill="#5a6068"/><rect x="3" y="18" width="12" height="1" fill="#ffffff" opacity="0.8"/><rect x="20" y="17" width="13" height="1" fill="#5a6068"/><rect x="20" y="18" width="13" height="1" fill="#ffffff" opacity="0.8"/><rect x="3" y="24" width="12" height="1" fill="#5a6068"/><rect x="3" y="25" width="12" height="1" fill="#ffffff" opacity="0.8"/><rect x="20" y="24" width="13" height="1" fill="#5a6068"/><rect x="20" y="25" width="13" height="1" fill="#ffffff" opacity="0.8"/><rect x="3" y="32" width="12" height="1" fill="#5a6068"/><rect x="3" y="33" width="12" height="1" fill="#ffffff" opacity="0.8"/><rect x="20" y="32" width="13" height="1" fill="#5a6068"/><rect x="20" y="33" width="13" height="1" fill="#ffffff" opacity="0.8"/><rect x="3" y="39" width="12" height="1" fill="#5a6068"/><rect x="3" y="40" width="12" height="1" fill="#ffffff" opacity="0.8"/><rect x="20" y="39" width="13" height="1" fill="#5a6068"/><rect x="20" y="40" width="13" height="1" fill="#ffffff" opacity="0.8"/><rect x="3" y="47" width="12" height="1" fill="#5a6068"/><rect x="3" y="48" width="12" height="1" fill="#ffffff" opacity="0.8"/><rect x="20" y="47" width="13" height="1" fill="#5a6068"/><rect x="20" y="48" width="13" height="1" fill="#ffffff" opacity="0.8"/><rect x="3" y="54" width="12" height="1" fill="#5a6068"/><rect x="3" y="55" width="12" height="1" fill="#ffffff" opacity="0.8"/><rect x="20" y="54" width="13" height="1" fill="#5a6068"/><rect x="20" y="55" width="13" height="1" fill="#ffffff" opacity="0.8"/><rect x="3" y="62" width="12" height="1" fill="#5a6068"/><rect x="3" y="63" width="12" height="1" fill="#ffffff" opacity="0.8"/><rect x="20" y="62" width="13" height="1" fill="#5a6068"/><rect x="20" y="63" width="13" height="1" fill="#ffffff" opacity="0.8"/><rect x="3" y="69" width="12" height="1" fill="#5a6068"/><rect x="3" y="70" width="12" height="1" fill="#ffffff" opacity="0.8"/><rect x="20" y="69" width="13" height="1" fill="#5a6068"/><rect x="20" y="70" width="13" height="1" fill="#ffffff" opacity="0.8"/><rect x="3" y="77" width="12" height="1" fill="#5a6068"/><rect x="3" y="78" width="12" height="1" fill="#ffffff" opacity="0.8"/><rect x="20" y="77" width="13" height="1" fill="#5a6068"/><rect x="20" y="78" width="13" height="1" fill="#ffffff" opacity="0.8"/><rect x="3" y="84" width="12" height="1" fill="#5a6068"/><rect x="3" y="85" width="12" height="1" fill="#ffffff" opacity="0.8"/><rect x="20" y="84" width="13" height="1" fill="#5a6068"/><rect x="20" y="85" width="13" height="1" fill="#ffffff" opacity="0.8"/><rect x="3" y="92" width="12" height="1" fill="#5a6068"/><rect x="3" y="93" width="12" height="1" fill="#ffffff" opacity="0.8"/><rect x="20" y="92" width="13" height="1" fill="#5a6068"/><rect x="20" y="93" width="13" height="1" fill="#ffffff" opacity="0.8"/><rect x="3" y="99" width="12" height="1" fill="#5a6068"/><rect x="3" y="100" width="12" height="1" fill="#ffffff" opacity="0.8"/><rect x="20" y="99" width="13" height="1" fill="#5a6068"/><rect x="20" y="100" width="13" height="1" fill="#ffffff" opacity="0.8"/><rect x="3" y="107" width="12" height="1" fill="#5a6068"/><rect x="3" y="108" width="12" height="1" fill="#ffffff" opacity="0.8"/><rect x="20" y="107" width="13" height="1" fill="#5a6068"/><rect x="20" y="108" width="13" height="1" fill="#ffffff" opacity="0.8"/><rect x="3" y="114" width="12" height="1" fill="#5a6068"/><rect x="3" y="115" width="12" height="1" fill="#ffffff" opacity="0.8"/><rect x="20" y="114" width="13" height="1" fill="#5a6068"/><rect x="20" y="115" width="13" height="1" fill="#ffffff" opacity="0.8"/><rect x="3" y="122" width="12" height="1" fill="#5a6068"/><rect x="3" y="123" width="12" height="1" fill="#ffffff" opacity="0.8"/><rect x="20" y="122" width="13" height="1" fill="#5a6068"/><rect x="20" y="123" width="13" height="1" fill="#ffffff" opacity="0.8"/><rect x="3" y="129" width="12" height="1" fill="#5a6068"/><rect x="3" y="130" width="12" height="1" fill="#ffffff" opacity="0.8"/><rect x="20" y="129" width="13" height="1" fill="#5a6068"/><rect x="20" y="130" width="13" height="1" fill="#ffffff" opacity="0.8"/><rect x="3" y="137" width="12" height="1" fill="#5a6068"/><rect x="3" y="138" width="12" height="1" fill="#ffffff" opacity="0.8"/><rect x="20" y="137" width="13" height="1" fill="#5a6068"/><rect x="20" y="138" width="13" height="1" fill="#ffffff" opacity="0.8"/><rect x="3" y="144" width="12" height="1" fill="#5a6068"/><rect x="3" y="145" width="12" height="1" fill="#ffffff" opacity="0.8"/><rect x="20" y="144" width="13" height="1" fill="#5a6068"/><rect x="20" y="145" width="13" height="1" fill="#ffffff" opacity="0.8"/><rect x="16" y="1" width="4" height="165" fill="#eceef0"/>
<rect x="15" y="0" width="1.3" height="140" fill="#000"/><rect x="15" y="0" width="4" height="1.5" fill="#000"/></svg>
<svg style="position:absolute;left:1206px;top:699px;" width="22" height="36" viewBox="0 0 22 36"><rect x="4" y="4" width="17" height="31" rx="5.5" fill="#3a4250" opacity="0.55" filter="url(#fth)"/>
<rect x="2.5" y="2.5" width="17" height="30" rx="5" fill="url(#gthumb)" stroke="#50545a" stroke-width="1.2"/>
<rect x="4.5" y="16.5" width="13" height="3.5" fill="#a8b4c4" opacity="0.5"/><rect x="5" y="17.3" width="12" height="1.8" fill="#34507c"/></svg>
<svg style="position:absolute;left:1209px;top:733px;" width="16" height="16" viewBox="0 0 16 16"><path d="M1 5 L8 13.5 L15 5" fill="none" stroke="#7a7e84" stroke-width="1.5"/>
<path d="M8 10 L14.5 1.5 L1.5 1.5 Z" fill="url(#garr)" stroke="#707478" stroke-width="1.2" stroke-linejoin="round"/></svg>
<div style="left:1235px;top:439px;width:34px;height:313px;background:linear-gradient(90deg,#fdfeff 0%,#e8eefa 35%,#c6d8f6 65%,#aec8f2 100%);"></div>
<div style="left:1269px;top:439px;width:2px;height:314px;background:#f8f8f8;"></div>
<div style="left:1235px;top:752px;width:34px;height:1px;background:#8494a8;"></div>
<span class="t" style="left:1053px;width:400px;text-align:center;top:443.84px;font-size:12px;line-height:12px;font-weight:400;color:#000;transform:scaleX(0.9);">34</span>
<div style="left:1238px;top:459px;width:29px;height:17px;box-sizing:border-box;border-top:2px solid #7c7c7c;border-left:2px solid #7c7c7c;border-right:1px solid #fafafa;border-bottom:1px solid #fafafa;background:#000;"></div>
<span class="t" style="left:862.5px;width:400px;text-align:right;top:464.54px;font-size:10px;line-height:10px;font-weight:400;color:#fff;transform-origin:100% 0;">0</span>
<div style="left:1238px;top:479px;width:29px;height:53px;box-sizing:border-box;border-top:1px solid #7a7a7a;border-left:2px solid #7a7a7a;border-right:1px solid #fafafa;border-bottom:2px solid #fafafa;background:#000;"></div>
<div style="left:1240px;top:480px;width:26px;height:50px;background:#98b0e6;"></div>
<svg style="position:absolute;left:1245px;top:537px;" width="16" height="16" viewBox="0 0 16 16"><path d="M1 10.5 L8 1.5 L15 10.5" fill="none" stroke="#7a7e84" stroke-width="1.5"/>
<path d="M8 5 L14.5 13.5 L1.5 13.5 Z" fill="url(#garr)" stroke="#707478" stroke-width="1.2" stroke-linejoin="round"/></svg>
<svg style="position:absolute;left:1235px;top:569px;" width="34" height="166" viewBox="0 0 34 166"><rect x="3" y="2" width="12" height="1" fill="#5a6068"/><rect x="3" y="3" width="12" height="1" fill="#ffffff" opacity="0.8"/><rect x="20" y="2" width="13" height="1" fill="#5a6068"/><rect x="20" y="3" width="13" height="1" fill="#ffffff" opacity="0.8"/><rect x="3" y="9" width="12" height="1" fill="#5a6068"/><rect x="3" y="10" width="12" height="1" fill="#ffffff" opacity="0.8"/><rect x="20" y="9" width="13" height="1" fill="#5a6068"/><rect x="20" y="10" width="13" height="1" fill="#ffffff" opacity="0.8"/><rect x="3" y="17" width="12" height="1" fill="#5a6068"/><rect x="3" y="18" width="12" height="1" fill="#ffffff" opacity="0.8"/><rect x="20" y="17" width="13" height="1" fill="#5a6068"/><rect x="20" y="18" width="13" height="1" fill="#ffffff" opacity="0.8"/><rect x="3" y="24" width="12" height="1" fill="#5a6068"/><rect x="3" y="25" width="12" height="1" fill="#ffffff" opacity="0.8"/><rect x="20" y="24" width="13" height="1" fill="#5a6068"/><rect x="20" y="25" width="13" height="1" fill="#ffffff" opacity="0.8"/><rect x="3" y="32" width="12" height="1" fill="#5a6068"/><rect x="3" y="33" width="12" height="1" fill="#ffffff" opacity="0.8"/><rect x="20" y="32" width="13" height="1" fill="#5a6068"/><rect x="20" y="33" width="13" height="1" fill="#ffffff" opacity="0.8"/><rect x="3" y="39" width="12" height="1" fill="#5a6068"/><rect x="3" y="40" width="12" height="1" fill="#ffffff" opacity="0.8"/><rect x="20" y="39" width="13" height="1" fill="#5a6068"/><rect x="20" y="40" width="13" height="1" fill="#ffffff" opacity="0.8"/><rect x="3" y="47" width="12" height="1" fill="#5a6068"/><rect x="3" y="48" width="12" height="1" fill="#ffffff" opacity="0.8"/><rect x="20" y="47" width="13" height="1" fill="#5a6068"/><rect x="20" y="48" width="13" height="1" fill="#ffffff" opacity="0.8"/><rect x="3" y="54" width="12" height="1" fill="#5a6068"/><rect x="3" y="55" width="12" height="1" fill="#ffffff" opacity="0.8"/><rect x="20" y="54" width="13" height="1" fill="#5a6068"/><rect x="20" y="55" width="13" height="1" fill="#ffffff" opacity="0.8"/><rect x="3" y="62" width="12" height="1" fill="#5a6068"/><rect x="3" y="63" width="12" height="1" fill="#ffffff" opacity="0.8"/><rect x="20" y="62" width="13" height="1" fill="#5a6068"/><rect x="20" y="63" width="13" height="1" fill="#ffffff" opacity="0.8"/><rect x="3" y="69" width="12" height="1" fill="#5a6068"/><rect x="3" y="70" width="12" height="1" fill="#ffffff" opacity="0.8"/><rect x="20" y="69" width="13" height="1" fill="#5a6068"/><rect x="20" y="70" width="13" height="1" fill="#ffffff" opacity="0.8"/><rect x="3" y="77" width="12" height="1" fill="#5a6068"/><rect x="3" y="78" width="12" height="1" fill="#ffffff" opacity="0.8"/><rect x="20" y="77" width="13" height="1" fill="#5a6068"/><rect x="20" y="78" width="13" height="1" fill="#ffffff" opacity="0.8"/><rect x="3" y="84" width="12" height="1" fill="#5a6068"/><rect x="3" y="85" width="12" height="1" fill="#ffffff" opacity="0.8"/><rect x="20" y="84" width="13" height="1" fill="#5a6068"/><rect x="20" y="85" width="13" height="1" fill="#ffffff" opacity="0.8"/><rect x="3" y="92" width="12" height="1" fill="#5a6068"/><rect x="3" y="93" width="12" height="1" fill="#ffffff" opacity="0.8"/><rect x="20" y="92" width="13" height="1" fill="#5a6068"/><rect x="20" y="93" width="13" height="1" fill="#ffffff" opacity="0.8"/><rect x="3" y="99" width="12" height="1" fill="#5a6068"/><rect x="3" y="100" width="12" height="1" fill="#ffffff" opacity="0.8"/><rect x="20" y="99" width="13" height="1" fill="#5a6068"/><rect x="20" y="100" width="13" height="1" fill="#ffffff" opacity="0.8"/><rect x="3" y="107" width="12" height="1" fill="#5a6068"/><rect x="3" y="108" width="12" height="1" fill="#ffffff" opacity="0.8"/><rect x="20" y="107" width="13" height="1" fill="#5a6068"/><rect x="20" y="108" width="13" height="1" fill="#ffffff" opacity="0.8"/><rect x="3" y="114" width="12" height="1" fill="#5a6068"/><rect x="3" y="115" width="12" height="1" fill="#ffffff" opacity="0.8"/><rect x="20" y="114" width="13" height="1" fill="#5a6068"/><rect x="20" y="115" width="13" height="1" fill="#ffffff" opacity="0.8"/><rect x="3" y="122" width="12" height="1" fill="#5a6068"/><rect x="3" y="123" width="12" height="1" fill="#ffffff" opacity="0.8"/><rect x="20" y="122" width="13" height="1" fill="#5a6068"/><rect x="20" y="123" width="13" height="1" fill="#ffffff" opacity="0.8"/><rect x="3" y="129" width="12" height="1" fill="#5a6068"/><rect x="3" y="130" width="12" height="1" fill="#ffffff" opacity="0.8"/><rect x="20" y="129" width="13" height="1" fill="#5a6068"/><rect x="20" y="130" width="13" height="1" fill="#ffffff" opacity="0.8"/><rect x="3" y="137" width="12" height="1" fill="#5a6068"/><rect x="3" y="138" width="12" height="1" fill="#ffffff" opacity="0.8"/><rect x="20" y="137" width="13" height="1" fill="#5a6068"/><rect x="20" y="138" width="13" height="1" fill="#ffffff" opacity="0.8"/><rect x="3" y="144" width="12" height="1" fill="#5a6068"/><rect x="3" y="145" width="12" height="1" fill="#ffffff" opacity="0.8"/><rect x="20" y="144" width="13" height="1" fill="#5a6068"/><rect x="20" y="145" width="13" height="1" fill="#ffffff" opacity="0.8"/><rect x="16" y="1" width="4" height="165" fill="#eceef0"/>
<rect x="15" y="0" width="1.3" height="140" fill="#000"/><rect x="15" y="0" width="4" height="1.5" fill="#000"/></svg>
<svg style="position:absolute;left:1242px;top:699px;" width="22" height="36" viewBox="0 0 22 36"><rect x="4" y="4" width="17" height="31" rx="5.5" fill="#3a4250" opacity="0.55" filter="url(#fth)"/>
<rect x="2.5" y="2.5" width="17" height="30" rx="5" fill="url(#gthumb)" stroke="#50545a" stroke-width="1.2"/>
<rect x="4.5" y="16.5" width="13" height="3.5" fill="#a8b4c4" opacity="0.5"/><rect x="5" y="17.3" width="12" height="1.8" fill="#34507c"/></svg>
<svg style="position:absolute;left:1245px;top:733px;" width="16" height="16" viewBox="0 0 16 16"><path d="M1 5 L8 13.5 L15 5" fill="none" stroke="#7a7e84" stroke-width="1.5"/>
<path d="M8 10 L14.5 1.5 L1.5 1.5 Z" fill="url(#garr)" stroke="#707478" stroke-width="1.2" stroke-linejoin="round"/></svg>
<div style="left:10px;top:753px;width:1262px;height:17px;background:#ececec;"></div>
<svg style="position:absolute;left:14px;top:757px;" width="8" height="9" viewBox="0 0 8 9"><path d="M6 0.5 L1.5 4.5 L6 8.5 Z" fill="#404040"/></svg>
<svg style="position:absolute;left:1259px;top:757px;" width="8" height="9" viewBox="0 0 8 9"><path d="M1 0.5 L5 4.5 L1 8.5 Z" fill="#303030"/></svg>
<div style="left:28px;top:755px;width:77px;height:14px;box-sizing:border-box;border:1px solid #9a9a9a;border-radius:2px;background:linear-gradient(180deg,#f0f0f0 0%,#e8e8e8 45%,#d4d4d8 55%,#cacace 100%);"></div>
<div style="left:62px;top:758px;width:1.5px;height:7px;background:#484848;"></div>
<div style="left:65px;top:758px;width:1.5px;height:7px;background:#484848;"></div>
<div style="left:68px;top:758px;width:1.5px;height:7px;background:#484848;"></div>
<div style="left:8px;top:770px;width:1264px;height:22px;background:linear-gradient(180deg,#fafafa 0%,#f0f0f0 40%,#eeeeee 100%);"></div>
<div style="left:8px;top:770px;width:1264px;height:1px;background:#ffffff;"></div>
<div style="left:8px;top:770px;width:1px;height:22px;background:#a0a0a0;"></div>
<div style="left:26px;top:774px;width:30px;height:18px;box-sizing:border-box;border:2px solid #2a7ab8;border-bottom:none;background:linear-gradient(180deg,#fafafa,#dfe4f4);"></div>
<div class="t" style="left:28px;top:778.5px;width:26px;text-align:center;font-size:8.5px;line-height:10px;font-weight:700;color:#e46a6a;letter-spacing:-0.3px">DEMO</div>
<span class="t" style="left:75.71px;top:776.34px;font-size:12px;line-height:12px;font-weight:400;color:#000;transform-origin:0 0;transform:scaleX(0.9868);">DEMO mode</span>
<div style="left:1267px;top:782px;width:2px;height:2px;background:#b4bcc4;"></div>
<div style="left:1264px;top:785px;width:2px;height:2px;background:#b4bcc4;"></div>
<div style="left:1267px;top:785px;width:2px;height:2px;background:#b4bcc4;"></div>
<div style="left:1261px;top:788px;width:2px;height:2px;background:#b4bcc4;"></div>
<div style="left:1264px;top:788px;width:2px;height:2px;background:#b4bcc4;"></div>
<div style="left:1267px;top:788px;width:2px;height:2px;background:#b4bcc4;"></div>
</body></html>
